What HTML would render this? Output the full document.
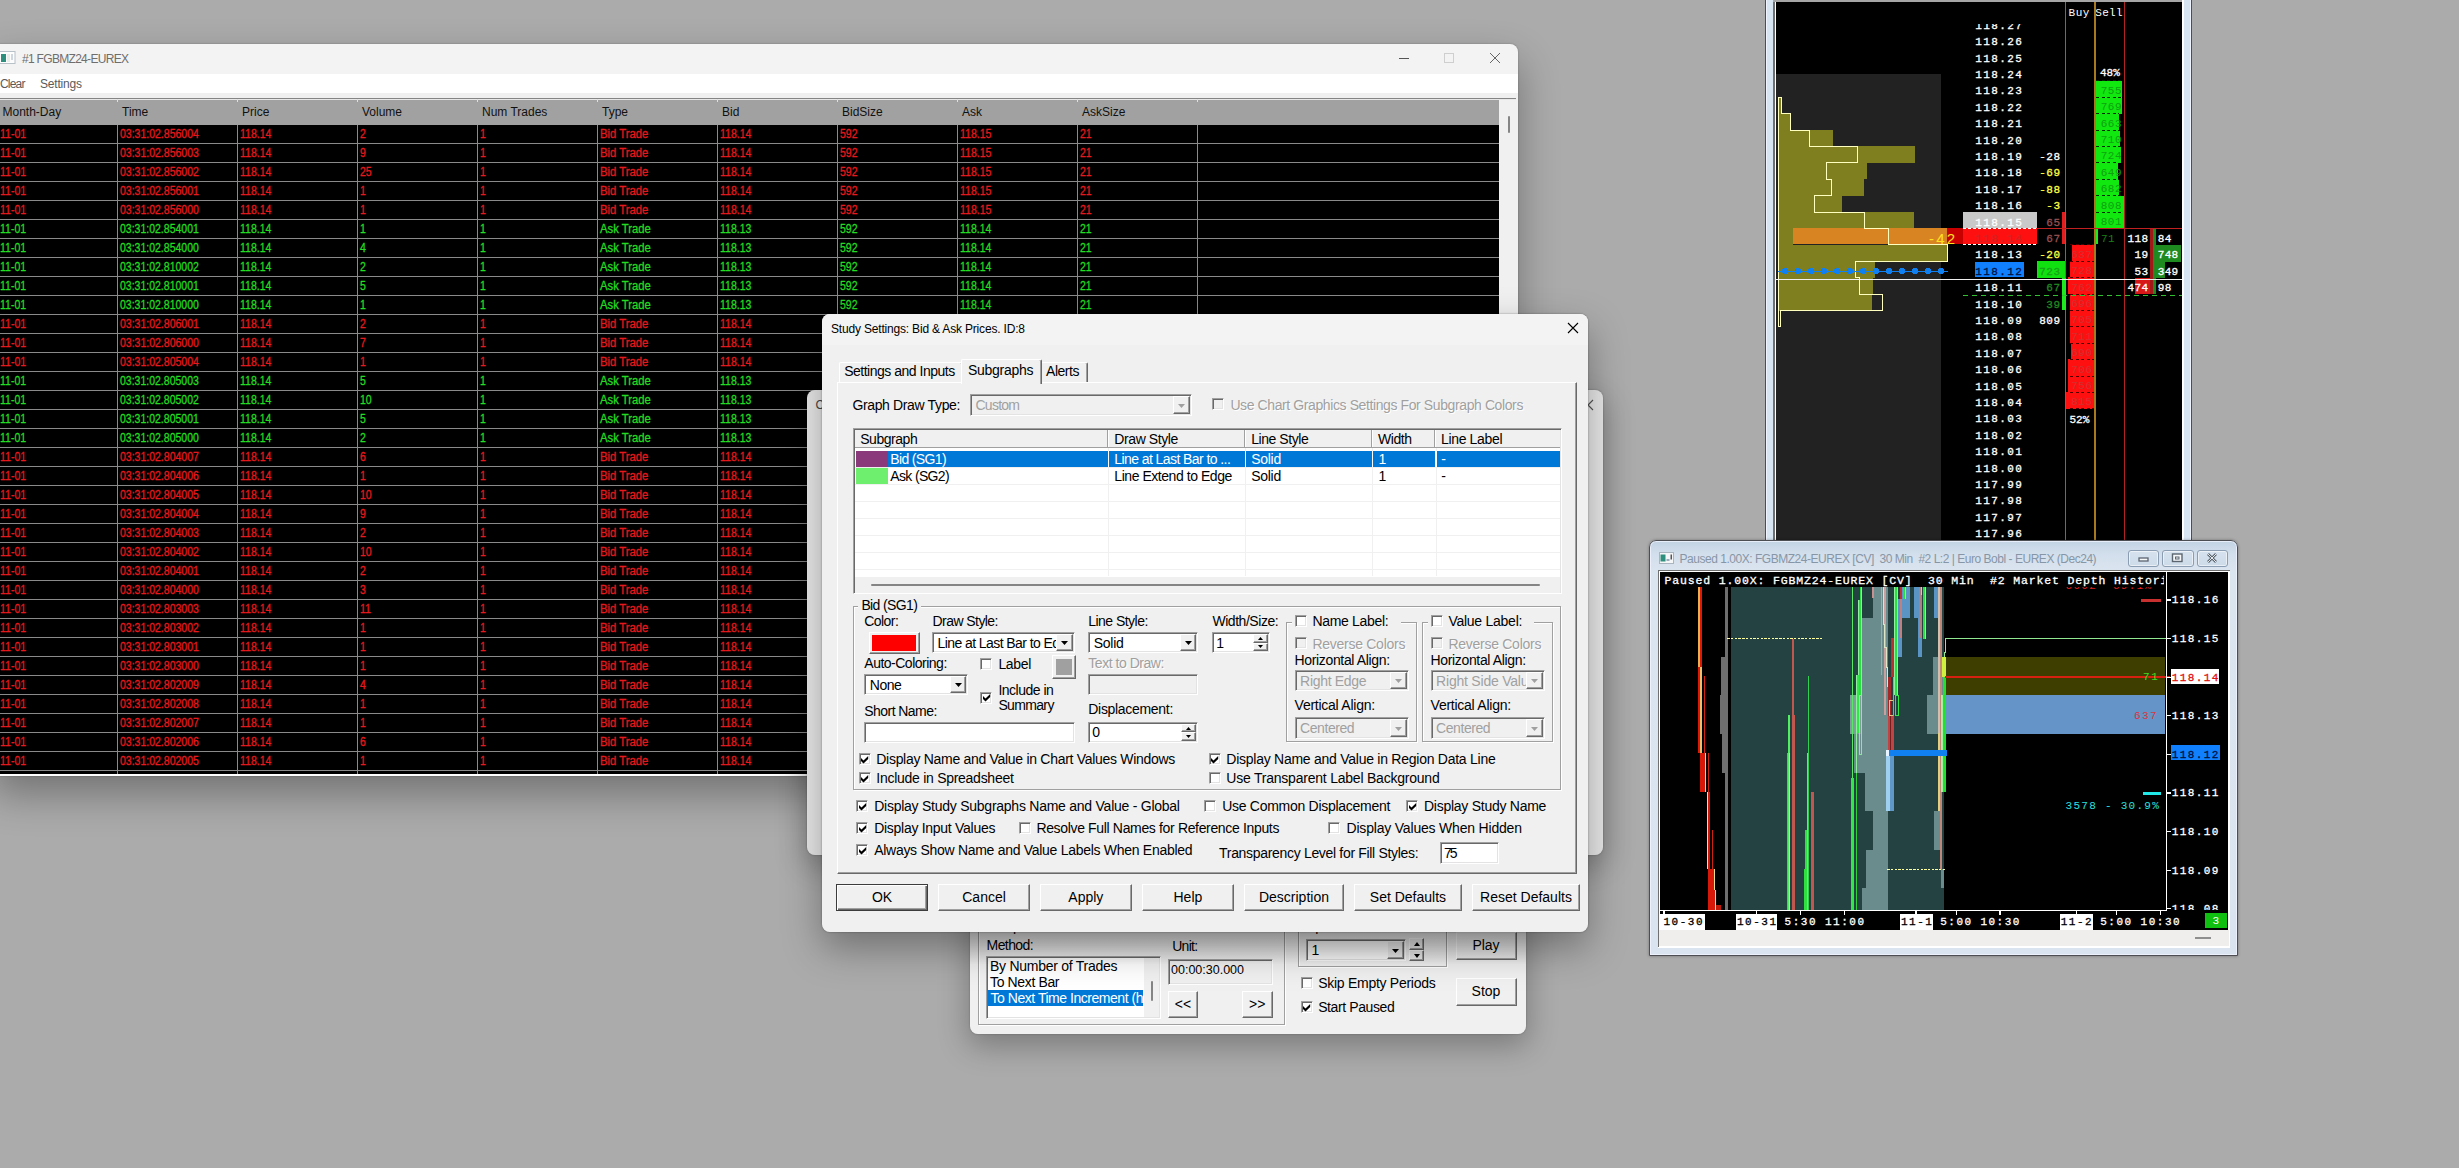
<!DOCTYPE html><html><head><meta charset="utf-8"><title>screen</title><style>
html,body{margin:0;padding:0}
body{width:2459px;height:1168px;overflow:hidden;background:#ababab;position:relative;font-family:"Liberation Sans",sans-serif}
.r{position:absolute;box-sizing:border-box}
.t{position:absolute;white-space:pre;display:block}
.layer{position:absolute;left:0;top:0;width:2459px;height:1168px;overflow:hidden}
svg{position:absolute;overflow:visible}
</style></head><body><!-- part_table --><div class="r" style="left:-8px;top:44px;width:1526px;height:732px;border-radius:8px;box-shadow:0 18px 40px 0 rgba(0,0,0,.33), 0 0 2px rgba(0,0,0,.3);"></div><div class="layer" style="clip-path:inset(44px 941px 392px -8px round 8px);"><div class="r" style="left:-8.00px;top:44.00px;width:1526.00px;height:30.00px;background:#f3f3f3;"></div><div class="r" style="left:-8.00px;top:74.00px;width:1526.00px;height:18.50px;background:#ffffff;"></div><div class="r" style="left:-8.00px;top:92.50px;width:1526.00px;height:683.50px;background:#f0f0f0;"></div><svg class="r" style="left:0;top:51px" width="16" height="14" viewBox="0 0 16 14"><rect x="-3" y="0.5" width="18" height="12" fill="#fdfdfd" stroke="#b8c0c8"/><rect x="1" y="3" width="5" height="8" fill="#2f8f7f"/><rect x="7" y="3" width="3" height="8" fill="#e8efe8"/><rect x="11" y="3" width="2" height="6" fill="#cfd8e0"/></svg><span class="t" style="top:50.60px;font:12px 'Liberation Sans', sans-serif;line-height:16px;color:#6e6e6e;letter-spacing:-0.692px;left:22.00px;">#1 FGBMZ24-EUREX</span><span class="t" style="top:75.80px;font:12px 'Liberation Sans', sans-serif;line-height:16px;color:#5a5a5a;letter-spacing:-0.797px;left:0.00px;">Clear</span><span class="t" style="top:75.80px;font:12px 'Liberation Sans', sans-serif;line-height:16px;color:#5a5a5a;letter-spacing:-0.194px;left:40.00px;">Settings</span><svg class="r" style="left:1390px;top:48px" width="120" height="22" viewBox="0 0 120 22" fill="none"><path d="M9 10.5h10" stroke="#555" stroke-width="1"/><rect x="54.5" y="5.5" width="9" height="9" stroke="#cfcfcf"/><path d="M100 5l10 10M110 5l-10 10" stroke="#666" stroke-width="1"/></svg><div class="r" style="left:0.00px;top:97.60px;width:1516.00px;height:1.20px;background:#858585;"></div><div class="r" style="left:0.00px;top:99.00px;width:1516.00px;height:1.00px;background:#e8e8e8;"></div><div class="r" style="left:0.00px;top:100.00px;width:1499.00px;height:25.00px;background:#a1a1a1;"></div><div class="r" style="left:0.00px;top:125.00px;width:1499.00px;height:649.00px;background:#000;"></div><div class="r" style="left:0.00px;top:774.00px;width:1499.00px;height:2.00px;background:#fff;"></div><span class="t" style="top:104.00px;font:12px 'Liberation Sans', sans-serif;line-height:16px;color:#111;left:2.50px;">Month-Day</span><div class="r" style="left:117.00px;top:99.00px;width:1.00px;height:3.00px;background:#e0e0e0;"></div><span class="t" style="top:104.00px;font:12px 'Liberation Sans', sans-serif;line-height:16px;color:#111;left:122.00px;">Time</span><div class="r" style="left:237.00px;top:99.00px;width:1.00px;height:3.00px;background:#e0e0e0;"></div><span class="t" style="top:104.00px;font:12px 'Liberation Sans', sans-serif;line-height:16px;color:#111;left:242.00px;">Price</span><div class="r" style="left:357.00px;top:99.00px;width:1.00px;height:3.00px;background:#e0e0e0;"></div><span class="t" style="top:104.00px;font:12px 'Liberation Sans', sans-serif;line-height:16px;color:#111;left:362.00px;">Volume</span><div class="r" style="left:477.00px;top:99.00px;width:1.00px;height:3.00px;background:#e0e0e0;"></div><span class="t" style="top:104.00px;font:12px 'Liberation Sans', sans-serif;line-height:16px;color:#111;left:482.00px;">Num Trades</span><div class="r" style="left:597.00px;top:99.00px;width:1.00px;height:3.00px;background:#e0e0e0;"></div><span class="t" style="top:104.00px;font:12px 'Liberation Sans', sans-serif;line-height:16px;color:#111;left:602.00px;">Type</span><div class="r" style="left:717.00px;top:99.00px;width:1.00px;height:3.00px;background:#e0e0e0;"></div><span class="t" style="top:104.00px;font:12px 'Liberation Sans', sans-serif;line-height:16px;color:#111;left:722.00px;">Bid</span><div class="r" style="left:837.00px;top:99.00px;width:1.00px;height:3.00px;background:#e0e0e0;"></div><span class="t" style="top:104.00px;font:12px 'Liberation Sans', sans-serif;line-height:16px;color:#111;left:842.00px;">BidSize</span><div class="r" style="left:957.00px;top:99.00px;width:1.00px;height:3.00px;background:#e0e0e0;"></div><span class="t" style="top:104.00px;font:12px 'Liberation Sans', sans-serif;line-height:16px;color:#111;left:962.00px;">Ask</span><div class="r" style="left:1077.00px;top:99.00px;width:1.00px;height:3.00px;background:#e0e0e0;"></div><span class="t" style="top:104.00px;font:12px 'Liberation Sans', sans-serif;line-height:16px;color:#111;left:1082.00px;">AskSize</span><div class="r" style="left:1197.00px;top:99.00px;width:1.00px;height:3.00px;background:#e0e0e0;"></div><div class="r" style="left:117.00px;top:125.00px;width:1.00px;height:649.00px;background:#8a8a8a;"></div><div class="r" style="left:237.00px;top:125.00px;width:1.00px;height:649.00px;background:#8a8a8a;"></div><div class="r" style="left:357.00px;top:125.00px;width:1.00px;height:649.00px;background:#8a8a8a;"></div><div class="r" style="left:477.00px;top:125.00px;width:1.00px;height:649.00px;background:#8a8a8a;"></div><div class="r" style="left:597.00px;top:125.00px;width:1.00px;height:649.00px;background:#8a8a8a;"></div><div class="r" style="left:717.00px;top:125.00px;width:1.00px;height:649.00px;background:#8a8a8a;"></div><div class="r" style="left:837.00px;top:125.00px;width:1.00px;height:649.00px;background:#8a8a8a;"></div><div class="r" style="left:957.00px;top:125.00px;width:1.00px;height:649.00px;background:#8a8a8a;"></div><div class="r" style="left:1077.00px;top:125.00px;width:1.00px;height:649.00px;background:#8a8a8a;"></div><div class="r" style="left:1197.00px;top:125.00px;width:1.00px;height:649.00px;background:#8a8a8a;"></div><div class="r" style="left:0.00px;top:143.00px;width:1499.00px;height:1.00px;background:#8a8a8a;"></div><div class="r" style="left:0.00px;top:162.00px;width:1499.00px;height:1.00px;background:#8a8a8a;"></div><div class="r" style="left:0.00px;top:181.00px;width:1499.00px;height:1.00px;background:#8a8a8a;"></div><div class="r" style="left:0.00px;top:200.00px;width:1499.00px;height:1.00px;background:#8a8a8a;"></div><div class="r" style="left:0.00px;top:219.00px;width:1499.00px;height:1.00px;background:#8a8a8a;"></div><div class="r" style="left:0.00px;top:238.00px;width:1499.00px;height:1.00px;background:#8a8a8a;"></div><div class="r" style="left:0.00px;top:257.00px;width:1499.00px;height:1.00px;background:#8a8a8a;"></div><div class="r" style="left:0.00px;top:276.00px;width:1499.00px;height:1.00px;background:#8a8a8a;"></div><div class="r" style="left:0.00px;top:295.00px;width:1499.00px;height:1.00px;background:#8a8a8a;"></div><div class="r" style="left:0.00px;top:314.00px;width:1499.00px;height:1.00px;background:#8a8a8a;"></div><div class="r" style="left:0.00px;top:333.00px;width:1499.00px;height:1.00px;background:#8a8a8a;"></div><div class="r" style="left:0.00px;top:352.00px;width:1499.00px;height:1.00px;background:#8a8a8a;"></div><div class="r" style="left:0.00px;top:371.00px;width:1499.00px;height:1.00px;background:#8a8a8a;"></div><div class="r" style="left:0.00px;top:390.00px;width:1499.00px;height:1.00px;background:#8a8a8a;"></div><div class="r" style="left:0.00px;top:409.00px;width:1499.00px;height:1.00px;background:#8a8a8a;"></div><div class="r" style="left:0.00px;top:428.00px;width:1499.00px;height:1.00px;background:#8a8a8a;"></div><div class="r" style="left:0.00px;top:447.00px;width:1499.00px;height:1.00px;background:#8a8a8a;"></div><div class="r" style="left:0.00px;top:466.00px;width:1499.00px;height:1.00px;background:#8a8a8a;"></div><div class="r" style="left:0.00px;top:485.00px;width:1499.00px;height:1.00px;background:#8a8a8a;"></div><div class="r" style="left:0.00px;top:504.00px;width:1499.00px;height:1.00px;background:#8a8a8a;"></div><div class="r" style="left:0.00px;top:523.00px;width:1499.00px;height:1.00px;background:#8a8a8a;"></div><div class="r" style="left:0.00px;top:542.00px;width:1499.00px;height:1.00px;background:#8a8a8a;"></div><div class="r" style="left:0.00px;top:561.00px;width:1499.00px;height:1.00px;background:#8a8a8a;"></div><div class="r" style="left:0.00px;top:580.00px;width:1499.00px;height:1.00px;background:#8a8a8a;"></div><div class="r" style="left:0.00px;top:599.00px;width:1499.00px;height:1.00px;background:#8a8a8a;"></div><div class="r" style="left:0.00px;top:618.00px;width:1499.00px;height:1.00px;background:#8a8a8a;"></div><div class="r" style="left:0.00px;top:637.00px;width:1499.00px;height:1.00px;background:#8a8a8a;"></div><div class="r" style="left:0.00px;top:656.00px;width:1499.00px;height:1.00px;background:#8a8a8a;"></div><div class="r" style="left:0.00px;top:675.00px;width:1499.00px;height:1.00px;background:#8a8a8a;"></div><div class="r" style="left:0.00px;top:694.00px;width:1499.00px;height:1.00px;background:#8a8a8a;"></div><div class="r" style="left:0.00px;top:713.00px;width:1499.00px;height:1.00px;background:#8a8a8a;"></div><div class="r" style="left:0.00px;top:732.00px;width:1499.00px;height:1.00px;background:#8a8a8a;"></div><div class="r" style="left:0.00px;top:751.00px;width:1499.00px;height:1.00px;background:#8a8a8a;"></div><div class="r" style="left:0.00px;top:770.00px;width:1499.00px;height:1.00px;background:#8a8a8a;"></div><span class="t" style="top:125.60px;font:12px 'Liberation Sans', sans-serif;line-height:16px;color:#e8181c;left:-0.50px;transform:scaleX(0.875);transform-origin:0 50%;-webkit-text-stroke:0.3px #e8181c;">11-01</span><span class="t" style="top:125.60px;font:12px 'Liberation Sans', sans-serif;line-height:16px;color:#e8181c;left:119.50px;transform:scaleX(0.875);transform-origin:0 50%;-webkit-text-stroke:0.3px #e8181c;">03:31:02.856004</span><span class="t" style="top:125.60px;font:12px 'Liberation Sans', sans-serif;line-height:16px;color:#e8181c;left:239.50px;transform:scaleX(0.875);transform-origin:0 50%;-webkit-text-stroke:0.3px #e8181c;">118.14</span><span class="t" style="top:125.60px;font:12px 'Liberation Sans', sans-serif;line-height:16px;color:#e8181c;left:359.50px;transform:scaleX(0.875);transform-origin:0 50%;-webkit-text-stroke:0.3px #e8181c;">2</span><span class="t" style="top:125.60px;font:12px 'Liberation Sans', sans-serif;line-height:16px;color:#e8181c;left:479.50px;transform:scaleX(0.875);transform-origin:0 50%;-webkit-text-stroke:0.3px #e8181c;">1</span><span class="t" style="top:125.60px;font:12px 'Liberation Sans', sans-serif;line-height:16px;color:#e8181c;left:599.50px;transform:scaleX(0.94);transform-origin:0 50%;-webkit-text-stroke:0.3px #e8181c;">Bid Trade</span><span class="t" style="top:125.60px;font:12px 'Liberation Sans', sans-serif;line-height:16px;color:#e8181c;left:719.50px;transform:scaleX(0.875);transform-origin:0 50%;-webkit-text-stroke:0.3px #e8181c;">118.14</span><span class="t" style="top:125.60px;font:12px 'Liberation Sans', sans-serif;line-height:16px;color:#e8181c;left:839.50px;transform:scaleX(0.875);transform-origin:0 50%;-webkit-text-stroke:0.3px #e8181c;">592</span><span class="t" style="top:125.60px;font:12px 'Liberation Sans', sans-serif;line-height:16px;color:#e8181c;left:959.50px;transform:scaleX(0.875);transform-origin:0 50%;-webkit-text-stroke:0.3px #e8181c;">118.15</span><span class="t" style="top:125.60px;font:12px 'Liberation Sans', sans-serif;line-height:16px;color:#e8181c;left:1079.50px;transform:scaleX(0.875);transform-origin:0 50%;-webkit-text-stroke:0.3px #e8181c;">21</span><span class="t" style="top:144.60px;font:12px 'Liberation Sans', sans-serif;line-height:16px;color:#e8181c;left:-0.50px;transform:scaleX(0.875);transform-origin:0 50%;-webkit-text-stroke:0.3px #e8181c;">11-01</span><span class="t" style="top:144.60px;font:12px 'Liberation Sans', sans-serif;line-height:16px;color:#e8181c;left:119.50px;transform:scaleX(0.875);transform-origin:0 50%;-webkit-text-stroke:0.3px #e8181c;">03:31:02.856003</span><span class="t" style="top:144.60px;font:12px 'Liberation Sans', sans-serif;line-height:16px;color:#e8181c;left:239.50px;transform:scaleX(0.875);transform-origin:0 50%;-webkit-text-stroke:0.3px #e8181c;">118.14</span><span class="t" style="top:144.60px;font:12px 'Liberation Sans', sans-serif;line-height:16px;color:#e8181c;left:359.50px;transform:scaleX(0.875);transform-origin:0 50%;-webkit-text-stroke:0.3px #e8181c;">9</span><span class="t" style="top:144.60px;font:12px 'Liberation Sans', sans-serif;line-height:16px;color:#e8181c;left:479.50px;transform:scaleX(0.875);transform-origin:0 50%;-webkit-text-stroke:0.3px #e8181c;">1</span><span class="t" style="top:144.60px;font:12px 'Liberation Sans', sans-serif;line-height:16px;color:#e8181c;left:599.50px;transform:scaleX(0.94);transform-origin:0 50%;-webkit-text-stroke:0.3px #e8181c;">Bid Trade</span><span class="t" style="top:144.60px;font:12px 'Liberation Sans', sans-serif;line-height:16px;color:#e8181c;left:719.50px;transform:scaleX(0.875);transform-origin:0 50%;-webkit-text-stroke:0.3px #e8181c;">118.14</span><span class="t" style="top:144.60px;font:12px 'Liberation Sans', sans-serif;line-height:16px;color:#e8181c;left:839.50px;transform:scaleX(0.875);transform-origin:0 50%;-webkit-text-stroke:0.3px #e8181c;">592</span><span class="t" style="top:144.60px;font:12px 'Liberation Sans', sans-serif;line-height:16px;color:#e8181c;left:959.50px;transform:scaleX(0.875);transform-origin:0 50%;-webkit-text-stroke:0.3px #e8181c;">118.15</span><span class="t" style="top:144.60px;font:12px 'Liberation Sans', sans-serif;line-height:16px;color:#e8181c;left:1079.50px;transform:scaleX(0.875);transform-origin:0 50%;-webkit-text-stroke:0.3px #e8181c;">21</span><span class="t" style="top:163.60px;font:12px 'Liberation Sans', sans-serif;line-height:16px;color:#e8181c;left:-0.50px;transform:scaleX(0.875);transform-origin:0 50%;-webkit-text-stroke:0.3px #e8181c;">11-01</span><span class="t" style="top:163.60px;font:12px 'Liberation Sans', sans-serif;line-height:16px;color:#e8181c;left:119.50px;transform:scaleX(0.875);transform-origin:0 50%;-webkit-text-stroke:0.3px #e8181c;">03:31:02.856002</span><span class="t" style="top:163.60px;font:12px 'Liberation Sans', sans-serif;line-height:16px;color:#e8181c;left:239.50px;transform:scaleX(0.875);transform-origin:0 50%;-webkit-text-stroke:0.3px #e8181c;">118.14</span><span class="t" style="top:163.60px;font:12px 'Liberation Sans', sans-serif;line-height:16px;color:#e8181c;left:359.50px;transform:scaleX(0.875);transform-origin:0 50%;-webkit-text-stroke:0.3px #e8181c;">25</span><span class="t" style="top:163.60px;font:12px 'Liberation Sans', sans-serif;line-height:16px;color:#e8181c;left:479.50px;transform:scaleX(0.875);transform-origin:0 50%;-webkit-text-stroke:0.3px #e8181c;">1</span><span class="t" style="top:163.60px;font:12px 'Liberation Sans', sans-serif;line-height:16px;color:#e8181c;left:599.50px;transform:scaleX(0.94);transform-origin:0 50%;-webkit-text-stroke:0.3px #e8181c;">Bid Trade</span><span class="t" style="top:163.60px;font:12px 'Liberation Sans', sans-serif;line-height:16px;color:#e8181c;left:719.50px;transform:scaleX(0.875);transform-origin:0 50%;-webkit-text-stroke:0.3px #e8181c;">118.14</span><span class="t" style="top:163.60px;font:12px 'Liberation Sans', sans-serif;line-height:16px;color:#e8181c;left:839.50px;transform:scaleX(0.875);transform-origin:0 50%;-webkit-text-stroke:0.3px #e8181c;">592</span><span class="t" style="top:163.60px;font:12px 'Liberation Sans', sans-serif;line-height:16px;color:#e8181c;left:959.50px;transform:scaleX(0.875);transform-origin:0 50%;-webkit-text-stroke:0.3px #e8181c;">118.15</span><span class="t" style="top:163.60px;font:12px 'Liberation Sans', sans-serif;line-height:16px;color:#e8181c;left:1079.50px;transform:scaleX(0.875);transform-origin:0 50%;-webkit-text-stroke:0.3px #e8181c;">21</span><span class="t" style="top:182.60px;font:12px 'Liberation Sans', sans-serif;line-height:16px;color:#e8181c;left:-0.50px;transform:scaleX(0.875);transform-origin:0 50%;-webkit-text-stroke:0.3px #e8181c;">11-01</span><span class="t" style="top:182.60px;font:12px 'Liberation Sans', sans-serif;line-height:16px;color:#e8181c;left:119.50px;transform:scaleX(0.875);transform-origin:0 50%;-webkit-text-stroke:0.3px #e8181c;">03:31:02.856001</span><span class="t" style="top:182.60px;font:12px 'Liberation Sans', sans-serif;line-height:16px;color:#e8181c;left:239.50px;transform:scaleX(0.875);transform-origin:0 50%;-webkit-text-stroke:0.3px #e8181c;">118.14</span><span class="t" style="top:182.60px;font:12px 'Liberation Sans', sans-serif;line-height:16px;color:#e8181c;left:359.50px;transform:scaleX(0.875);transform-origin:0 50%;-webkit-text-stroke:0.3px #e8181c;">1</span><span class="t" style="top:182.60px;font:12px 'Liberation Sans', sans-serif;line-height:16px;color:#e8181c;left:479.50px;transform:scaleX(0.875);transform-origin:0 50%;-webkit-text-stroke:0.3px #e8181c;">1</span><span class="t" style="top:182.60px;font:12px 'Liberation Sans', sans-serif;line-height:16px;color:#e8181c;left:599.50px;transform:scaleX(0.94);transform-origin:0 50%;-webkit-text-stroke:0.3px #e8181c;">Bid Trade</span><span class="t" style="top:182.60px;font:12px 'Liberation Sans', sans-serif;line-height:16px;color:#e8181c;left:719.50px;transform:scaleX(0.875);transform-origin:0 50%;-webkit-text-stroke:0.3px #e8181c;">118.14</span><span class="t" style="top:182.60px;font:12px 'Liberation Sans', sans-serif;line-height:16px;color:#e8181c;left:839.50px;transform:scaleX(0.875);transform-origin:0 50%;-webkit-text-stroke:0.3px #e8181c;">592</span><span class="t" style="top:182.60px;font:12px 'Liberation Sans', sans-serif;line-height:16px;color:#e8181c;left:959.50px;transform:scaleX(0.875);transform-origin:0 50%;-webkit-text-stroke:0.3px #e8181c;">118.15</span><span class="t" style="top:182.60px;font:12px 'Liberation Sans', sans-serif;line-height:16px;color:#e8181c;left:1079.50px;transform:scaleX(0.875);transform-origin:0 50%;-webkit-text-stroke:0.3px #e8181c;">21</span><span class="t" style="top:201.60px;font:12px 'Liberation Sans', sans-serif;line-height:16px;color:#e8181c;left:-0.50px;transform:scaleX(0.875);transform-origin:0 50%;-webkit-text-stroke:0.3px #e8181c;">11-01</span><span class="t" style="top:201.60px;font:12px 'Liberation Sans', sans-serif;line-height:16px;color:#e8181c;left:119.50px;transform:scaleX(0.875);transform-origin:0 50%;-webkit-text-stroke:0.3px #e8181c;">03:31:02.856000</span><span class="t" style="top:201.60px;font:12px 'Liberation Sans', sans-serif;line-height:16px;color:#e8181c;left:239.50px;transform:scaleX(0.875);transform-origin:0 50%;-webkit-text-stroke:0.3px #e8181c;">118.14</span><span class="t" style="top:201.60px;font:12px 'Liberation Sans', sans-serif;line-height:16px;color:#e8181c;left:359.50px;transform:scaleX(0.875);transform-origin:0 50%;-webkit-text-stroke:0.3px #e8181c;">1</span><span class="t" style="top:201.60px;font:12px 'Liberation Sans', sans-serif;line-height:16px;color:#e8181c;left:479.50px;transform:scaleX(0.875);transform-origin:0 50%;-webkit-text-stroke:0.3px #e8181c;">1</span><span class="t" style="top:201.60px;font:12px 'Liberation Sans', sans-serif;line-height:16px;color:#e8181c;left:599.50px;transform:scaleX(0.94);transform-origin:0 50%;-webkit-text-stroke:0.3px #e8181c;">Bid Trade</span><span class="t" style="top:201.60px;font:12px 'Liberation Sans', sans-serif;line-height:16px;color:#e8181c;left:719.50px;transform:scaleX(0.875);transform-origin:0 50%;-webkit-text-stroke:0.3px #e8181c;">118.14</span><span class="t" style="top:201.60px;font:12px 'Liberation Sans', sans-serif;line-height:16px;color:#e8181c;left:839.50px;transform:scaleX(0.875);transform-origin:0 50%;-webkit-text-stroke:0.3px #e8181c;">592</span><span class="t" style="top:201.60px;font:12px 'Liberation Sans', sans-serif;line-height:16px;color:#e8181c;left:959.50px;transform:scaleX(0.875);transform-origin:0 50%;-webkit-text-stroke:0.3px #e8181c;">118.15</span><span class="t" style="top:201.60px;font:12px 'Liberation Sans', sans-serif;line-height:16px;color:#e8181c;left:1079.50px;transform:scaleX(0.875);transform-origin:0 50%;-webkit-text-stroke:0.3px #e8181c;">21</span><span class="t" style="top:220.60px;font:12px 'Liberation Sans', sans-serif;line-height:16px;color:#22dd22;left:-0.50px;transform:scaleX(0.875);transform-origin:0 50%;-webkit-text-stroke:0.3px #22dd22;">11-01</span><span class="t" style="top:220.60px;font:12px 'Liberation Sans', sans-serif;line-height:16px;color:#22dd22;left:119.50px;transform:scaleX(0.875);transform-origin:0 50%;-webkit-text-stroke:0.3px #22dd22;">03:31:02.854001</span><span class="t" style="top:220.60px;font:12px 'Liberation Sans', sans-serif;line-height:16px;color:#22dd22;left:239.50px;transform:scaleX(0.875);transform-origin:0 50%;-webkit-text-stroke:0.3px #22dd22;">118.14</span><span class="t" style="top:220.60px;font:12px 'Liberation Sans', sans-serif;line-height:16px;color:#22dd22;left:359.50px;transform:scaleX(0.875);transform-origin:0 50%;-webkit-text-stroke:0.3px #22dd22;">1</span><span class="t" style="top:220.60px;font:12px 'Liberation Sans', sans-serif;line-height:16px;color:#22dd22;left:479.50px;transform:scaleX(0.875);transform-origin:0 50%;-webkit-text-stroke:0.3px #22dd22;">1</span><span class="t" style="top:220.60px;font:12px 'Liberation Sans', sans-serif;line-height:16px;color:#22dd22;left:599.50px;transform:scaleX(0.94);transform-origin:0 50%;-webkit-text-stroke:0.3px #22dd22;">Ask Trade</span><span class="t" style="top:220.60px;font:12px 'Liberation Sans', sans-serif;line-height:16px;color:#22dd22;left:719.50px;transform:scaleX(0.875);transform-origin:0 50%;-webkit-text-stroke:0.3px #22dd22;">118.13</span><span class="t" style="top:220.60px;font:12px 'Liberation Sans', sans-serif;line-height:16px;color:#22dd22;left:839.50px;transform:scaleX(0.875);transform-origin:0 50%;-webkit-text-stroke:0.3px #22dd22;">592</span><span class="t" style="top:220.60px;font:12px 'Liberation Sans', sans-serif;line-height:16px;color:#22dd22;left:959.50px;transform:scaleX(0.875);transform-origin:0 50%;-webkit-text-stroke:0.3px #22dd22;">118.14</span><span class="t" style="top:220.60px;font:12px 'Liberation Sans', sans-serif;line-height:16px;color:#22dd22;left:1079.50px;transform:scaleX(0.875);transform-origin:0 50%;-webkit-text-stroke:0.3px #22dd22;">21</span><span class="t" style="top:239.60px;font:12px 'Liberation Sans', sans-serif;line-height:16px;color:#22dd22;left:-0.50px;transform:scaleX(0.875);transform-origin:0 50%;-webkit-text-stroke:0.3px #22dd22;">11-01</span><span class="t" style="top:239.60px;font:12px 'Liberation Sans', sans-serif;line-height:16px;color:#22dd22;left:119.50px;transform:scaleX(0.875);transform-origin:0 50%;-webkit-text-stroke:0.3px #22dd22;">03:31:02.854000</span><span class="t" style="top:239.60px;font:12px 'Liberation Sans', sans-serif;line-height:16px;color:#22dd22;left:239.50px;transform:scaleX(0.875);transform-origin:0 50%;-webkit-text-stroke:0.3px #22dd22;">118.14</span><span class="t" style="top:239.60px;font:12px 'Liberation Sans', sans-serif;line-height:16px;color:#22dd22;left:359.50px;transform:scaleX(0.875);transform-origin:0 50%;-webkit-text-stroke:0.3px #22dd22;">4</span><span class="t" style="top:239.60px;font:12px 'Liberation Sans', sans-serif;line-height:16px;color:#22dd22;left:479.50px;transform:scaleX(0.875);transform-origin:0 50%;-webkit-text-stroke:0.3px #22dd22;">1</span><span class="t" style="top:239.60px;font:12px 'Liberation Sans', sans-serif;line-height:16px;color:#22dd22;left:599.50px;transform:scaleX(0.94);transform-origin:0 50%;-webkit-text-stroke:0.3px #22dd22;">Ask Trade</span><span class="t" style="top:239.60px;font:12px 'Liberation Sans', sans-serif;line-height:16px;color:#22dd22;left:719.50px;transform:scaleX(0.875);transform-origin:0 50%;-webkit-text-stroke:0.3px #22dd22;">118.13</span><span class="t" style="top:239.60px;font:12px 'Liberation Sans', sans-serif;line-height:16px;color:#22dd22;left:839.50px;transform:scaleX(0.875);transform-origin:0 50%;-webkit-text-stroke:0.3px #22dd22;">592</span><span class="t" style="top:239.60px;font:12px 'Liberation Sans', sans-serif;line-height:16px;color:#22dd22;left:959.50px;transform:scaleX(0.875);transform-origin:0 50%;-webkit-text-stroke:0.3px #22dd22;">118.14</span><span class="t" style="top:239.60px;font:12px 'Liberation Sans', sans-serif;line-height:16px;color:#22dd22;left:1079.50px;transform:scaleX(0.875);transform-origin:0 50%;-webkit-text-stroke:0.3px #22dd22;">21</span><span class="t" style="top:258.60px;font:12px 'Liberation Sans', sans-serif;line-height:16px;color:#22dd22;left:-0.50px;transform:scaleX(0.875);transform-origin:0 50%;-webkit-text-stroke:0.3px #22dd22;">11-01</span><span class="t" style="top:258.60px;font:12px 'Liberation Sans', sans-serif;line-height:16px;color:#22dd22;left:119.50px;transform:scaleX(0.875);transform-origin:0 50%;-webkit-text-stroke:0.3px #22dd22;">03:31:02.810002</span><span class="t" style="top:258.60px;font:12px 'Liberation Sans', sans-serif;line-height:16px;color:#22dd22;left:239.50px;transform:scaleX(0.875);transform-origin:0 50%;-webkit-text-stroke:0.3px #22dd22;">118.14</span><span class="t" style="top:258.60px;font:12px 'Liberation Sans', sans-serif;line-height:16px;color:#22dd22;left:359.50px;transform:scaleX(0.875);transform-origin:0 50%;-webkit-text-stroke:0.3px #22dd22;">2</span><span class="t" style="top:258.60px;font:12px 'Liberation Sans', sans-serif;line-height:16px;color:#22dd22;left:479.50px;transform:scaleX(0.875);transform-origin:0 50%;-webkit-text-stroke:0.3px #22dd22;">1</span><span class="t" style="top:258.60px;font:12px 'Liberation Sans', sans-serif;line-height:16px;color:#22dd22;left:599.50px;transform:scaleX(0.94);transform-origin:0 50%;-webkit-text-stroke:0.3px #22dd22;">Ask Trade</span><span class="t" style="top:258.60px;font:12px 'Liberation Sans', sans-serif;line-height:16px;color:#22dd22;left:719.50px;transform:scaleX(0.875);transform-origin:0 50%;-webkit-text-stroke:0.3px #22dd22;">118.13</span><span class="t" style="top:258.60px;font:12px 'Liberation Sans', sans-serif;line-height:16px;color:#22dd22;left:839.50px;transform:scaleX(0.875);transform-origin:0 50%;-webkit-text-stroke:0.3px #22dd22;">592</span><span class="t" style="top:258.60px;font:12px 'Liberation Sans', sans-serif;line-height:16px;color:#22dd22;left:959.50px;transform:scaleX(0.875);transform-origin:0 50%;-webkit-text-stroke:0.3px #22dd22;">118.14</span><span class="t" style="top:258.60px;font:12px 'Liberation Sans', sans-serif;line-height:16px;color:#22dd22;left:1079.50px;transform:scaleX(0.875);transform-origin:0 50%;-webkit-text-stroke:0.3px #22dd22;">21</span><span class="t" style="top:277.60px;font:12px 'Liberation Sans', sans-serif;line-height:16px;color:#22dd22;left:-0.50px;transform:scaleX(0.875);transform-origin:0 50%;-webkit-text-stroke:0.3px #22dd22;">11-01</span><span class="t" style="top:277.60px;font:12px 'Liberation Sans', sans-serif;line-height:16px;color:#22dd22;left:119.50px;transform:scaleX(0.875);transform-origin:0 50%;-webkit-text-stroke:0.3px #22dd22;">03:31:02.810001</span><span class="t" style="top:277.60px;font:12px 'Liberation Sans', sans-serif;line-height:16px;color:#22dd22;left:239.50px;transform:scaleX(0.875);transform-origin:0 50%;-webkit-text-stroke:0.3px #22dd22;">118.14</span><span class="t" style="top:277.60px;font:12px 'Liberation Sans', sans-serif;line-height:16px;color:#22dd22;left:359.50px;transform:scaleX(0.875);transform-origin:0 50%;-webkit-text-stroke:0.3px #22dd22;">5</span><span class="t" style="top:277.60px;font:12px 'Liberation Sans', sans-serif;line-height:16px;color:#22dd22;left:479.50px;transform:scaleX(0.875);transform-origin:0 50%;-webkit-text-stroke:0.3px #22dd22;">1</span><span class="t" style="top:277.60px;font:12px 'Liberation Sans', sans-serif;line-height:16px;color:#22dd22;left:599.50px;transform:scaleX(0.94);transform-origin:0 50%;-webkit-text-stroke:0.3px #22dd22;">Ask Trade</span><span class="t" style="top:277.60px;font:12px 'Liberation Sans', sans-serif;line-height:16px;color:#22dd22;left:719.50px;transform:scaleX(0.875);transform-origin:0 50%;-webkit-text-stroke:0.3px #22dd22;">118.13</span><span class="t" style="top:277.60px;font:12px 'Liberation Sans', sans-serif;line-height:16px;color:#22dd22;left:839.50px;transform:scaleX(0.875);transform-origin:0 50%;-webkit-text-stroke:0.3px #22dd22;">592</span><span class="t" style="top:277.60px;font:12px 'Liberation Sans', sans-serif;line-height:16px;color:#22dd22;left:959.50px;transform:scaleX(0.875);transform-origin:0 50%;-webkit-text-stroke:0.3px #22dd22;">118.14</span><span class="t" style="top:277.60px;font:12px 'Liberation Sans', sans-serif;line-height:16px;color:#22dd22;left:1079.50px;transform:scaleX(0.875);transform-origin:0 50%;-webkit-text-stroke:0.3px #22dd22;">21</span><span class="t" style="top:296.60px;font:12px 'Liberation Sans', sans-serif;line-height:16px;color:#22dd22;left:-0.50px;transform:scaleX(0.875);transform-origin:0 50%;-webkit-text-stroke:0.3px #22dd22;">11-01</span><span class="t" style="top:296.60px;font:12px 'Liberation Sans', sans-serif;line-height:16px;color:#22dd22;left:119.50px;transform:scaleX(0.875);transform-origin:0 50%;-webkit-text-stroke:0.3px #22dd22;">03:31:02.810000</span><span class="t" style="top:296.60px;font:12px 'Liberation Sans', sans-serif;line-height:16px;color:#22dd22;left:239.50px;transform:scaleX(0.875);transform-origin:0 50%;-webkit-text-stroke:0.3px #22dd22;">118.14</span><span class="t" style="top:296.60px;font:12px 'Liberation Sans', sans-serif;line-height:16px;color:#22dd22;left:359.50px;transform:scaleX(0.875);transform-origin:0 50%;-webkit-text-stroke:0.3px #22dd22;">1</span><span class="t" style="top:296.60px;font:12px 'Liberation Sans', sans-serif;line-height:16px;color:#22dd22;left:479.50px;transform:scaleX(0.875);transform-origin:0 50%;-webkit-text-stroke:0.3px #22dd22;">1</span><span class="t" style="top:296.60px;font:12px 'Liberation Sans', sans-serif;line-height:16px;color:#22dd22;left:599.50px;transform:scaleX(0.94);transform-origin:0 50%;-webkit-text-stroke:0.3px #22dd22;">Ask Trade</span><span class="t" style="top:296.60px;font:12px 'Liberation Sans', sans-serif;line-height:16px;color:#22dd22;left:719.50px;transform:scaleX(0.875);transform-origin:0 50%;-webkit-text-stroke:0.3px #22dd22;">118.13</span><span class="t" style="top:296.60px;font:12px 'Liberation Sans', sans-serif;line-height:16px;color:#22dd22;left:839.50px;transform:scaleX(0.875);transform-origin:0 50%;-webkit-text-stroke:0.3px #22dd22;">592</span><span class="t" style="top:296.60px;font:12px 'Liberation Sans', sans-serif;line-height:16px;color:#22dd22;left:959.50px;transform:scaleX(0.875);transform-origin:0 50%;-webkit-text-stroke:0.3px #22dd22;">118.14</span><span class="t" style="top:296.60px;font:12px 'Liberation Sans', sans-serif;line-height:16px;color:#22dd22;left:1079.50px;transform:scaleX(0.875);transform-origin:0 50%;-webkit-text-stroke:0.3px #22dd22;">21</span><span class="t" style="top:315.60px;font:12px 'Liberation Sans', sans-serif;line-height:16px;color:#e8181c;left:-0.50px;transform:scaleX(0.875);transform-origin:0 50%;-webkit-text-stroke:0.3px #e8181c;">11-01</span><span class="t" style="top:315.60px;font:12px 'Liberation Sans', sans-serif;line-height:16px;color:#e8181c;left:119.50px;transform:scaleX(0.875);transform-origin:0 50%;-webkit-text-stroke:0.3px #e8181c;">03:31:02.806001</span><span class="t" style="top:315.60px;font:12px 'Liberation Sans', sans-serif;line-height:16px;color:#e8181c;left:239.50px;transform:scaleX(0.875);transform-origin:0 50%;-webkit-text-stroke:0.3px #e8181c;">118.14</span><span class="t" style="top:315.60px;font:12px 'Liberation Sans', sans-serif;line-height:16px;color:#e8181c;left:359.50px;transform:scaleX(0.875);transform-origin:0 50%;-webkit-text-stroke:0.3px #e8181c;">2</span><span class="t" style="top:315.60px;font:12px 'Liberation Sans', sans-serif;line-height:16px;color:#e8181c;left:479.50px;transform:scaleX(0.875);transform-origin:0 50%;-webkit-text-stroke:0.3px #e8181c;">1</span><span class="t" style="top:315.60px;font:12px 'Liberation Sans', sans-serif;line-height:16px;color:#e8181c;left:599.50px;transform:scaleX(0.94);transform-origin:0 50%;-webkit-text-stroke:0.3px #e8181c;">Bid Trade</span><span class="t" style="top:315.60px;font:12px 'Liberation Sans', sans-serif;line-height:16px;color:#e8181c;left:719.50px;transform:scaleX(0.875);transform-origin:0 50%;-webkit-text-stroke:0.3px #e8181c;">118.14</span><span class="t" style="top:315.60px;font:12px 'Liberation Sans', sans-serif;line-height:16px;color:#e8181c;left:839.50px;transform:scaleX(0.875);transform-origin:0 50%;-webkit-text-stroke:0.3px #e8181c;">592</span><span class="t" style="top:315.60px;font:12px 'Liberation Sans', sans-serif;line-height:16px;color:#e8181c;left:959.50px;transform:scaleX(0.875);transform-origin:0 50%;-webkit-text-stroke:0.3px #e8181c;">118.15</span><span class="t" style="top:315.60px;font:12px 'Liberation Sans', sans-serif;line-height:16px;color:#e8181c;left:1079.50px;transform:scaleX(0.875);transform-origin:0 50%;-webkit-text-stroke:0.3px #e8181c;">21</span><span class="t" style="top:334.60px;font:12px 'Liberation Sans', sans-serif;line-height:16px;color:#e8181c;left:-0.50px;transform:scaleX(0.875);transform-origin:0 50%;-webkit-text-stroke:0.3px #e8181c;">11-01</span><span class="t" style="top:334.60px;font:12px 'Liberation Sans', sans-serif;line-height:16px;color:#e8181c;left:119.50px;transform:scaleX(0.875);transform-origin:0 50%;-webkit-text-stroke:0.3px #e8181c;">03:31:02.806000</span><span class="t" style="top:334.60px;font:12px 'Liberation Sans', sans-serif;line-height:16px;color:#e8181c;left:239.50px;transform:scaleX(0.875);transform-origin:0 50%;-webkit-text-stroke:0.3px #e8181c;">118.14</span><span class="t" style="top:334.60px;font:12px 'Liberation Sans', sans-serif;line-height:16px;color:#e8181c;left:359.50px;transform:scaleX(0.875);transform-origin:0 50%;-webkit-text-stroke:0.3px #e8181c;">7</span><span class="t" style="top:334.60px;font:12px 'Liberation Sans', sans-serif;line-height:16px;color:#e8181c;left:479.50px;transform:scaleX(0.875);transform-origin:0 50%;-webkit-text-stroke:0.3px #e8181c;">1</span><span class="t" style="top:334.60px;font:12px 'Liberation Sans', sans-serif;line-height:16px;color:#e8181c;left:599.50px;transform:scaleX(0.94);transform-origin:0 50%;-webkit-text-stroke:0.3px #e8181c;">Bid Trade</span><span class="t" style="top:334.60px;font:12px 'Liberation Sans', sans-serif;line-height:16px;color:#e8181c;left:719.50px;transform:scaleX(0.875);transform-origin:0 50%;-webkit-text-stroke:0.3px #e8181c;">118.14</span><span class="t" style="top:334.60px;font:12px 'Liberation Sans', sans-serif;line-height:16px;color:#e8181c;left:839.50px;transform:scaleX(0.875);transform-origin:0 50%;-webkit-text-stroke:0.3px #e8181c;">592</span><span class="t" style="top:334.60px;font:12px 'Liberation Sans', sans-serif;line-height:16px;color:#e8181c;left:959.50px;transform:scaleX(0.875);transform-origin:0 50%;-webkit-text-stroke:0.3px #e8181c;">118.15</span><span class="t" style="top:334.60px;font:12px 'Liberation Sans', sans-serif;line-height:16px;color:#e8181c;left:1079.50px;transform:scaleX(0.875);transform-origin:0 50%;-webkit-text-stroke:0.3px #e8181c;">21</span><span class="t" style="top:353.60px;font:12px 'Liberation Sans', sans-serif;line-height:16px;color:#e8181c;left:-0.50px;transform:scaleX(0.875);transform-origin:0 50%;-webkit-text-stroke:0.3px #e8181c;">11-01</span><span class="t" style="top:353.60px;font:12px 'Liberation Sans', sans-serif;line-height:16px;color:#e8181c;left:119.50px;transform:scaleX(0.875);transform-origin:0 50%;-webkit-text-stroke:0.3px #e8181c;">03:31:02.805004</span><span class="t" style="top:353.60px;font:12px 'Liberation Sans', sans-serif;line-height:16px;color:#e8181c;left:239.50px;transform:scaleX(0.875);transform-origin:0 50%;-webkit-text-stroke:0.3px #e8181c;">118.14</span><span class="t" style="top:353.60px;font:12px 'Liberation Sans', sans-serif;line-height:16px;color:#e8181c;left:359.50px;transform:scaleX(0.875);transform-origin:0 50%;-webkit-text-stroke:0.3px #e8181c;">1</span><span class="t" style="top:353.60px;font:12px 'Liberation Sans', sans-serif;line-height:16px;color:#e8181c;left:479.50px;transform:scaleX(0.875);transform-origin:0 50%;-webkit-text-stroke:0.3px #e8181c;">1</span><span class="t" style="top:353.60px;font:12px 'Liberation Sans', sans-serif;line-height:16px;color:#e8181c;left:599.50px;transform:scaleX(0.94);transform-origin:0 50%;-webkit-text-stroke:0.3px #e8181c;">Bid Trade</span><span class="t" style="top:353.60px;font:12px 'Liberation Sans', sans-serif;line-height:16px;color:#e8181c;left:719.50px;transform:scaleX(0.875);transform-origin:0 50%;-webkit-text-stroke:0.3px #e8181c;">118.14</span><span class="t" style="top:353.60px;font:12px 'Liberation Sans', sans-serif;line-height:16px;color:#e8181c;left:839.50px;transform:scaleX(0.875);transform-origin:0 50%;-webkit-text-stroke:0.3px #e8181c;">592</span><span class="t" style="top:353.60px;font:12px 'Liberation Sans', sans-serif;line-height:16px;color:#e8181c;left:959.50px;transform:scaleX(0.875);transform-origin:0 50%;-webkit-text-stroke:0.3px #e8181c;">118.15</span><span class="t" style="top:353.60px;font:12px 'Liberation Sans', sans-serif;line-height:16px;color:#e8181c;left:1079.50px;transform:scaleX(0.875);transform-origin:0 50%;-webkit-text-stroke:0.3px #e8181c;">21</span><span class="t" style="top:372.60px;font:12px 'Liberation Sans', sans-serif;line-height:16px;color:#22dd22;left:-0.50px;transform:scaleX(0.875);transform-origin:0 50%;-webkit-text-stroke:0.3px #22dd22;">11-01</span><span class="t" style="top:372.60px;font:12px 'Liberation Sans', sans-serif;line-height:16px;color:#22dd22;left:119.50px;transform:scaleX(0.875);transform-origin:0 50%;-webkit-text-stroke:0.3px #22dd22;">03:31:02.805003</span><span class="t" style="top:372.60px;font:12px 'Liberation Sans', sans-serif;line-height:16px;color:#22dd22;left:239.50px;transform:scaleX(0.875);transform-origin:0 50%;-webkit-text-stroke:0.3px #22dd22;">118.14</span><span class="t" style="top:372.60px;font:12px 'Liberation Sans', sans-serif;line-height:16px;color:#22dd22;left:359.50px;transform:scaleX(0.875);transform-origin:0 50%;-webkit-text-stroke:0.3px #22dd22;">5</span><span class="t" style="top:372.60px;font:12px 'Liberation Sans', sans-serif;line-height:16px;color:#22dd22;left:479.50px;transform:scaleX(0.875);transform-origin:0 50%;-webkit-text-stroke:0.3px #22dd22;">1</span><span class="t" style="top:372.60px;font:12px 'Liberation Sans', sans-serif;line-height:16px;color:#22dd22;left:599.50px;transform:scaleX(0.94);transform-origin:0 50%;-webkit-text-stroke:0.3px #22dd22;">Ask Trade</span><span class="t" style="top:372.60px;font:12px 'Liberation Sans', sans-serif;line-height:16px;color:#22dd22;left:719.50px;transform:scaleX(0.875);transform-origin:0 50%;-webkit-text-stroke:0.3px #22dd22;">118.13</span><span class="t" style="top:372.60px;font:12px 'Liberation Sans', sans-serif;line-height:16px;color:#22dd22;left:839.50px;transform:scaleX(0.875);transform-origin:0 50%;-webkit-text-stroke:0.3px #22dd22;">592</span><span class="t" style="top:372.60px;font:12px 'Liberation Sans', sans-serif;line-height:16px;color:#22dd22;left:959.50px;transform:scaleX(0.875);transform-origin:0 50%;-webkit-text-stroke:0.3px #22dd22;">118.14</span><span class="t" style="top:372.60px;font:12px 'Liberation Sans', sans-serif;line-height:16px;color:#22dd22;left:1079.50px;transform:scaleX(0.875);transform-origin:0 50%;-webkit-text-stroke:0.3px #22dd22;">21</span><span class="t" style="top:391.60px;font:12px 'Liberation Sans', sans-serif;line-height:16px;color:#22dd22;left:-0.50px;transform:scaleX(0.875);transform-origin:0 50%;-webkit-text-stroke:0.3px #22dd22;">11-01</span><span class="t" style="top:391.60px;font:12px 'Liberation Sans', sans-serif;line-height:16px;color:#22dd22;left:119.50px;transform:scaleX(0.875);transform-origin:0 50%;-webkit-text-stroke:0.3px #22dd22;">03:31:02.805002</span><span class="t" style="top:391.60px;font:12px 'Liberation Sans', sans-serif;line-height:16px;color:#22dd22;left:239.50px;transform:scaleX(0.875);transform-origin:0 50%;-webkit-text-stroke:0.3px #22dd22;">118.14</span><span class="t" style="top:391.60px;font:12px 'Liberation Sans', sans-serif;line-height:16px;color:#22dd22;left:359.50px;transform:scaleX(0.875);transform-origin:0 50%;-webkit-text-stroke:0.3px #22dd22;">10</span><span class="t" style="top:391.60px;font:12px 'Liberation Sans', sans-serif;line-height:16px;color:#22dd22;left:479.50px;transform:scaleX(0.875);transform-origin:0 50%;-webkit-text-stroke:0.3px #22dd22;">1</span><span class="t" style="top:391.60px;font:12px 'Liberation Sans', sans-serif;line-height:16px;color:#22dd22;left:599.50px;transform:scaleX(0.94);transform-origin:0 50%;-webkit-text-stroke:0.3px #22dd22;">Ask Trade</span><span class="t" style="top:391.60px;font:12px 'Liberation Sans', sans-serif;line-height:16px;color:#22dd22;left:719.50px;transform:scaleX(0.875);transform-origin:0 50%;-webkit-text-stroke:0.3px #22dd22;">118.13</span><span class="t" style="top:391.60px;font:12px 'Liberation Sans', sans-serif;line-height:16px;color:#22dd22;left:839.50px;transform:scaleX(0.875);transform-origin:0 50%;-webkit-text-stroke:0.3px #22dd22;">592</span><span class="t" style="top:391.60px;font:12px 'Liberation Sans', sans-serif;line-height:16px;color:#22dd22;left:959.50px;transform:scaleX(0.875);transform-origin:0 50%;-webkit-text-stroke:0.3px #22dd22;">118.14</span><span class="t" style="top:391.60px;font:12px 'Liberation Sans', sans-serif;line-height:16px;color:#22dd22;left:1079.50px;transform:scaleX(0.875);transform-origin:0 50%;-webkit-text-stroke:0.3px #22dd22;">21</span><span class="t" style="top:410.60px;font:12px 'Liberation Sans', sans-serif;line-height:16px;color:#22dd22;left:-0.50px;transform:scaleX(0.875);transform-origin:0 50%;-webkit-text-stroke:0.3px #22dd22;">11-01</span><span class="t" style="top:410.60px;font:12px 'Liberation Sans', sans-serif;line-height:16px;color:#22dd22;left:119.50px;transform:scaleX(0.875);transform-origin:0 50%;-webkit-text-stroke:0.3px #22dd22;">03:31:02.805001</span><span class="t" style="top:410.60px;font:12px 'Liberation Sans', sans-serif;line-height:16px;color:#22dd22;left:239.50px;transform:scaleX(0.875);transform-origin:0 50%;-webkit-text-stroke:0.3px #22dd22;">118.14</span><span class="t" style="top:410.60px;font:12px 'Liberation Sans', sans-serif;line-height:16px;color:#22dd22;left:359.50px;transform:scaleX(0.875);transform-origin:0 50%;-webkit-text-stroke:0.3px #22dd22;">5</span><span class="t" style="top:410.60px;font:12px 'Liberation Sans', sans-serif;line-height:16px;color:#22dd22;left:479.50px;transform:scaleX(0.875);transform-origin:0 50%;-webkit-text-stroke:0.3px #22dd22;">1</span><span class="t" style="top:410.60px;font:12px 'Liberation Sans', sans-serif;line-height:16px;color:#22dd22;left:599.50px;transform:scaleX(0.94);transform-origin:0 50%;-webkit-text-stroke:0.3px #22dd22;">Ask Trade</span><span class="t" style="top:410.60px;font:12px 'Liberation Sans', sans-serif;line-height:16px;color:#22dd22;left:719.50px;transform:scaleX(0.875);transform-origin:0 50%;-webkit-text-stroke:0.3px #22dd22;">118.13</span><span class="t" style="top:410.60px;font:12px 'Liberation Sans', sans-serif;line-height:16px;color:#22dd22;left:839.50px;transform:scaleX(0.875);transform-origin:0 50%;-webkit-text-stroke:0.3px #22dd22;">592</span><span class="t" style="top:410.60px;font:12px 'Liberation Sans', sans-serif;line-height:16px;color:#22dd22;left:959.50px;transform:scaleX(0.875);transform-origin:0 50%;-webkit-text-stroke:0.3px #22dd22;">118.14</span><span class="t" style="top:410.60px;font:12px 'Liberation Sans', sans-serif;line-height:16px;color:#22dd22;left:1079.50px;transform:scaleX(0.875);transform-origin:0 50%;-webkit-text-stroke:0.3px #22dd22;">21</span><span class="t" style="top:429.60px;font:12px 'Liberation Sans', sans-serif;line-height:16px;color:#22dd22;left:-0.50px;transform:scaleX(0.875);transform-origin:0 50%;-webkit-text-stroke:0.3px #22dd22;">11-01</span><span class="t" style="top:429.60px;font:12px 'Liberation Sans', sans-serif;line-height:16px;color:#22dd22;left:119.50px;transform:scaleX(0.875);transform-origin:0 50%;-webkit-text-stroke:0.3px #22dd22;">03:31:02.805000</span><span class="t" style="top:429.60px;font:12px 'Liberation Sans', sans-serif;line-height:16px;color:#22dd22;left:239.50px;transform:scaleX(0.875);transform-origin:0 50%;-webkit-text-stroke:0.3px #22dd22;">118.14</span><span class="t" style="top:429.60px;font:12px 'Liberation Sans', sans-serif;line-height:16px;color:#22dd22;left:359.50px;transform:scaleX(0.875);transform-origin:0 50%;-webkit-text-stroke:0.3px #22dd22;">2</span><span class="t" style="top:429.60px;font:12px 'Liberation Sans', sans-serif;line-height:16px;color:#22dd22;left:479.50px;transform:scaleX(0.875);transform-origin:0 50%;-webkit-text-stroke:0.3px #22dd22;">1</span><span class="t" style="top:429.60px;font:12px 'Liberation Sans', sans-serif;line-height:16px;color:#22dd22;left:599.50px;transform:scaleX(0.94);transform-origin:0 50%;-webkit-text-stroke:0.3px #22dd22;">Ask Trade</span><span class="t" style="top:429.60px;font:12px 'Liberation Sans', sans-serif;line-height:16px;color:#22dd22;left:719.50px;transform:scaleX(0.875);transform-origin:0 50%;-webkit-text-stroke:0.3px #22dd22;">118.13</span><span class="t" style="top:429.60px;font:12px 'Liberation Sans', sans-serif;line-height:16px;color:#22dd22;left:839.50px;transform:scaleX(0.875);transform-origin:0 50%;-webkit-text-stroke:0.3px #22dd22;">592</span><span class="t" style="top:429.60px;font:12px 'Liberation Sans', sans-serif;line-height:16px;color:#22dd22;left:959.50px;transform:scaleX(0.875);transform-origin:0 50%;-webkit-text-stroke:0.3px #22dd22;">118.14</span><span class="t" style="top:429.60px;font:12px 'Liberation Sans', sans-serif;line-height:16px;color:#22dd22;left:1079.50px;transform:scaleX(0.875);transform-origin:0 50%;-webkit-text-stroke:0.3px #22dd22;">21</span><span class="t" style="top:448.60px;font:12px 'Liberation Sans', sans-serif;line-height:16px;color:#e8181c;left:-0.50px;transform:scaleX(0.875);transform-origin:0 50%;-webkit-text-stroke:0.3px #e8181c;">11-01</span><span class="t" style="top:448.60px;font:12px 'Liberation Sans', sans-serif;line-height:16px;color:#e8181c;left:119.50px;transform:scaleX(0.875);transform-origin:0 50%;-webkit-text-stroke:0.3px #e8181c;">03:31:02.804007</span><span class="t" style="top:448.60px;font:12px 'Liberation Sans', sans-serif;line-height:16px;color:#e8181c;left:239.50px;transform:scaleX(0.875);transform-origin:0 50%;-webkit-text-stroke:0.3px #e8181c;">118.14</span><span class="t" style="top:448.60px;font:12px 'Liberation Sans', sans-serif;line-height:16px;color:#e8181c;left:359.50px;transform:scaleX(0.875);transform-origin:0 50%;-webkit-text-stroke:0.3px #e8181c;">6</span><span class="t" style="top:448.60px;font:12px 'Liberation Sans', sans-serif;line-height:16px;color:#e8181c;left:479.50px;transform:scaleX(0.875);transform-origin:0 50%;-webkit-text-stroke:0.3px #e8181c;">1</span><span class="t" style="top:448.60px;font:12px 'Liberation Sans', sans-serif;line-height:16px;color:#e8181c;left:599.50px;transform:scaleX(0.94);transform-origin:0 50%;-webkit-text-stroke:0.3px #e8181c;">Bid Trade</span><span class="t" style="top:448.60px;font:12px 'Liberation Sans', sans-serif;line-height:16px;color:#e8181c;left:719.50px;transform:scaleX(0.875);transform-origin:0 50%;-webkit-text-stroke:0.3px #e8181c;">118.14</span><span class="t" style="top:448.60px;font:12px 'Liberation Sans', sans-serif;line-height:16px;color:#e8181c;left:839.50px;transform:scaleX(0.875);transform-origin:0 50%;-webkit-text-stroke:0.3px #e8181c;">592</span><span class="t" style="top:448.60px;font:12px 'Liberation Sans', sans-serif;line-height:16px;color:#e8181c;left:959.50px;transform:scaleX(0.875);transform-origin:0 50%;-webkit-text-stroke:0.3px #e8181c;">118.15</span><span class="t" style="top:448.60px;font:12px 'Liberation Sans', sans-serif;line-height:16px;color:#e8181c;left:1079.50px;transform:scaleX(0.875);transform-origin:0 50%;-webkit-text-stroke:0.3px #e8181c;">21</span><span class="t" style="top:467.60px;font:12px 'Liberation Sans', sans-serif;line-height:16px;color:#e8181c;left:-0.50px;transform:scaleX(0.875);transform-origin:0 50%;-webkit-text-stroke:0.3px #e8181c;">11-01</span><span class="t" style="top:467.60px;font:12px 'Liberation Sans', sans-serif;line-height:16px;color:#e8181c;left:119.50px;transform:scaleX(0.875);transform-origin:0 50%;-webkit-text-stroke:0.3px #e8181c;">03:31:02.804006</span><span class="t" style="top:467.60px;font:12px 'Liberation Sans', sans-serif;line-height:16px;color:#e8181c;left:239.50px;transform:scaleX(0.875);transform-origin:0 50%;-webkit-text-stroke:0.3px #e8181c;">118.14</span><span class="t" style="top:467.60px;font:12px 'Liberation Sans', sans-serif;line-height:16px;color:#e8181c;left:359.50px;transform:scaleX(0.875);transform-origin:0 50%;-webkit-text-stroke:0.3px #e8181c;">1</span><span class="t" style="top:467.60px;font:12px 'Liberation Sans', sans-serif;line-height:16px;color:#e8181c;left:479.50px;transform:scaleX(0.875);transform-origin:0 50%;-webkit-text-stroke:0.3px #e8181c;">1</span><span class="t" style="top:467.60px;font:12px 'Liberation Sans', sans-serif;line-height:16px;color:#e8181c;left:599.50px;transform:scaleX(0.94);transform-origin:0 50%;-webkit-text-stroke:0.3px #e8181c;">Bid Trade</span><span class="t" style="top:467.60px;font:12px 'Liberation Sans', sans-serif;line-height:16px;color:#e8181c;left:719.50px;transform:scaleX(0.875);transform-origin:0 50%;-webkit-text-stroke:0.3px #e8181c;">118.14</span><span class="t" style="top:467.60px;font:12px 'Liberation Sans', sans-serif;line-height:16px;color:#e8181c;left:839.50px;transform:scaleX(0.875);transform-origin:0 50%;-webkit-text-stroke:0.3px #e8181c;">592</span><span class="t" style="top:467.60px;font:12px 'Liberation Sans', sans-serif;line-height:16px;color:#e8181c;left:959.50px;transform:scaleX(0.875);transform-origin:0 50%;-webkit-text-stroke:0.3px #e8181c;">118.15</span><span class="t" style="top:467.60px;font:12px 'Liberation Sans', sans-serif;line-height:16px;color:#e8181c;left:1079.50px;transform:scaleX(0.875);transform-origin:0 50%;-webkit-text-stroke:0.3px #e8181c;">21</span><span class="t" style="top:486.60px;font:12px 'Liberation Sans', sans-serif;line-height:16px;color:#e8181c;left:-0.50px;transform:scaleX(0.875);transform-origin:0 50%;-webkit-text-stroke:0.3px #e8181c;">11-01</span><span class="t" style="top:486.60px;font:12px 'Liberation Sans', sans-serif;line-height:16px;color:#e8181c;left:119.50px;transform:scaleX(0.875);transform-origin:0 50%;-webkit-text-stroke:0.3px #e8181c;">03:31:02.804005</span><span class="t" style="top:486.60px;font:12px 'Liberation Sans', sans-serif;line-height:16px;color:#e8181c;left:239.50px;transform:scaleX(0.875);transform-origin:0 50%;-webkit-text-stroke:0.3px #e8181c;">118.14</span><span class="t" style="top:486.60px;font:12px 'Liberation Sans', sans-serif;line-height:16px;color:#e8181c;left:359.50px;transform:scaleX(0.875);transform-origin:0 50%;-webkit-text-stroke:0.3px #e8181c;">10</span><span class="t" style="top:486.60px;font:12px 'Liberation Sans', sans-serif;line-height:16px;color:#e8181c;left:479.50px;transform:scaleX(0.875);transform-origin:0 50%;-webkit-text-stroke:0.3px #e8181c;">1</span><span class="t" style="top:486.60px;font:12px 'Liberation Sans', sans-serif;line-height:16px;color:#e8181c;left:599.50px;transform:scaleX(0.94);transform-origin:0 50%;-webkit-text-stroke:0.3px #e8181c;">Bid Trade</span><span class="t" style="top:486.60px;font:12px 'Liberation Sans', sans-serif;line-height:16px;color:#e8181c;left:719.50px;transform:scaleX(0.875);transform-origin:0 50%;-webkit-text-stroke:0.3px #e8181c;">118.14</span><span class="t" style="top:486.60px;font:12px 'Liberation Sans', sans-serif;line-height:16px;color:#e8181c;left:839.50px;transform:scaleX(0.875);transform-origin:0 50%;-webkit-text-stroke:0.3px #e8181c;">592</span><span class="t" style="top:486.60px;font:12px 'Liberation Sans', sans-serif;line-height:16px;color:#e8181c;left:959.50px;transform:scaleX(0.875);transform-origin:0 50%;-webkit-text-stroke:0.3px #e8181c;">118.15</span><span class="t" style="top:486.60px;font:12px 'Liberation Sans', sans-serif;line-height:16px;color:#e8181c;left:1079.50px;transform:scaleX(0.875);transform-origin:0 50%;-webkit-text-stroke:0.3px #e8181c;">21</span><span class="t" style="top:505.60px;font:12px 'Liberation Sans', sans-serif;line-height:16px;color:#e8181c;left:-0.50px;transform:scaleX(0.875);transform-origin:0 50%;-webkit-text-stroke:0.3px #e8181c;">11-01</span><span class="t" style="top:505.60px;font:12px 'Liberation Sans', sans-serif;line-height:16px;color:#e8181c;left:119.50px;transform:scaleX(0.875);transform-origin:0 50%;-webkit-text-stroke:0.3px #e8181c;">03:31:02.804004</span><span class="t" style="top:505.60px;font:12px 'Liberation Sans', sans-serif;line-height:16px;color:#e8181c;left:239.50px;transform:scaleX(0.875);transform-origin:0 50%;-webkit-text-stroke:0.3px #e8181c;">118.14</span><span class="t" style="top:505.60px;font:12px 'Liberation Sans', sans-serif;line-height:16px;color:#e8181c;left:359.50px;transform:scaleX(0.875);transform-origin:0 50%;-webkit-text-stroke:0.3px #e8181c;">9</span><span class="t" style="top:505.60px;font:12px 'Liberation Sans', sans-serif;line-height:16px;color:#e8181c;left:479.50px;transform:scaleX(0.875);transform-origin:0 50%;-webkit-text-stroke:0.3px #e8181c;">1</span><span class="t" style="top:505.60px;font:12px 'Liberation Sans', sans-serif;line-height:16px;color:#e8181c;left:599.50px;transform:scaleX(0.94);transform-origin:0 50%;-webkit-text-stroke:0.3px #e8181c;">Bid Trade</span><span class="t" style="top:505.60px;font:12px 'Liberation Sans', sans-serif;line-height:16px;color:#e8181c;left:719.50px;transform:scaleX(0.875);transform-origin:0 50%;-webkit-text-stroke:0.3px #e8181c;">118.14</span><span class="t" style="top:505.60px;font:12px 'Liberation Sans', sans-serif;line-height:16px;color:#e8181c;left:839.50px;transform:scaleX(0.875);transform-origin:0 50%;-webkit-text-stroke:0.3px #e8181c;">592</span><span class="t" style="top:505.60px;font:12px 'Liberation Sans', sans-serif;line-height:16px;color:#e8181c;left:959.50px;transform:scaleX(0.875);transform-origin:0 50%;-webkit-text-stroke:0.3px #e8181c;">118.15</span><span class="t" style="top:505.60px;font:12px 'Liberation Sans', sans-serif;line-height:16px;color:#e8181c;left:1079.50px;transform:scaleX(0.875);transform-origin:0 50%;-webkit-text-stroke:0.3px #e8181c;">21</span><span class="t" style="top:524.60px;font:12px 'Liberation Sans', sans-serif;line-height:16px;color:#e8181c;left:-0.50px;transform:scaleX(0.875);transform-origin:0 50%;-webkit-text-stroke:0.3px #e8181c;">11-01</span><span class="t" style="top:524.60px;font:12px 'Liberation Sans', sans-serif;line-height:16px;color:#e8181c;left:119.50px;transform:scaleX(0.875);transform-origin:0 50%;-webkit-text-stroke:0.3px #e8181c;">03:31:02.804003</span><span class="t" style="top:524.60px;font:12px 'Liberation Sans', sans-serif;line-height:16px;color:#e8181c;left:239.50px;transform:scaleX(0.875);transform-origin:0 50%;-webkit-text-stroke:0.3px #e8181c;">118.14</span><span class="t" style="top:524.60px;font:12px 'Liberation Sans', sans-serif;line-height:16px;color:#e8181c;left:359.50px;transform:scaleX(0.875);transform-origin:0 50%;-webkit-text-stroke:0.3px #e8181c;">2</span><span class="t" style="top:524.60px;font:12px 'Liberation Sans', sans-serif;line-height:16px;color:#e8181c;left:479.50px;transform:scaleX(0.875);transform-origin:0 50%;-webkit-text-stroke:0.3px #e8181c;">1</span><span class="t" style="top:524.60px;font:12px 'Liberation Sans', sans-serif;line-height:16px;color:#e8181c;left:599.50px;transform:scaleX(0.94);transform-origin:0 50%;-webkit-text-stroke:0.3px #e8181c;">Bid Trade</span><span class="t" style="top:524.60px;font:12px 'Liberation Sans', sans-serif;line-height:16px;color:#e8181c;left:719.50px;transform:scaleX(0.875);transform-origin:0 50%;-webkit-text-stroke:0.3px #e8181c;">118.14</span><span class="t" style="top:524.60px;font:12px 'Liberation Sans', sans-serif;line-height:16px;color:#e8181c;left:839.50px;transform:scaleX(0.875);transform-origin:0 50%;-webkit-text-stroke:0.3px #e8181c;">592</span><span class="t" style="top:524.60px;font:12px 'Liberation Sans', sans-serif;line-height:16px;color:#e8181c;left:959.50px;transform:scaleX(0.875);transform-origin:0 50%;-webkit-text-stroke:0.3px #e8181c;">118.15</span><span class="t" style="top:524.60px;font:12px 'Liberation Sans', sans-serif;line-height:16px;color:#e8181c;left:1079.50px;transform:scaleX(0.875);transform-origin:0 50%;-webkit-text-stroke:0.3px #e8181c;">21</span><span class="t" style="top:543.60px;font:12px 'Liberation Sans', sans-serif;line-height:16px;color:#e8181c;left:-0.50px;transform:scaleX(0.875);transform-origin:0 50%;-webkit-text-stroke:0.3px #e8181c;">11-01</span><span class="t" style="top:543.60px;font:12px 'Liberation Sans', sans-serif;line-height:16px;color:#e8181c;left:119.50px;transform:scaleX(0.875);transform-origin:0 50%;-webkit-text-stroke:0.3px #e8181c;">03:31:02.804002</span><span class="t" style="top:543.60px;font:12px 'Liberation Sans', sans-serif;line-height:16px;color:#e8181c;left:239.50px;transform:scaleX(0.875);transform-origin:0 50%;-webkit-text-stroke:0.3px #e8181c;">118.14</span><span class="t" style="top:543.60px;font:12px 'Liberation Sans', sans-serif;line-height:16px;color:#e8181c;left:359.50px;transform:scaleX(0.875);transform-origin:0 50%;-webkit-text-stroke:0.3px #e8181c;">10</span><span class="t" style="top:543.60px;font:12px 'Liberation Sans', sans-serif;line-height:16px;color:#e8181c;left:479.50px;transform:scaleX(0.875);transform-origin:0 50%;-webkit-text-stroke:0.3px #e8181c;">1</span><span class="t" style="top:543.60px;font:12px 'Liberation Sans', sans-serif;line-height:16px;color:#e8181c;left:599.50px;transform:scaleX(0.94);transform-origin:0 50%;-webkit-text-stroke:0.3px #e8181c;">Bid Trade</span><span class="t" style="top:543.60px;font:12px 'Liberation Sans', sans-serif;line-height:16px;color:#e8181c;left:719.50px;transform:scaleX(0.875);transform-origin:0 50%;-webkit-text-stroke:0.3px #e8181c;">118.14</span><span class="t" style="top:543.60px;font:12px 'Liberation Sans', sans-serif;line-height:16px;color:#e8181c;left:839.50px;transform:scaleX(0.875);transform-origin:0 50%;-webkit-text-stroke:0.3px #e8181c;">592</span><span class="t" style="top:543.60px;font:12px 'Liberation Sans', sans-serif;line-height:16px;color:#e8181c;left:959.50px;transform:scaleX(0.875);transform-origin:0 50%;-webkit-text-stroke:0.3px #e8181c;">118.15</span><span class="t" style="top:543.60px;font:12px 'Liberation Sans', sans-serif;line-height:16px;color:#e8181c;left:1079.50px;transform:scaleX(0.875);transform-origin:0 50%;-webkit-text-stroke:0.3px #e8181c;">21</span><span class="t" style="top:562.60px;font:12px 'Liberation Sans', sans-serif;line-height:16px;color:#e8181c;left:-0.50px;transform:scaleX(0.875);transform-origin:0 50%;-webkit-text-stroke:0.3px #e8181c;">11-01</span><span class="t" style="top:562.60px;font:12px 'Liberation Sans', sans-serif;line-height:16px;color:#e8181c;left:119.50px;transform:scaleX(0.875);transform-origin:0 50%;-webkit-text-stroke:0.3px #e8181c;">03:31:02.804001</span><span class="t" style="top:562.60px;font:12px 'Liberation Sans', sans-serif;line-height:16px;color:#e8181c;left:239.50px;transform:scaleX(0.875);transform-origin:0 50%;-webkit-text-stroke:0.3px #e8181c;">118.14</span><span class="t" style="top:562.60px;font:12px 'Liberation Sans', sans-serif;line-height:16px;color:#e8181c;left:359.50px;transform:scaleX(0.875);transform-origin:0 50%;-webkit-text-stroke:0.3px #e8181c;">2</span><span class="t" style="top:562.60px;font:12px 'Liberation Sans', sans-serif;line-height:16px;color:#e8181c;left:479.50px;transform:scaleX(0.875);transform-origin:0 50%;-webkit-text-stroke:0.3px #e8181c;">1</span><span class="t" style="top:562.60px;font:12px 'Liberation Sans', sans-serif;line-height:16px;color:#e8181c;left:599.50px;transform:scaleX(0.94);transform-origin:0 50%;-webkit-text-stroke:0.3px #e8181c;">Bid Trade</span><span class="t" style="top:562.60px;font:12px 'Liberation Sans', sans-serif;line-height:16px;color:#e8181c;left:719.50px;transform:scaleX(0.875);transform-origin:0 50%;-webkit-text-stroke:0.3px #e8181c;">118.14</span><span class="t" style="top:562.60px;font:12px 'Liberation Sans', sans-serif;line-height:16px;color:#e8181c;left:839.50px;transform:scaleX(0.875);transform-origin:0 50%;-webkit-text-stroke:0.3px #e8181c;">592</span><span class="t" style="top:562.60px;font:12px 'Liberation Sans', sans-serif;line-height:16px;color:#e8181c;left:959.50px;transform:scaleX(0.875);transform-origin:0 50%;-webkit-text-stroke:0.3px #e8181c;">118.15</span><span class="t" style="top:562.60px;font:12px 'Liberation Sans', sans-serif;line-height:16px;color:#e8181c;left:1079.50px;transform:scaleX(0.875);transform-origin:0 50%;-webkit-text-stroke:0.3px #e8181c;">21</span><span class="t" style="top:581.60px;font:12px 'Liberation Sans', sans-serif;line-height:16px;color:#e8181c;left:-0.50px;transform:scaleX(0.875);transform-origin:0 50%;-webkit-text-stroke:0.3px #e8181c;">11-01</span><span class="t" style="top:581.60px;font:12px 'Liberation Sans', sans-serif;line-height:16px;color:#e8181c;left:119.50px;transform:scaleX(0.875);transform-origin:0 50%;-webkit-text-stroke:0.3px #e8181c;">03:31:02.804000</span><span class="t" style="top:581.60px;font:12px 'Liberation Sans', sans-serif;line-height:16px;color:#e8181c;left:239.50px;transform:scaleX(0.875);transform-origin:0 50%;-webkit-text-stroke:0.3px #e8181c;">118.14</span><span class="t" style="top:581.60px;font:12px 'Liberation Sans', sans-serif;line-height:16px;color:#e8181c;left:359.50px;transform:scaleX(0.875);transform-origin:0 50%;-webkit-text-stroke:0.3px #e8181c;">3</span><span class="t" style="top:581.60px;font:12px 'Liberation Sans', sans-serif;line-height:16px;color:#e8181c;left:479.50px;transform:scaleX(0.875);transform-origin:0 50%;-webkit-text-stroke:0.3px #e8181c;">1</span><span class="t" style="top:581.60px;font:12px 'Liberation Sans', sans-serif;line-height:16px;color:#e8181c;left:599.50px;transform:scaleX(0.94);transform-origin:0 50%;-webkit-text-stroke:0.3px #e8181c;">Bid Trade</span><span class="t" style="top:581.60px;font:12px 'Liberation Sans', sans-serif;line-height:16px;color:#e8181c;left:719.50px;transform:scaleX(0.875);transform-origin:0 50%;-webkit-text-stroke:0.3px #e8181c;">118.14</span><span class="t" style="top:581.60px;font:12px 'Liberation Sans', sans-serif;line-height:16px;color:#e8181c;left:839.50px;transform:scaleX(0.875);transform-origin:0 50%;-webkit-text-stroke:0.3px #e8181c;">592</span><span class="t" style="top:581.60px;font:12px 'Liberation Sans', sans-serif;line-height:16px;color:#e8181c;left:959.50px;transform:scaleX(0.875);transform-origin:0 50%;-webkit-text-stroke:0.3px #e8181c;">118.15</span><span class="t" style="top:581.60px;font:12px 'Liberation Sans', sans-serif;line-height:16px;color:#e8181c;left:1079.50px;transform:scaleX(0.875);transform-origin:0 50%;-webkit-text-stroke:0.3px #e8181c;">21</span><span class="t" style="top:600.60px;font:12px 'Liberation Sans', sans-serif;line-height:16px;color:#e8181c;left:-0.50px;transform:scaleX(0.875);transform-origin:0 50%;-webkit-text-stroke:0.3px #e8181c;">11-01</span><span class="t" style="top:600.60px;font:12px 'Liberation Sans', sans-serif;line-height:16px;color:#e8181c;left:119.50px;transform:scaleX(0.875);transform-origin:0 50%;-webkit-text-stroke:0.3px #e8181c;">03:31:02.803003</span><span class="t" style="top:600.60px;font:12px 'Liberation Sans', sans-serif;line-height:16px;color:#e8181c;left:239.50px;transform:scaleX(0.875);transform-origin:0 50%;-webkit-text-stroke:0.3px #e8181c;">118.14</span><span class="t" style="top:600.60px;font:12px 'Liberation Sans', sans-serif;line-height:16px;color:#e8181c;left:359.50px;transform:scaleX(0.875);transform-origin:0 50%;-webkit-text-stroke:0.3px #e8181c;">11</span><span class="t" style="top:600.60px;font:12px 'Liberation Sans', sans-serif;line-height:16px;color:#e8181c;left:479.50px;transform:scaleX(0.875);transform-origin:0 50%;-webkit-text-stroke:0.3px #e8181c;">1</span><span class="t" style="top:600.60px;font:12px 'Liberation Sans', sans-serif;line-height:16px;color:#e8181c;left:599.50px;transform:scaleX(0.94);transform-origin:0 50%;-webkit-text-stroke:0.3px #e8181c;">Bid Trade</span><span class="t" style="top:600.60px;font:12px 'Liberation Sans', sans-serif;line-height:16px;color:#e8181c;left:719.50px;transform:scaleX(0.875);transform-origin:0 50%;-webkit-text-stroke:0.3px #e8181c;">118.14</span><span class="t" style="top:600.60px;font:12px 'Liberation Sans', sans-serif;line-height:16px;color:#e8181c;left:839.50px;transform:scaleX(0.875);transform-origin:0 50%;-webkit-text-stroke:0.3px #e8181c;">592</span><span class="t" style="top:600.60px;font:12px 'Liberation Sans', sans-serif;line-height:16px;color:#e8181c;left:959.50px;transform:scaleX(0.875);transform-origin:0 50%;-webkit-text-stroke:0.3px #e8181c;">118.15</span><span class="t" style="top:600.60px;font:12px 'Liberation Sans', sans-serif;line-height:16px;color:#e8181c;left:1079.50px;transform:scaleX(0.875);transform-origin:0 50%;-webkit-text-stroke:0.3px #e8181c;">21</span><span class="t" style="top:619.60px;font:12px 'Liberation Sans', sans-serif;line-height:16px;color:#e8181c;left:-0.50px;transform:scaleX(0.875);transform-origin:0 50%;-webkit-text-stroke:0.3px #e8181c;">11-01</span><span class="t" style="top:619.60px;font:12px 'Liberation Sans', sans-serif;line-height:16px;color:#e8181c;left:119.50px;transform:scaleX(0.875);transform-origin:0 50%;-webkit-text-stroke:0.3px #e8181c;">03:31:02.803002</span><span class="t" style="top:619.60px;font:12px 'Liberation Sans', sans-serif;line-height:16px;color:#e8181c;left:239.50px;transform:scaleX(0.875);transform-origin:0 50%;-webkit-text-stroke:0.3px #e8181c;">118.14</span><span class="t" style="top:619.60px;font:12px 'Liberation Sans', sans-serif;line-height:16px;color:#e8181c;left:359.50px;transform:scaleX(0.875);transform-origin:0 50%;-webkit-text-stroke:0.3px #e8181c;">1</span><span class="t" style="top:619.60px;font:12px 'Liberation Sans', sans-serif;line-height:16px;color:#e8181c;left:479.50px;transform:scaleX(0.875);transform-origin:0 50%;-webkit-text-stroke:0.3px #e8181c;">1</span><span class="t" style="top:619.60px;font:12px 'Liberation Sans', sans-serif;line-height:16px;color:#e8181c;left:599.50px;transform:scaleX(0.94);transform-origin:0 50%;-webkit-text-stroke:0.3px #e8181c;">Bid Trade</span><span class="t" style="top:619.60px;font:12px 'Liberation Sans', sans-serif;line-height:16px;color:#e8181c;left:719.50px;transform:scaleX(0.875);transform-origin:0 50%;-webkit-text-stroke:0.3px #e8181c;">118.14</span><span class="t" style="top:619.60px;font:12px 'Liberation Sans', sans-serif;line-height:16px;color:#e8181c;left:839.50px;transform:scaleX(0.875);transform-origin:0 50%;-webkit-text-stroke:0.3px #e8181c;">592</span><span class="t" style="top:619.60px;font:12px 'Liberation Sans', sans-serif;line-height:16px;color:#e8181c;left:959.50px;transform:scaleX(0.875);transform-origin:0 50%;-webkit-text-stroke:0.3px #e8181c;">118.15</span><span class="t" style="top:619.60px;font:12px 'Liberation Sans', sans-serif;line-height:16px;color:#e8181c;left:1079.50px;transform:scaleX(0.875);transform-origin:0 50%;-webkit-text-stroke:0.3px #e8181c;">21</span><span class="t" style="top:638.60px;font:12px 'Liberation Sans', sans-serif;line-height:16px;color:#e8181c;left:-0.50px;transform:scaleX(0.875);transform-origin:0 50%;-webkit-text-stroke:0.3px #e8181c;">11-01</span><span class="t" style="top:638.60px;font:12px 'Liberation Sans', sans-serif;line-height:16px;color:#e8181c;left:119.50px;transform:scaleX(0.875);transform-origin:0 50%;-webkit-text-stroke:0.3px #e8181c;">03:31:02.803001</span><span class="t" style="top:638.60px;font:12px 'Liberation Sans', sans-serif;line-height:16px;color:#e8181c;left:239.50px;transform:scaleX(0.875);transform-origin:0 50%;-webkit-text-stroke:0.3px #e8181c;">118.14</span><span class="t" style="top:638.60px;font:12px 'Liberation Sans', sans-serif;line-height:16px;color:#e8181c;left:359.50px;transform:scaleX(0.875);transform-origin:0 50%;-webkit-text-stroke:0.3px #e8181c;">1</span><span class="t" style="top:638.60px;font:12px 'Liberation Sans', sans-serif;line-height:16px;color:#e8181c;left:479.50px;transform:scaleX(0.875);transform-origin:0 50%;-webkit-text-stroke:0.3px #e8181c;">1</span><span class="t" style="top:638.60px;font:12px 'Liberation Sans', sans-serif;line-height:16px;color:#e8181c;left:599.50px;transform:scaleX(0.94);transform-origin:0 50%;-webkit-text-stroke:0.3px #e8181c;">Bid Trade</span><span class="t" style="top:638.60px;font:12px 'Liberation Sans', sans-serif;line-height:16px;color:#e8181c;left:719.50px;transform:scaleX(0.875);transform-origin:0 50%;-webkit-text-stroke:0.3px #e8181c;">118.14</span><span class="t" style="top:638.60px;font:12px 'Liberation Sans', sans-serif;line-height:16px;color:#e8181c;left:839.50px;transform:scaleX(0.875);transform-origin:0 50%;-webkit-text-stroke:0.3px #e8181c;">592</span><span class="t" style="top:638.60px;font:12px 'Liberation Sans', sans-serif;line-height:16px;color:#e8181c;left:959.50px;transform:scaleX(0.875);transform-origin:0 50%;-webkit-text-stroke:0.3px #e8181c;">118.15</span><span class="t" style="top:638.60px;font:12px 'Liberation Sans', sans-serif;line-height:16px;color:#e8181c;left:1079.50px;transform:scaleX(0.875);transform-origin:0 50%;-webkit-text-stroke:0.3px #e8181c;">21</span><span class="t" style="top:657.60px;font:12px 'Liberation Sans', sans-serif;line-height:16px;color:#e8181c;left:-0.50px;transform:scaleX(0.875);transform-origin:0 50%;-webkit-text-stroke:0.3px #e8181c;">11-01</span><span class="t" style="top:657.60px;font:12px 'Liberation Sans', sans-serif;line-height:16px;color:#e8181c;left:119.50px;transform:scaleX(0.875);transform-origin:0 50%;-webkit-text-stroke:0.3px #e8181c;">03:31:02.803000</span><span class="t" style="top:657.60px;font:12px 'Liberation Sans', sans-serif;line-height:16px;color:#e8181c;left:239.50px;transform:scaleX(0.875);transform-origin:0 50%;-webkit-text-stroke:0.3px #e8181c;">118.14</span><span class="t" style="top:657.60px;font:12px 'Liberation Sans', sans-serif;line-height:16px;color:#e8181c;left:359.50px;transform:scaleX(0.875);transform-origin:0 50%;-webkit-text-stroke:0.3px #e8181c;">1</span><span class="t" style="top:657.60px;font:12px 'Liberation Sans', sans-serif;line-height:16px;color:#e8181c;left:479.50px;transform:scaleX(0.875);transform-origin:0 50%;-webkit-text-stroke:0.3px #e8181c;">1</span><span class="t" style="top:657.60px;font:12px 'Liberation Sans', sans-serif;line-height:16px;color:#e8181c;left:599.50px;transform:scaleX(0.94);transform-origin:0 50%;-webkit-text-stroke:0.3px #e8181c;">Bid Trade</span><span class="t" style="top:657.60px;font:12px 'Liberation Sans', sans-serif;line-height:16px;color:#e8181c;left:719.50px;transform:scaleX(0.875);transform-origin:0 50%;-webkit-text-stroke:0.3px #e8181c;">118.14</span><span class="t" style="top:657.60px;font:12px 'Liberation Sans', sans-serif;line-height:16px;color:#e8181c;left:839.50px;transform:scaleX(0.875);transform-origin:0 50%;-webkit-text-stroke:0.3px #e8181c;">592</span><span class="t" style="top:657.60px;font:12px 'Liberation Sans', sans-serif;line-height:16px;color:#e8181c;left:959.50px;transform:scaleX(0.875);transform-origin:0 50%;-webkit-text-stroke:0.3px #e8181c;">118.15</span><span class="t" style="top:657.60px;font:12px 'Liberation Sans', sans-serif;line-height:16px;color:#e8181c;left:1079.50px;transform:scaleX(0.875);transform-origin:0 50%;-webkit-text-stroke:0.3px #e8181c;">21</span><span class="t" style="top:676.60px;font:12px 'Liberation Sans', sans-serif;line-height:16px;color:#e8181c;left:-0.50px;transform:scaleX(0.875);transform-origin:0 50%;-webkit-text-stroke:0.3px #e8181c;">11-01</span><span class="t" style="top:676.60px;font:12px 'Liberation Sans', sans-serif;line-height:16px;color:#e8181c;left:119.50px;transform:scaleX(0.875);transform-origin:0 50%;-webkit-text-stroke:0.3px #e8181c;">03:31:02.802009</span><span class="t" style="top:676.60px;font:12px 'Liberation Sans', sans-serif;line-height:16px;color:#e8181c;left:239.50px;transform:scaleX(0.875);transform-origin:0 50%;-webkit-text-stroke:0.3px #e8181c;">118.14</span><span class="t" style="top:676.60px;font:12px 'Liberation Sans', sans-serif;line-height:16px;color:#e8181c;left:359.50px;transform:scaleX(0.875);transform-origin:0 50%;-webkit-text-stroke:0.3px #e8181c;">4</span><span class="t" style="top:676.60px;font:12px 'Liberation Sans', sans-serif;line-height:16px;color:#e8181c;left:479.50px;transform:scaleX(0.875);transform-origin:0 50%;-webkit-text-stroke:0.3px #e8181c;">1</span><span class="t" style="top:676.60px;font:12px 'Liberation Sans', sans-serif;line-height:16px;color:#e8181c;left:599.50px;transform:scaleX(0.94);transform-origin:0 50%;-webkit-text-stroke:0.3px #e8181c;">Bid Trade</span><span class="t" style="top:676.60px;font:12px 'Liberation Sans', sans-serif;line-height:16px;color:#e8181c;left:719.50px;transform:scaleX(0.875);transform-origin:0 50%;-webkit-text-stroke:0.3px #e8181c;">118.14</span><span class="t" style="top:676.60px;font:12px 'Liberation Sans', sans-serif;line-height:16px;color:#e8181c;left:839.50px;transform:scaleX(0.875);transform-origin:0 50%;-webkit-text-stroke:0.3px #e8181c;">592</span><span class="t" style="top:676.60px;font:12px 'Liberation Sans', sans-serif;line-height:16px;color:#e8181c;left:959.50px;transform:scaleX(0.875);transform-origin:0 50%;-webkit-text-stroke:0.3px #e8181c;">118.15</span><span class="t" style="top:676.60px;font:12px 'Liberation Sans', sans-serif;line-height:16px;color:#e8181c;left:1079.50px;transform:scaleX(0.875);transform-origin:0 50%;-webkit-text-stroke:0.3px #e8181c;">21</span><span class="t" style="top:695.60px;font:12px 'Liberation Sans', sans-serif;line-height:16px;color:#e8181c;left:-0.50px;transform:scaleX(0.875);transform-origin:0 50%;-webkit-text-stroke:0.3px #e8181c;">11-01</span><span class="t" style="top:695.60px;font:12px 'Liberation Sans', sans-serif;line-height:16px;color:#e8181c;left:119.50px;transform:scaleX(0.875);transform-origin:0 50%;-webkit-text-stroke:0.3px #e8181c;">03:31:02.802008</span><span class="t" style="top:695.60px;font:12px 'Liberation Sans', sans-serif;line-height:16px;color:#e8181c;left:239.50px;transform:scaleX(0.875);transform-origin:0 50%;-webkit-text-stroke:0.3px #e8181c;">118.14</span><span class="t" style="top:695.60px;font:12px 'Liberation Sans', sans-serif;line-height:16px;color:#e8181c;left:359.50px;transform:scaleX(0.875);transform-origin:0 50%;-webkit-text-stroke:0.3px #e8181c;">1</span><span class="t" style="top:695.60px;font:12px 'Liberation Sans', sans-serif;line-height:16px;color:#e8181c;left:479.50px;transform:scaleX(0.875);transform-origin:0 50%;-webkit-text-stroke:0.3px #e8181c;">1</span><span class="t" style="top:695.60px;font:12px 'Liberation Sans', sans-serif;line-height:16px;color:#e8181c;left:599.50px;transform:scaleX(0.94);transform-origin:0 50%;-webkit-text-stroke:0.3px #e8181c;">Bid Trade</span><span class="t" style="top:695.60px;font:12px 'Liberation Sans', sans-serif;line-height:16px;color:#e8181c;left:719.50px;transform:scaleX(0.875);transform-origin:0 50%;-webkit-text-stroke:0.3px #e8181c;">118.14</span><span class="t" style="top:695.60px;font:12px 'Liberation Sans', sans-serif;line-height:16px;color:#e8181c;left:839.50px;transform:scaleX(0.875);transform-origin:0 50%;-webkit-text-stroke:0.3px #e8181c;">592</span><span class="t" style="top:695.60px;font:12px 'Liberation Sans', sans-serif;line-height:16px;color:#e8181c;left:959.50px;transform:scaleX(0.875);transform-origin:0 50%;-webkit-text-stroke:0.3px #e8181c;">118.15</span><span class="t" style="top:695.60px;font:12px 'Liberation Sans', sans-serif;line-height:16px;color:#e8181c;left:1079.50px;transform:scaleX(0.875);transform-origin:0 50%;-webkit-text-stroke:0.3px #e8181c;">21</span><span class="t" style="top:714.60px;font:12px 'Liberation Sans', sans-serif;line-height:16px;color:#e8181c;left:-0.50px;transform:scaleX(0.875);transform-origin:0 50%;-webkit-text-stroke:0.3px #e8181c;">11-01</span><span class="t" style="top:714.60px;font:12px 'Liberation Sans', sans-serif;line-height:16px;color:#e8181c;left:119.50px;transform:scaleX(0.875);transform-origin:0 50%;-webkit-text-stroke:0.3px #e8181c;">03:31:02.802007</span><span class="t" style="top:714.60px;font:12px 'Liberation Sans', sans-serif;line-height:16px;color:#e8181c;left:239.50px;transform:scaleX(0.875);transform-origin:0 50%;-webkit-text-stroke:0.3px #e8181c;">118.14</span><span class="t" style="top:714.60px;font:12px 'Liberation Sans', sans-serif;line-height:16px;color:#e8181c;left:359.50px;transform:scaleX(0.875);transform-origin:0 50%;-webkit-text-stroke:0.3px #e8181c;">1</span><span class="t" style="top:714.60px;font:12px 'Liberation Sans', sans-serif;line-height:16px;color:#e8181c;left:479.50px;transform:scaleX(0.875);transform-origin:0 50%;-webkit-text-stroke:0.3px #e8181c;">1</span><span class="t" style="top:714.60px;font:12px 'Liberation Sans', sans-serif;line-height:16px;color:#e8181c;left:599.50px;transform:scaleX(0.94);transform-origin:0 50%;-webkit-text-stroke:0.3px #e8181c;">Bid Trade</span><span class="t" style="top:714.60px;font:12px 'Liberation Sans', sans-serif;line-height:16px;color:#e8181c;left:719.50px;transform:scaleX(0.875);transform-origin:0 50%;-webkit-text-stroke:0.3px #e8181c;">118.14</span><span class="t" style="top:714.60px;font:12px 'Liberation Sans', sans-serif;line-height:16px;color:#e8181c;left:839.50px;transform:scaleX(0.875);transform-origin:0 50%;-webkit-text-stroke:0.3px #e8181c;">592</span><span class="t" style="top:714.60px;font:12px 'Liberation Sans', sans-serif;line-height:16px;color:#e8181c;left:959.50px;transform:scaleX(0.875);transform-origin:0 50%;-webkit-text-stroke:0.3px #e8181c;">118.15</span><span class="t" style="top:714.60px;font:12px 'Liberation Sans', sans-serif;line-height:16px;color:#e8181c;left:1079.50px;transform:scaleX(0.875);transform-origin:0 50%;-webkit-text-stroke:0.3px #e8181c;">21</span><span class="t" style="top:733.60px;font:12px 'Liberation Sans', sans-serif;line-height:16px;color:#e8181c;left:-0.50px;transform:scaleX(0.875);transform-origin:0 50%;-webkit-text-stroke:0.3px #e8181c;">11-01</span><span class="t" style="top:733.60px;font:12px 'Liberation Sans', sans-serif;line-height:16px;color:#e8181c;left:119.50px;transform:scaleX(0.875);transform-origin:0 50%;-webkit-text-stroke:0.3px #e8181c;">03:31:02.802006</span><span class="t" style="top:733.60px;font:12px 'Liberation Sans', sans-serif;line-height:16px;color:#e8181c;left:239.50px;transform:scaleX(0.875);transform-origin:0 50%;-webkit-text-stroke:0.3px #e8181c;">118.14</span><span class="t" style="top:733.60px;font:12px 'Liberation Sans', sans-serif;line-height:16px;color:#e8181c;left:359.50px;transform:scaleX(0.875);transform-origin:0 50%;-webkit-text-stroke:0.3px #e8181c;">6</span><span class="t" style="top:733.60px;font:12px 'Liberation Sans', sans-serif;line-height:16px;color:#e8181c;left:479.50px;transform:scaleX(0.875);transform-origin:0 50%;-webkit-text-stroke:0.3px #e8181c;">1</span><span class="t" style="top:733.60px;font:12px 'Liberation Sans', sans-serif;line-height:16px;color:#e8181c;left:599.50px;transform:scaleX(0.94);transform-origin:0 50%;-webkit-text-stroke:0.3px #e8181c;">Bid Trade</span><span class="t" style="top:733.60px;font:12px 'Liberation Sans', sans-serif;line-height:16px;color:#e8181c;left:719.50px;transform:scaleX(0.875);transform-origin:0 50%;-webkit-text-stroke:0.3px #e8181c;">118.14</span><span class="t" style="top:733.60px;font:12px 'Liberation Sans', sans-serif;line-height:16px;color:#e8181c;left:839.50px;transform:scaleX(0.875);transform-origin:0 50%;-webkit-text-stroke:0.3px #e8181c;">592</span><span class="t" style="top:733.60px;font:12px 'Liberation Sans', sans-serif;line-height:16px;color:#e8181c;left:959.50px;transform:scaleX(0.875);transform-origin:0 50%;-webkit-text-stroke:0.3px #e8181c;">118.15</span><span class="t" style="top:733.60px;font:12px 'Liberation Sans', sans-serif;line-height:16px;color:#e8181c;left:1079.50px;transform:scaleX(0.875);transform-origin:0 50%;-webkit-text-stroke:0.3px #e8181c;">21</span><span class="t" style="top:752.60px;font:12px 'Liberation Sans', sans-serif;line-height:16px;color:#e8181c;left:-0.50px;transform:scaleX(0.875);transform-origin:0 50%;-webkit-text-stroke:0.3px #e8181c;">11-01</span><span class="t" style="top:752.60px;font:12px 'Liberation Sans', sans-serif;line-height:16px;color:#e8181c;left:119.50px;transform:scaleX(0.875);transform-origin:0 50%;-webkit-text-stroke:0.3px #e8181c;">03:31:02.802005</span><span class="t" style="top:752.60px;font:12px 'Liberation Sans', sans-serif;line-height:16px;color:#e8181c;left:239.50px;transform:scaleX(0.875);transform-origin:0 50%;-webkit-text-stroke:0.3px #e8181c;">118.14</span><span class="t" style="top:752.60px;font:12px 'Liberation Sans', sans-serif;line-height:16px;color:#e8181c;left:359.50px;transform:scaleX(0.875);transform-origin:0 50%;-webkit-text-stroke:0.3px #e8181c;">1</span><span class="t" style="top:752.60px;font:12px 'Liberation Sans', sans-serif;line-height:16px;color:#e8181c;left:479.50px;transform:scaleX(0.875);transform-origin:0 50%;-webkit-text-stroke:0.3px #e8181c;">1</span><span class="t" style="top:752.60px;font:12px 'Liberation Sans', sans-serif;line-height:16px;color:#e8181c;left:599.50px;transform:scaleX(0.94);transform-origin:0 50%;-webkit-text-stroke:0.3px #e8181c;">Bid Trade</span><span class="t" style="top:752.60px;font:12px 'Liberation Sans', sans-serif;line-height:16px;color:#e8181c;left:719.50px;transform:scaleX(0.875);transform-origin:0 50%;-webkit-text-stroke:0.3px #e8181c;">118.14</span><span class="t" style="top:752.60px;font:12px 'Liberation Sans', sans-serif;line-height:16px;color:#e8181c;left:839.50px;transform:scaleX(0.875);transform-origin:0 50%;-webkit-text-stroke:0.3px #e8181c;">592</span><span class="t" style="top:752.60px;font:12px 'Liberation Sans', sans-serif;line-height:16px;color:#e8181c;left:959.50px;transform:scaleX(0.875);transform-origin:0 50%;-webkit-text-stroke:0.3px #e8181c;">118.15</span><span class="t" style="top:752.60px;font:12px 'Liberation Sans', sans-serif;line-height:16px;color:#e8181c;left:1079.50px;transform:scaleX(0.875);transform-origin:0 50%;-webkit-text-stroke:0.3px #e8181c;">21</span><div class="r" style="left:1507.50px;top:116.00px;width:2.00px;height:17.00px;background:#858585;border-radius:1px;"></div></div>
<!-- part_hidden --><div class="r" style="left:807px;top:390px;width:796px;height:465px;border-radius:8px;box-shadow:0 10px 30px 2px rgba(0,0,0,.28), 0 0 2px rgba(0,0,0,.3);"></div><div class="layer" style="clip-path:inset(390px 856px 313px 807px round 8px);"><div class="r" style="left:807.00px;top:390.00px;width:796.00px;height:465.00px;background:#ebebeb;"></div><span class="t" style="top:396.50px;font:12px 'Liberation Sans', sans-serif;line-height:16px;color:#444;left:815.50px;">C</span><svg class="r" style="left:1582px;top:398.5px" width="12" height="12" viewBox="0 0 12 12"><path d="M1 1l10 10M11 1l-10 10" stroke="#555" stroke-width="1.1" fill="none"/></svg></div>
<!-- part_replay --><div class="r" style="left:970px;top:560px;width:556px;height:474px;border-radius:8px;box-shadow:0 10px 30px 2px rgba(0,0,0,.28), 0 0 2px rgba(0,0,0,.3);"></div><div class="layer" style="clip-path:inset(560px 933px 134px 970px round 8px);"><div class="r" style="left:970.00px;top:560.00px;width:556.00px;height:474.00px;background:#f0f0f0;"></div><div class="r" style="left:978.00px;top:900.00px;width:306.50px;height:124.50px;background:transparent;border:1px solid #a0a0a0;box-shadow:1px 1px 0 #fff,inset 1px 1px 0 #fff;"></div><div class="r" style="left:1298.00px;top:900.00px;width:149.00px;height:66.50px;background:transparent;border:1px solid #a0a0a0;box-shadow:1px 1px 0 #fff,inset 1px 1px 0 #fff;"></div><span class="t" style="top:917.00px;font:14px 'Liberation Sans', sans-serif;line-height:18px;color:#000;left:986.60px;">Jump:</span><span class="t" style="top:917.00px;font:14px 'Liberation Sans', sans-serif;line-height:18px;color:#000;left:1306.00px;">Speed:</span><span class="t" style="top:935.60px;font:14px 'Liberation Sans', sans-serif;line-height:18px;color:#000;letter-spacing:-0.599px;left:986.60px;">Method:</span><span class="t" style="top:937.20px;font:14px 'Liberation Sans', sans-serif;line-height:18px;color:#000;letter-spacing:-0.699px;left:1172.20px;">Unit:</span><div class="r" style="left:986.00px;top:956.00px;width:174.50px;height:62.50px;background:#fff;border:1px solid;border-color:#a0a0a0 #fff #fff #a0a0a0;box-shadow:inset 1px 1px 0 #696969,inset -1px -1px 0 #e3e3e3;"></div><div class="r" style="left:1144.00px;top:958.00px;width:14.50px;height:58.50px;background:#f0f0f0;"></div><div class="r" style="left:1151.00px;top:981.00px;width:2.00px;height:19.50px;background:#858585;border-radius:1px"></div><span class="t" style="top:957.00px;font:14px 'Liberation Sans', sans-serif;line-height:18px;color:#000;letter-spacing:-0.266px;left:990.00px;">By Number of Trades</span><span class="t" style="top:972.80px;font:14px 'Liberation Sans', sans-serif;line-height:18px;color:#000;letter-spacing:-0.364px;left:990.00px;">To Next Bar</span><div class="r" style="left:988.00px;top:990.00px;width:155.00px;height:16.00px;background:#0078d7;"></div><div class="r" style="left:988px;top:990px;width:155px;height:16px;overflow:hidden"><span class="t" style="top:-0.80px;font:14px 'Liberation Sans', sans-serif;line-height:18px;color:#fff;letter-spacing:-0.465px;left:2.50px;">To Next Time Increment (h</span></div><div class="r" style="left:1168.00px;top:958.50px;width:105.00px;height:26.50px;background:#f0f0f0;border:1px solid;border-color:#a0a0a0 #fff #fff #a0a0a0;box-shadow:inset 1px 1px 0 #696969,inset -1px -1px 0 #e3e3e3;"></div><span class="t" style="top:961.60px;font:12.5px 'Liberation Sans', sans-serif;line-height:16px;color:#000;letter-spacing:0.000px;left:1171.00px;">00:00:30.000</span><div class="r" style="left:1168.00px;top:990.50px;width:30.00px;height:27.50px;background:#f0f0f0;border:1px solid;border-color:#fff #696969 #696969 #fff;box-shadow:inset -1px -1px 0 #a0a0a0,inset 1px 1px 0 #f0f0f0;"></div><div class="r" style="left:1168px;top:990.5px;width:30px;height:27.5px;text-align:center;font:14px 'Liberation Sans',sans-serif;line-height:26.5px;color:#000;white-space:pre">&lt;&lt;</div><div class="r" style="left:1242.00px;top:990.50px;width:30.50px;height:27.50px;background:#f0f0f0;border:1px solid;border-color:#fff #696969 #696969 #fff;box-shadow:inset -1px -1px 0 #a0a0a0,inset 1px 1px 0 #f0f0f0;"></div><div class="r" style="left:1242px;top:990.5px;width:30.5px;height:27.5px;text-align:center;font:14px 'Liberation Sans',sans-serif;line-height:26.5px;color:#000;white-space:pre">&gt;&gt;</div><div class="r" style="left:1306.00px;top:938.50px;width:100.00px;height:22.50px;background:#fff;border:1px solid;border-color:#a0a0a0 #fff #fff #a0a0a0;box-shadow:inset 1px 1px 0 #696969,inset -1px -1px 0 #e3e3e3;"></div><div class="r" style="left:1386.50px;top:940.50px;width:17.50px;height:18.50px;background:#f0f0f0;border:1px solid;border-color:#fff #696969 #696969 #fff;box-shadow:inset -1px -1px 0 #a0a0a0,inset 1px 1px 0 #f0f0f0;"></div><svg class="r" style="left:1391.75px;top:948.50px" width="7.0" height="4.0" viewBox="0 0 7.0 4.0"><path d="M0 0h7.0l-3.5 4.0z" fill="#000"/></svg><div class="r" style="left:1308px;top:938.5px;width:78.50px;height:22.5px;overflow:hidden"><span class="t" style="top:2.55px;font:14px 'Liberation Sans', sans-serif;line-height:18px;color:#000;left:3.50px;">1</span></div><div class="r" style="left:1408.50px;top:938.00px;width:15.50px;height:11.50px;background:#f0f0f0;border:1px solid;border-color:#fff #696969 #696969 #fff;box-shadow:inset -1px -1px 0 #a0a0a0,inset 1px 1px 0 #f0f0f0;"></div><div class="r" style="left:1408.50px;top:949.50px;width:15.50px;height:11.50px;background:#f0f0f0;border:1px solid;border-color:#fff #696969 #696969 #fff;box-shadow:inset -1px -1px 0 #a0a0a0,inset 1px 1px 0 #f0f0f0;"></div><svg class="r" style="left:1413.5px;top:942px" width="6" height="4"><path d="M0 4h6l-3 -4z" fill="#000"/></svg><svg class="r" style="left:1413.5px;top:953.5px" width="6" height="4"><path d="M0 0h6l-3 4z" fill="#000"/></svg><div class="r" style="left:1455.50px;top:932.00px;width:61.00px;height:27.50px;background:#f0f0f0;border:1px solid;border-color:#fff #696969 #696969 #fff;box-shadow:inset -1px -1px 0 #a0a0a0,inset 1px 1px 0 #f0f0f0;"></div><div class="r" style="left:1455.5px;top:932px;width:61px;height:27.5px;text-align:center;font:14px 'Liberation Sans',sans-serif;line-height:26.5px;color:#000;white-space:pre">Play</div><div class="r" style="left:1455.50px;top:978.00px;width:61.00px;height:27.50px;background:#f0f0f0;border:1px solid;border-color:#fff #696969 #696969 #fff;box-shadow:inset -1px -1px 0 #a0a0a0,inset 1px 1px 0 #f0f0f0;"></div><div class="r" style="left:1455.5px;top:978px;width:61px;height:27.5px;text-align:center;font:14px 'Liberation Sans',sans-serif;line-height:26.5px;color:#000;white-space:pre">Stop</div><div class="r" style="left:1300.50px;top:977.40px;width:12.00px;height:12.00px;background:#fff;border:1px solid;border-color:#a0a0a0 #fff #fff #a0a0a0;box-shadow:inset 1px 1px 0 #696969,inset -1px -1px 0 #e3e3e3;"></div><span class="t" style="top:974.40px;font:14px 'Liberation Sans', sans-serif;line-height:18px;color:#000;letter-spacing:-0.275px;left:1318.20px;">Skip Empty Periods</span><div class="r" style="left:1300.50px;top:1001.30px;width:12.00px;height:12.00px;background:#fff;border:1px solid;border-color:#a0a0a0 #fff #fff #a0a0a0;box-shadow:inset 1px 1px 0 #696969,inset -1px -1px 0 #e3e3e3;"></div><svg class="r" style="left:1303.40px;top:1004.00px" width="7.2" height="7.5" viewBox="0 0 7.2 7.5"><path d="M0 2.1L2.5 4.6L7.2 0V2.9L2.5 7.5L0 5z" fill="#000"/></svg><span class="t" style="top:998.30px;font:14px 'Liberation Sans', sans-serif;line-height:18px;color:#000;letter-spacing:-0.403px;left:1318.20px;">Start Paused</span><div class="r" style="left:970.00px;top:925.00px;width:556.00px;height:40.00px;background:linear-gradient(to bottom,rgba(0,0,0,.22),rgba(0,0,0,0));"></div></div>
<!-- part_dialog --><div class="r" style="left:822px;top:314px;width:766px;height:618px;border-radius:8px;box-shadow:0 16px 38px 0 rgba(0,0,0,.34), 0 0 2px rgba(0,0,0,.4);"></div><div class="layer" style="clip-path:inset(314px 871px 236px 822px round 8px);"><div class="r" style="left:822.00px;top:314.00px;width:766.00px;height:618.00px;background:#f0f0f0;"></div><div class="r" style="left:822.00px;top:314.00px;width:766.00px;height:31.00px;background:#f3f3f3;"></div><span class="t" style="top:321.00px;font:12px 'Liberation Sans', sans-serif;line-height:16px;color:#000;letter-spacing:-0.183px;left:831.00px;">Study Settings: Bid &amp; Ask Prices. ID:8</span><svg class="r" style="left:1568px;top:323px" width="10" height="10" viewBox="0 0 10 10"><path d="M0 0l10 10M10 0l-10 10" stroke="#000" stroke-width="1.1" fill="none"/></svg><div class="r" style="left:837.00px;top:382.00px;width:739.50px;height:491.50px;background:#f0f0f0;border:1px solid;border-color:#fff #696969 #696969 #fff;box-shadow:inset -1px -1px 0 #a0a0a0;"></div><div class="r" style="left:839.00px;top:361.50px;width:123.50px;height:20.50px;background:#f0f0f0;border:1px solid;border-color:#fff #696969 #f0f0f0 #fff;border-bottom:0;box-shadow:inset -1px 0 0 #a0a0a0;border-radius:2px 2px 0 0;"></div><div class="r" style="left:1041.00px;top:361.50px;width:46.50px;height:20.50px;background:#f0f0f0;border:1px solid;border-color:#fff #696969 #f0f0f0 #fff;border-bottom:0;box-shadow:inset -1px 0 0 #a0a0a0;border-radius:2px 2px 0 0;"></div><div class="r" style="left:960.50px;top:359.00px;width:81.50px;height:24.50px;background:#f0f0f0;border:1px solid;border-color:#fff #696969 #f0f0f0 #fff;border-bottom:0;box-shadow:inset -1px 0 0 #a0a0a0;border-radius:2px 2px 0 0;"></div><span class="t" style="top:362.40px;font:14px 'Liberation Sans', sans-serif;line-height:18px;color:#000;letter-spacing:-0.493px;left:844.20px;">Settings and Inputs</span><span class="t" style="top:360.60px;font:14px 'Liberation Sans', sans-serif;line-height:18px;color:#000;letter-spacing:-0.277px;left:968.00px;">Subgraphs</span><span class="t" style="top:362.40px;font:14px 'Liberation Sans', sans-serif;line-height:18px;color:#000;letter-spacing:-0.459px;left:1046.00px;">Alerts</span><span class="t" style="top:395.60px;font:14px 'Liberation Sans', sans-serif;line-height:18px;color:#000;letter-spacing:-0.357px;left:852.40px;">Graph Draw Type:</span><div class="r" style="left:970.00px;top:393.50px;width:222.00px;height:22.50px;background:#f0f0f0;border:1px solid;border-color:#a0a0a0 #fff #fff #a0a0a0;box-shadow:inset 1px 1px 0 #696969,inset -1px -1px 0 #e3e3e3;"></div><div class="r" style="left:1172.50px;top:395.50px;width:17.50px;height:18.50px;background:#f0f0f0;border:1px solid;border-color:#fff #696969 #696969 #fff;box-shadow:inset -1px -1px 0 #a0a0a0,inset 1px 1px 0 #f0f0f0;"></div><svg class="r" style="left:1177.75px;top:403.50px" width="7.0" height="4.0" viewBox="0 0 7.0 4.0"><path d="M0 0h7.0l-3.5 4.0z" fill="#a0a0a0"/></svg><div class="r" style="left:972px;top:393.5px;width:200.50px;height:22.5px;overflow:hidden"><span class="t" style="top:2.55px;font:14px 'Liberation Sans', sans-serif;line-height:18px;color:#a0a0a0;letter-spacing:-0.747px;left:3.50px;">Custom</span></div><div class="r" style="left:1212.30px;top:398.00px;width:12.00px;height:12.00px;background:#f0f0f0;border:1px solid;border-color:#a0a0a0 #fff #fff #a0a0a0;box-shadow:inset 1px 1px 0 #696969,inset -1px -1px 0 #e3e3e3;"></div><span class="t" style="top:396.60px;font:14px 'Liberation Sans', sans-serif;line-height:18px;color:#fff;letter-spacing:-0.397px;left:1231.40px;">Use Chart Graphics Settings For Subgraph Colors</span><span class="t" style="top:395.60px;font:14px 'Liberation Sans', sans-serif;line-height:18px;color:#a0a0a0;letter-spacing:-0.397px;left:1230.40px;">Use Chart Graphics Settings For Subgraph Colors</span><div class="r" style="left:852.50px;top:427.50px;width:709.00px;height:166.00px;background:#fff;border:1px solid;border-color:#a0a0a0 #fff #fff #a0a0a0;box-shadow:inset 1px 1px 0 #696969,inset -1px -1px 0 #e3e3e3;"></div><div class="r" style="left:854.50px;top:429.50px;width:705.50px;height:18.00px;background:#f0f0f0;border-bottom:1px solid #a0a0a0;"></div><div class="r" style="left:1106.50px;top:429.50px;width:1.00px;height:17.00px;background:#a0a0a0;"></div><div class="r" style="left:1107.50px;top:429.50px;width:1.00px;height:17.00px;background:#fff;"></div><div class="r" style="left:1243.50px;top:429.50px;width:1.00px;height:17.00px;background:#a0a0a0;"></div><div class="r" style="left:1244.50px;top:429.50px;width:1.00px;height:17.00px;background:#fff;"></div><div class="r" style="left:1370.50px;top:429.50px;width:1.00px;height:17.00px;background:#a0a0a0;"></div><div class="r" style="left:1371.50px;top:429.50px;width:1.00px;height:17.00px;background:#fff;"></div><div class="r" style="left:1434.00px;top:429.50px;width:1.00px;height:17.00px;background:#a0a0a0;"></div><div class="r" style="left:1435.00px;top:429.50px;width:1.00px;height:17.00px;background:#fff;"></div><span class="t" style="top:429.80px;font:14px 'Liberation Sans', sans-serif;line-height:18px;color:#000;letter-spacing:-0.460px;left:860.20px;">Subgraph</span><span class="t" style="top:429.80px;font:14px 'Liberation Sans', sans-serif;line-height:18px;color:#000;letter-spacing:-0.410px;left:1114.30px;">Draw Style</span><span class="t" style="top:429.80px;font:14px 'Liberation Sans', sans-serif;line-height:18px;color:#000;letter-spacing:-0.443px;left:1251.20px;">Line Style</span><span class="t" style="top:429.80px;font:14px 'Liberation Sans', sans-serif;line-height:18px;color:#000;letter-spacing:-0.449px;left:1378.00px;">Width</span><span class="t" style="top:429.80px;font:14px 'Liberation Sans', sans-serif;line-height:18px;color:#000;letter-spacing:-0.347px;left:1441.00px;">Line Label</span><div class="r" style="left:854.50px;top:467.20px;width:705.50px;height:1.00px;background:#f0f0f0;"></div><div class="r" style="left:854.50px;top:484.20px;width:705.50px;height:1.00px;background:#f0f0f0;"></div><div class="r" style="left:854.50px;top:501.20px;width:705.50px;height:1.00px;background:#f0f0f0;"></div><div class="r" style="left:854.50px;top:518.20px;width:705.50px;height:1.00px;background:#f0f0f0;"></div><div class="r" style="left:854.50px;top:535.20px;width:705.50px;height:1.00px;background:#f0f0f0;"></div><div class="r" style="left:854.50px;top:552.20px;width:705.50px;height:1.00px;background:#f0f0f0;"></div><div class="r" style="left:854.50px;top:569.20px;width:705.50px;height:1.00px;background:#f0f0f0;"></div><div class="r" style="left:1108.00px;top:448.00px;width:1.00px;height:128.00px;background:#f0f0f0;"></div><div class="r" style="left:1245.00px;top:448.00px;width:1.00px;height:128.00px;background:#f0f0f0;"></div><div class="r" style="left:1372.00px;top:448.00px;width:1.00px;height:128.00px;background:#f0f0f0;"></div><div class="r" style="left:1435.50px;top:448.00px;width:1.00px;height:128.00px;background:#f0f0f0;"></div><div class="r" style="left:856.00px;top:451.00px;width:704.00px;height:16.00px;background:#0078d7;"></div><div class="r" style="left:856.00px;top:451.00px;width:32.00px;height:16.00px;background:#8a3a7a;"></div><div class="r" style="left:856.00px;top:468.00px;width:32.00px;height:16.00px;background:#6ef06e;"></div><div class="r" style="left:1107.50px;top:451.00px;width:1.50px;height:16.00px;background:#fff;"></div><div class="r" style="left:1244.50px;top:451.00px;width:1.50px;height:16.00px;background:#fff;"></div><div class="r" style="left:1371.50px;top:451.00px;width:1.50px;height:16.00px;background:#fff;"></div><div class="r" style="left:1435.00px;top:451.00px;width:1.50px;height:16.00px;background:#fff;"></div><span class="t" style="top:450.20px;font:14px 'Liberation Sans', sans-serif;line-height:18px;color:#fff;letter-spacing:-0.621px;left:890.20px;">Bid (SG1)</span><span class="t" style="top:450.20px;font:14px 'Liberation Sans', sans-serif;line-height:18px;color:#fff;letter-spacing:-0.577px;left:1114.30px;">Line at Last Bar to ...</span><span class="t" style="top:450.20px;font:14px 'Liberation Sans', sans-serif;line-height:18px;color:#fff;letter-spacing:-0.285px;left:1251.20px;">Solid</span><span class="t" style="top:450.20px;font:14px 'Liberation Sans', sans-serif;line-height:18px;color:#fff;left:1378.60px;">1</span><span class="t" style="top:450.20px;font:14px 'Liberation Sans', sans-serif;line-height:18px;color:#fff;left:1441.30px;">-</span><span class="t" style="top:467.30px;font:14px 'Liberation Sans', sans-serif;line-height:18px;color:#000;letter-spacing:-0.635px;left:890.20px;">Ask (SG2)</span><span class="t" style="top:467.30px;font:14px 'Liberation Sans', sans-serif;line-height:18px;color:#000;letter-spacing:-0.451px;left:1114.30px;">Line Extend to Edge</span><span class="t" style="top:467.30px;font:14px 'Liberation Sans', sans-serif;line-height:18px;color:#000;letter-spacing:-0.285px;left:1251.20px;">Solid</span><span class="t" style="top:467.30px;font:14px 'Liberation Sans', sans-serif;line-height:18px;color:#000;left:1378.60px;">1</span><span class="t" style="top:467.30px;font:14px 'Liberation Sans', sans-serif;line-height:18px;color:#000;left:1441.30px;">-</span><div class="r" style="left:854.50px;top:577.00px;width:705.50px;height:15.50px;background:#f0f0f0;"></div><div class="r" style="left:871.00px;top:584.00px;width:669.00px;height:2.00px;background:#858585;border-radius:1px"></div><div class="r" style="left:852.50px;top:605.50px;width:708.50px;height:184.00px;background:transparent;border:1px solid #a0a0a0;box-shadow:1px 1px 0 #fff,inset 1px 1px 0 #fff;"></div><div class="r" style="left:858.00px;top:598.00px;width:63.00px;height:14.00px;background:#f0f0f0;"></div><span class="t" style="top:596.00px;font:14px 'Liberation Sans', sans-serif;line-height:18px;color:#000;letter-spacing:-0.621px;left:861.40px;">Bid (SG1)</span><span class="t" style="top:612.30px;font:14px 'Liberation Sans', sans-serif;line-height:18px;color:#000;letter-spacing:-0.572px;left:864.30px;">Color:</span><div class="r" style="left:868.50px;top:631.50px;width:51.50px;height:22.50px;background:#f0f0f0;border:1px solid;border-color:#fff #696969 #696969 #fff;box-shadow:inset -1px -1px 0 #a0a0a0,inset 1px 1px 0 #f0f0f0;"></div><div class="r" style="left:872.00px;top:635.30px;width:44.30px;height:15.50px;background:#ff0000;"></div><span class="t" style="top:612.30px;font:14px 'Liberation Sans', sans-serif;line-height:18px;color:#000;letter-spacing:-0.558px;left:932.50px;">Draw Style:</span><div class="r" style="left:932.00px;top:631.80px;width:142.50px;height:21.50px;background:#fff;border:1px solid;border-color:#a0a0a0 #fff #fff #a0a0a0;box-shadow:inset 1px 1px 0 #696969,inset -1px -1px 0 #e3e3e3;"></div><div class="r" style="left:1056.00px;top:633.80px;width:16.50px;height:17.50px;background:#f0f0f0;border:1px solid;border-color:#fff #696969 #696969 #fff;box-shadow:inset -1px -1px 0 #a0a0a0,inset 1px 1px 0 #f0f0f0;"></div><svg class="r" style="left:1060.75px;top:641.30px" width="7.0" height="4.0" viewBox="0 0 7.0 4.0"><path d="M0 0h7.0l-3.5 4.0z" fill="#000"/></svg><div class="r" style="left:934px;top:631.8px;width:122.00px;height:21.5px;overflow:hidden"><span class="t" style="top:2.05px;font:14px 'Liberation Sans', sans-serif;line-height:18px;color:#000;letter-spacing:-0.575px;left:3.50px;">Line at Last Bar to Edge</span></div><span class="t" style="top:612.30px;font:14px 'Liberation Sans', sans-serif;line-height:18px;color:#000;letter-spacing:-0.537px;left:1088.30px;">Line Style:</span><div class="r" style="left:1088.30px;top:631.80px;width:110.00px;height:21.50px;background:#fff;border:1px solid;border-color:#a0a0a0 #fff #fff #a0a0a0;box-shadow:inset 1px 1px 0 #696969,inset -1px -1px 0 #e3e3e3;"></div><div class="r" style="left:1179.80px;top:633.80px;width:16.50px;height:17.50px;background:#f0f0f0;border:1px solid;border-color:#fff #696969 #696969 #fff;box-shadow:inset -1px -1px 0 #a0a0a0,inset 1px 1px 0 #f0f0f0;"></div><svg class="r" style="left:1184.55px;top:641.30px" width="7.0" height="4.0" viewBox="0 0 7.0 4.0"><path d="M0 0h7.0l-3.5 4.0z" fill="#000"/></svg><div class="r" style="left:1090.3px;top:631.8px;width:89.50px;height:21.5px;overflow:hidden"><span class="t" style="top:2.05px;font:14px 'Liberation Sans', sans-serif;line-height:18px;color:#000;letter-spacing:-0.285px;left:3.50px;">Solid</span></div><span class="t" style="top:612.30px;font:14px 'Liberation Sans', sans-serif;line-height:18px;color:#000;letter-spacing:-0.451px;left:1212.40px;">Width/Size:</span><div class="r" style="left:1212.30px;top:631.80px;width:58.00px;height:21.50px;background:#fff;border:1px solid;border-color:#a0a0a0 #fff #fff #a0a0a0;box-shadow:inset 1px 1px 0 #696969,inset -1px -1px 0 #e3e3e3;"></div><div class="r" style="left:1253.30px;top:633.80px;width:15.00px;height:8.75px;background:#f0f0f0;border:1px solid;border-color:#fff #696969 #696969 #fff;box-shadow:inset -1px -1px 0 #a0a0a0,inset 1px 1px 0 #f0f0f0;"></div><div class="r" style="left:1253.30px;top:642.55px;width:15.00px;height:8.75px;background:#f0f0f0;border:1px solid;border-color:#fff #696969 #696969 #fff;box-shadow:inset -1px -1px 0 #a0a0a0,inset 1px 1px 0 #f0f0f0;"></div><svg class="r" style="left:1258.30px;top:636.67px" width="5" height="3"><path d="M0 3h5l-2.5 -3z" fill="#000"/></svg><svg class="r" style="left:1258.30px;top:645.42px" width="5" height="3"><path d="M0 0h5l-2.5 3z" fill="#000"/></svg><span class="t" style="top:633.55px;font:14px 'Liberation Sans', sans-serif;line-height:18px;color:#000;left:1216.30px;">1</span><span class="t" style="top:654.30px;font:14px 'Liberation Sans', sans-serif;line-height:18px;color:#000;letter-spacing:-0.500px;left:864.30px;">Auto-Coloring:</span><div class="r" style="left:980.40px;top:658.30px;width:12.00px;height:12.00px;background:#fff;border:1px solid;border-color:#a0a0a0 #fff #fff #a0a0a0;box-shadow:inset 1px 1px 0 #696969,inset -1px -1px 0 #e3e3e3;"></div><span class="t" style="top:655.30px;font:14px 'Liberation Sans', sans-serif;line-height:18px;color:#000;letter-spacing:-0.316px;left:998.40px;">Label</span><div class="r" style="left:1052.30px;top:655.00px;width:24.00px;height:24.00px;background:#f0f0f0;border:1px solid;border-color:#fff #696969 #696969 #fff;box-shadow:inset -1px -1px 0 #a0a0a0,inset 1px 1px 0 #f0f0f0;"></div><div class="r" style="left:1056.00px;top:659.00px;width:16.00px;height:15.50px;background:#a0a0a0;"></div><span class="t" style="top:655.30px;font:14px 'Liberation Sans', sans-serif;line-height:18px;color:#fff;letter-spacing:-0.475px;left:1089.30px;">Text to Draw:</span><span class="t" style="top:654.30px;font:14px 'Liberation Sans', sans-serif;line-height:18px;color:#a0a0a0;letter-spacing:-0.475px;left:1088.30px;">Text to Draw:</span><div class="r" style="left:864.30px;top:673.80px;width:104.00px;height:21.50px;background:#fff;border:1px solid;border-color:#a0a0a0 #fff #fff #a0a0a0;box-shadow:inset 1px 1px 0 #696969,inset -1px -1px 0 #e3e3e3;"></div><div class="r" style="left:949.80px;top:675.80px;width:16.50px;height:17.50px;background:#f0f0f0;border:1px solid;border-color:#fff #696969 #696969 #fff;box-shadow:inset -1px -1px 0 #a0a0a0,inset 1px 1px 0 #f0f0f0;"></div><svg class="r" style="left:954.55px;top:683.30px" width="7.0" height="4.0" viewBox="0 0 7.0 4.0"><path d="M0 0h7.0l-3.5 4.0z" fill="#000"/></svg><div class="r" style="left:866.3px;top:673.8px;width:83.50px;height:21.5px;overflow:hidden"><span class="t" style="top:2.05px;font:14px 'Liberation Sans', sans-serif;line-height:18px;color:#000;letter-spacing:-0.490px;left:3.50px;">None</span></div><div class="r" style="left:1088.30px;top:673.80px;width:110.00px;height:21.50px;background:#f0f0f0;border:1px solid;border-color:#a0a0a0 #fff #fff #a0a0a0;box-shadow:inset 1px 1px 0 #696969,inset -1px -1px 0 #e3e3e3;"></div><div class="r" style="left:980.40px;top:691.50px;width:12.00px;height:12.00px;background:#fff;border:1px solid;border-color:#a0a0a0 #fff #fff #a0a0a0;box-shadow:inset 1px 1px 0 #696969,inset -1px -1px 0 #e3e3e3;"></div><svg class="r" style="left:983.30px;top:694.20px" width="7.2" height="7.5" viewBox="0 0 7.2 7.5"><path d="M0 2.1L2.5 4.6L7.2 0V2.9L2.5 7.5L0 5z" fill="#000"/></svg><span class="t" style="top:680.50px;font:14px 'Liberation Sans', sans-serif;line-height:18px;color:#000;letter-spacing:-0.493px;left:998.40px;">Include in</span><span class="t" style="top:696.00px;font:14px 'Liberation Sans', sans-serif;line-height:18px;color:#000;letter-spacing:-0.651px;left:998.40px;">Summary</span><span class="t" style="top:702.00px;font:14px 'Liberation Sans', sans-serif;line-height:18px;color:#000;letter-spacing:-0.559px;left:864.30px;">Short Name:</span><span class="t" style="top:700.00px;font:14px 'Liberation Sans', sans-serif;line-height:18px;color:#000;letter-spacing:-0.309px;left:1088.30px;">Displacement:</span><div class="r" style="left:864.30px;top:721.70px;width:211.00px;height:21.50px;background:#fff;border:1px solid;border-color:#a0a0a0 #fff #fff #a0a0a0;box-shadow:inset 1px 1px 0 #696969,inset -1px -1px 0 #e3e3e3;"></div><div class="r" style="left:1088.30px;top:721.70px;width:110.00px;height:21.50px;background:#fff;border:1px solid;border-color:#a0a0a0 #fff #fff #a0a0a0;box-shadow:inset 1px 1px 0 #696969,inset -1px -1px 0 #e3e3e3;"></div><div class="r" style="left:1181.30px;top:723.70px;width:15.00px;height:8.75px;background:#f0f0f0;border:1px solid;border-color:#fff #696969 #696969 #fff;box-shadow:inset -1px -1px 0 #a0a0a0,inset 1px 1px 0 #f0f0f0;"></div><div class="r" style="left:1181.30px;top:732.45px;width:15.00px;height:8.75px;background:#f0f0f0;border:1px solid;border-color:#fff #696969 #696969 #fff;box-shadow:inset -1px -1px 0 #a0a0a0,inset 1px 1px 0 #f0f0f0;"></div><svg class="r" style="left:1186.30px;top:726.58px" width="5" height="3"><path d="M0 3h5l-2.5 -3z" fill="#000"/></svg><svg class="r" style="left:1186.30px;top:735.33px" width="5" height="3"><path d="M0 0h5l-2.5 3z" fill="#000"/></svg><span class="t" style="top:723.45px;font:14px 'Liberation Sans', sans-serif;line-height:18px;color:#000;left:1092.30px;">0</span><div class="r" style="left:1286.40px;top:621.50px;width:130.50px;height:120.00px;background:transparent;border:1px solid #a0a0a0;box-shadow:1px 1px 0 #fff,inset 1px 1px 0 #fff;"></div><div class="r" style="left:1292.40px;top:614.00px;width:108.20px;height:14.00px;background:#f0f0f0;"></div><div class="r" style="left:1294.80px;top:614.80px;width:12.00px;height:12.00px;background:#fff;border:1px solid;border-color:#a0a0a0 #fff #fff #a0a0a0;box-shadow:inset 1px 1px 0 #696969,inset -1px -1px 0 #e3e3e3;"></div><span class="t" style="top:611.80px;font:14px 'Liberation Sans', sans-serif;line-height:18px;color:#000;letter-spacing:-0.319px;left:1312.40px;">Name Label:</span><div class="r" style="left:1294.80px;top:637.00px;width:12.00px;height:12.00px;background:#f0f0f0;border:1px solid;border-color:#a0a0a0 #fff #fff #a0a0a0;box-shadow:inset 1px 1px 0 #696969,inset -1px -1px 0 #e3e3e3;"></div><span class="t" style="top:635.50px;font:14px 'Liberation Sans', sans-serif;line-height:18px;color:#fff;letter-spacing:-0.268px;left:1313.40px;">Reverse Colors</span><span class="t" style="top:634.50px;font:14px 'Liberation Sans', sans-serif;line-height:18px;color:#a0a0a0;letter-spacing:-0.268px;left:1312.40px;">Reverse Colors</span><span class="t" style="top:650.50px;font:14px 'Liberation Sans', sans-serif;line-height:18px;color:#000;letter-spacing:-0.354px;left:1294.60px;">Horizontal Align:</span><div class="r" style="left:1294.60px;top:669.80px;width:114.00px;height:21.50px;background:#f0f0f0;border:1px solid;border-color:#a0a0a0 #fff #fff #a0a0a0;box-shadow:inset 1px 1px 0 #696969,inset -1px -1px 0 #e3e3e3;"></div><div class="r" style="left:1390.10px;top:671.80px;width:16.50px;height:17.50px;background:#f0f0f0;border:1px solid;border-color:#fff #696969 #696969 #fff;box-shadow:inset -1px -1px 0 #a0a0a0,inset 1px 1px 0 #f0f0f0;"></div><svg class="r" style="left:1394.85px;top:679.30px" width="7.0" height="4.0" viewBox="0 0 7.0 4.0"><path d="M0 0h7.0l-3.5 4.0z" fill="#a0a0a0"/></svg><div class="r" style="left:1296.6000000000001px;top:669.8px;width:93.50px;height:21.5px;overflow:hidden"><span class="t" style="top:2.05px;font:14px 'Liberation Sans', sans-serif;line-height:18px;color:#a0a0a0;letter-spacing:-0.309px;left:3.50px;">Right Edge</span></div><span class="t" style="top:696.00px;font:14px 'Liberation Sans', sans-serif;line-height:18px;color:#000;letter-spacing:-0.254px;left:1294.60px;">Vertical Align:</span><div class="r" style="left:1294.60px;top:717.30px;width:114.00px;height:21.50px;background:#f0f0f0;border:1px solid;border-color:#a0a0a0 #fff #fff #a0a0a0;box-shadow:inset 1px 1px 0 #696969,inset -1px -1px 0 #e3e3e3;"></div><div class="r" style="left:1390.10px;top:719.30px;width:16.50px;height:17.50px;background:#f0f0f0;border:1px solid;border-color:#fff #696969 #696969 #fff;box-shadow:inset -1px -1px 0 #a0a0a0,inset 1px 1px 0 #f0f0f0;"></div><svg class="r" style="left:1394.85px;top:726.80px" width="7.0" height="4.0" viewBox="0 0 7.0 4.0"><path d="M0 0h7.0l-3.5 4.0z" fill="#a0a0a0"/></svg><div class="r" style="left:1296.6000000000001px;top:717.3px;width:93.50px;height:21.5px;overflow:hidden"><span class="t" style="top:2.05px;font:14px 'Liberation Sans', sans-serif;line-height:18px;color:#a0a0a0;letter-spacing:-0.442px;left:3.50px;">Centered</span></div><div class="r" style="left:1422.40px;top:621.50px;width:130.50px;height:120.00px;background:transparent;border:1px solid #a0a0a0;box-shadow:1px 1px 0 #fff,inset 1px 1px 0 #fff;"></div><div class="r" style="left:1428.40px;top:614.00px;width:106.00px;height:14.00px;background:#f0f0f0;"></div><div class="r" style="left:1430.80px;top:614.80px;width:12.00px;height:12.00px;background:#fff;border:1px solid;border-color:#a0a0a0 #fff #fff #a0a0a0;box-shadow:inset 1px 1px 0 #696969,inset -1px -1px 0 #e3e3e3;"></div><span class="t" style="top:611.80px;font:14px 'Liberation Sans', sans-serif;line-height:18px;color:#000;letter-spacing:-0.256px;left:1448.40px;">Value Label:</span><div class="r" style="left:1430.80px;top:637.00px;width:12.00px;height:12.00px;background:#f0f0f0;border:1px solid;border-color:#a0a0a0 #fff #fff #a0a0a0;box-shadow:inset 1px 1px 0 #696969,inset -1px -1px 0 #e3e3e3;"></div><span class="t" style="top:635.50px;font:14px 'Liberation Sans', sans-serif;line-height:18px;color:#fff;letter-spacing:-0.268px;left:1449.40px;">Reverse Colors</span><span class="t" style="top:634.50px;font:14px 'Liberation Sans', sans-serif;line-height:18px;color:#a0a0a0;letter-spacing:-0.268px;left:1448.40px;">Reverse Colors</span><span class="t" style="top:650.50px;font:14px 'Liberation Sans', sans-serif;line-height:18px;color:#000;letter-spacing:-0.354px;left:1430.60px;">Horizontal Align:</span><div class="r" style="left:1430.60px;top:669.80px;width:114.00px;height:21.50px;background:#f0f0f0;border:1px solid;border-color:#a0a0a0 #fff #fff #a0a0a0;box-shadow:inset 1px 1px 0 #696969,inset -1px -1px 0 #e3e3e3;"></div><div class="r" style="left:1526.10px;top:671.80px;width:16.50px;height:17.50px;background:#f0f0f0;border:1px solid;border-color:#fff #696969 #696969 #fff;box-shadow:inset -1px -1px 0 #a0a0a0,inset 1px 1px 0 #f0f0f0;"></div><svg class="r" style="left:1530.85px;top:679.30px" width="7.0" height="4.0" viewBox="0 0 7.0 4.0"><path d="M0 0h7.0l-3.5 4.0z" fill="#a0a0a0"/></svg><div class="r" style="left:1432.6000000000001px;top:669.8px;width:93.50px;height:21.5px;overflow:hidden"><span class="t" style="top:2.05px;font:14px 'Liberation Sans', sans-serif;line-height:18px;color:#a0a0a0;letter-spacing:-0.217px;left:3.50px;">Right Side Value</span></div><span class="t" style="top:696.00px;font:14px 'Liberation Sans', sans-serif;line-height:18px;color:#000;letter-spacing:-0.254px;left:1430.60px;">Vertical Align:</span><div class="r" style="left:1430.60px;top:717.30px;width:114.00px;height:21.50px;background:#f0f0f0;border:1px solid;border-color:#a0a0a0 #fff #fff #a0a0a0;box-shadow:inset 1px 1px 0 #696969,inset -1px -1px 0 #e3e3e3;"></div><div class="r" style="left:1526.10px;top:719.30px;width:16.50px;height:17.50px;background:#f0f0f0;border:1px solid;border-color:#fff #696969 #696969 #fff;box-shadow:inset -1px -1px 0 #a0a0a0,inset 1px 1px 0 #f0f0f0;"></div><svg class="r" style="left:1530.85px;top:726.80px" width="7.0" height="4.0" viewBox="0 0 7.0 4.0"><path d="M0 0h7.0l-3.5 4.0z" fill="#a0a0a0"/></svg><div class="r" style="left:1432.6000000000001px;top:717.3px;width:93.50px;height:21.5px;overflow:hidden"><span class="t" style="top:2.05px;font:14px 'Liberation Sans', sans-serif;line-height:18px;color:#a0a0a0;letter-spacing:-0.442px;left:3.50px;">Centered</span></div><div class="r" style="left:858.50px;top:753.20px;width:12.00px;height:12.00px;background:#fff;border:1px solid;border-color:#a0a0a0 #fff #fff #a0a0a0;box-shadow:inset 1px 1px 0 #696969,inset -1px -1px 0 #e3e3e3;"></div><svg class="r" style="left:861.40px;top:755.90px" width="7.2" height="7.5" viewBox="0 0 7.2 7.5"><path d="M0 2.1L2.5 4.6L7.2 0V2.9L2.5 7.5L0 5z" fill="#000"/></svg><span class="t" style="top:750.20px;font:14px 'Liberation Sans', sans-serif;line-height:18px;color:#000;letter-spacing:-0.295px;left:876.30px;">Display Name and Value in Chart Values Windows</span><div class="r" style="left:858.50px;top:772.40px;width:12.00px;height:12.00px;background:#fff;border:1px solid;border-color:#a0a0a0 #fff #fff #a0a0a0;box-shadow:inset 1px 1px 0 #696969,inset -1px -1px 0 #e3e3e3;"></div><svg class="r" style="left:861.40px;top:775.10px" width="7.2" height="7.5" viewBox="0 0 7.2 7.5"><path d="M0 2.1L2.5 4.6L7.2 0V2.9L2.5 7.5L0 5z" fill="#000"/></svg><span class="t" style="top:769.40px;font:14px 'Liberation Sans', sans-serif;line-height:18px;color:#000;letter-spacing:-0.272px;left:876.30px;">Include in Spreadsheet</span><div class="r" style="left:1208.50px;top:753.20px;width:12.00px;height:12.00px;background:#fff;border:1px solid;border-color:#a0a0a0 #fff #fff #a0a0a0;box-shadow:inset 1px 1px 0 #696969,inset -1px -1px 0 #e3e3e3;"></div><svg class="r" style="left:1211.40px;top:755.90px" width="7.2" height="7.5" viewBox="0 0 7.2 7.5"><path d="M0 2.1L2.5 4.6L7.2 0V2.9L2.5 7.5L0 5z" fill="#000"/></svg><span class="t" style="top:750.20px;font:14px 'Liberation Sans', sans-serif;line-height:18px;color:#000;letter-spacing:-0.256px;left:1226.30px;">Display Name and Value in Region Data Line</span><div class="r" style="left:1208.50px;top:772.40px;width:12.00px;height:12.00px;background:#fff;border:1px solid;border-color:#a0a0a0 #fff #fff #a0a0a0;box-shadow:inset 1px 1px 0 #696969,inset -1px -1px 0 #e3e3e3;"></div><span class="t" style="top:769.40px;font:14px 'Liberation Sans', sans-serif;line-height:18px;color:#000;letter-spacing:-0.221px;left:1226.30px;">Use Transparent Label Background</span><div class="r" style="left:856.40px;top:800.20px;width:12.00px;height:12.00px;background:#fff;border:1px solid;border-color:#a0a0a0 #fff #fff #a0a0a0;box-shadow:inset 1px 1px 0 #696969,inset -1px -1px 0 #e3e3e3;"></div><svg class="r" style="left:859.30px;top:802.90px" width="7.2" height="7.5" viewBox="0 0 7.2 7.5"><path d="M0 2.1L2.5 4.6L7.2 0V2.9L2.5 7.5L0 5z" fill="#000"/></svg><span class="t" style="top:797.20px;font:14px 'Liberation Sans', sans-serif;line-height:18px;color:#000;letter-spacing:-0.249px;left:874.20px;">Display Study Subgraphs Name and Value - Global</span><div class="r" style="left:1204.30px;top:800.20px;width:12.00px;height:12.00px;background:#fff;border:1px solid;border-color:#a0a0a0 #fff #fff #a0a0a0;box-shadow:inset 1px 1px 0 #696969,inset -1px -1px 0 #e3e3e3;"></div><span class="t" style="top:797.20px;font:14px 'Liberation Sans', sans-serif;line-height:18px;color:#000;letter-spacing:-0.277px;left:1222.20px;">Use Common Displacement</span><div class="r" style="left:1406.10px;top:800.20px;width:12.00px;height:12.00px;background:#fff;border:1px solid;border-color:#a0a0a0 #fff #fff #a0a0a0;box-shadow:inset 1px 1px 0 #696969,inset -1px -1px 0 #e3e3e3;"></div><svg class="r" style="left:1409.00px;top:802.90px" width="7.2" height="7.5" viewBox="0 0 7.2 7.5"><path d="M0 2.1L2.5 4.6L7.2 0V2.9L2.5 7.5L0 5z" fill="#000"/></svg><span class="t" style="top:797.20px;font:14px 'Liberation Sans', sans-serif;line-height:18px;color:#000;letter-spacing:-0.260px;left:1424.00px;">Display Study Name</span><div class="r" style="left:856.40px;top:822.40px;width:12.00px;height:12.00px;background:#fff;border:1px solid;border-color:#a0a0a0 #fff #fff #a0a0a0;box-shadow:inset 1px 1px 0 #696969,inset -1px -1px 0 #e3e3e3;"></div><svg class="r" style="left:859.30px;top:825.10px" width="7.2" height="7.5" viewBox="0 0 7.2 7.5"><path d="M0 2.1L2.5 4.6L7.2 0V2.9L2.5 7.5L0 5z" fill="#000"/></svg><span class="t" style="top:819.40px;font:14px 'Liberation Sans', sans-serif;line-height:18px;color:#000;letter-spacing:-0.284px;left:874.20px;">Display Input Values</span><div class="r" style="left:1018.50px;top:822.40px;width:12.00px;height:12.00px;background:#fff;border:1px solid;border-color:#a0a0a0 #fff #fff #a0a0a0;box-shadow:inset 1px 1px 0 #696969,inset -1px -1px 0 #e3e3e3;"></div><span class="t" style="top:819.40px;font:14px 'Liberation Sans', sans-serif;line-height:18px;color:#000;letter-spacing:-0.342px;left:1036.40px;">Resolve Full Names for Reference Inputs</span><div class="r" style="left:1328.40px;top:822.40px;width:12.00px;height:12.00px;background:#fff;border:1px solid;border-color:#a0a0a0 #fff #fff #a0a0a0;box-shadow:inset 1px 1px 0 #696969,inset -1px -1px 0 #e3e3e3;"></div><span class="t" style="top:819.40px;font:14px 'Liberation Sans', sans-serif;line-height:18px;color:#000;letter-spacing:-0.191px;left:1346.50px;">Display Values When Hidden</span><div class="r" style="left:856.40px;top:844.20px;width:12.00px;height:12.00px;background:#fff;border:1px solid;border-color:#a0a0a0 #fff #fff #a0a0a0;box-shadow:inset 1px 1px 0 #696969,inset -1px -1px 0 #e3e3e3;"></div><svg class="r" style="left:859.30px;top:846.90px" width="7.2" height="7.5" viewBox="0 0 7.2 7.5"><path d="M0 2.1L2.5 4.6L7.2 0V2.9L2.5 7.5L0 5z" fill="#000"/></svg><span class="t" style="top:841.20px;font:14px 'Liberation Sans', sans-serif;line-height:18px;color:#000;letter-spacing:-0.288px;left:874.20px;">Always Show Name and Value Labels When Enabled</span><span class="t" style="top:844.00px;font:14px 'Liberation Sans', sans-serif;line-height:18px;color:#000;letter-spacing:-0.319px;left:1219.10px;">Transparency Level for Fill Styles:</span><div class="r" style="left:1440.00px;top:841.70px;width:59.00px;height:22.30px;background:#fff;border:1px solid;border-color:#a0a0a0 #fff #fff #a0a0a0;box-shadow:inset 1px 1px 0 #696969,inset -1px -1px 0 #e3e3e3;"></div><span class="t" style="top:843.50px;font:14px 'Liberation Sans', sans-serif;line-height:18px;color:#000;letter-spacing:-2.078px;left:1444.00px;">75</span><div class="r" style="left:836.00px;top:884.30px;width:92.00px;height:27.20px;background:#f0f0f0;border:1px solid #3c3c3c;box-shadow:inset 1px 1px 0 #fff,inset -1px -1px 0 #696969,inset -2px -2px 0 #a0a0a0;"></div><div class="r" style="left:836px;top:884.3px;width:92px;height:27.2px;text-align:center;font:14px 'Liberation Sans',sans-serif;line-height:26.2px;color:#000;white-space:pre">OK</div><div class="r" style="left:938.30px;top:884.30px;width:91.50px;height:27.20px;background:#f0f0f0;border:1px solid;border-color:#fff #696969 #696969 #fff;box-shadow:inset -1px -1px 0 #a0a0a0,inset 1px 1px 0 #f0f0f0;"></div><div class="r" style="left:938.3px;top:884.3px;width:91.5px;height:27.2px;text-align:center;font:14px 'Liberation Sans',sans-serif;line-height:26.2px;color:#000;white-space:pre">Cancel</div><div class="r" style="left:1040.00px;top:884.30px;width:91.70px;height:27.20px;background:#f0f0f0;border:1px solid;border-color:#fff #696969 #696969 #fff;box-shadow:inset -1px -1px 0 #a0a0a0,inset 1px 1px 0 #f0f0f0;"></div><div class="r" style="left:1040px;top:884.3px;width:91.7px;height:27.2px;text-align:center;font:14px 'Liberation Sans',sans-serif;line-height:26.2px;color:#000;white-space:pre">Apply</div><div class="r" style="left:1142.00px;top:884.30px;width:91.80px;height:27.20px;background:#f0f0f0;border:1px solid;border-color:#fff #696969 #696969 #fff;box-shadow:inset -1px -1px 0 #a0a0a0,inset 1px 1px 0 #f0f0f0;"></div><div class="r" style="left:1142px;top:884.3px;width:91.8px;height:27.2px;text-align:center;font:14px 'Liberation Sans',sans-serif;line-height:26.2px;color:#000;white-space:pre">Help</div><div class="r" style="left:1244.30px;top:884.30px;width:99.30px;height:27.20px;background:#f0f0f0;border:1px solid;border-color:#fff #696969 #696969 #fff;box-shadow:inset -1px -1px 0 #a0a0a0,inset 1px 1px 0 #f0f0f0;"></div><div class="r" style="left:1244.3px;top:884.3px;width:99.3px;height:27.2px;text-align:center;font:14px 'Liberation Sans',sans-serif;line-height:26.2px;color:#000;white-space:pre">Description</div><div class="r" style="left:1354.20px;top:884.30px;width:107.50px;height:27.20px;background:#f0f0f0;border:1px solid;border-color:#fff #696969 #696969 #fff;box-shadow:inset -1px -1px 0 #a0a0a0,inset 1px 1px 0 #f0f0f0;"></div><div class="r" style="left:1354.2px;top:884.3px;width:107.5px;height:27.2px;text-align:center;font:14px 'Liberation Sans',sans-serif;line-height:26.2px;color:#000;white-space:pre">Set Defaults</div><div class="r" style="left:1472.00px;top:884.30px;width:108.00px;height:27.20px;background:#f0f0f0;border:1px solid;border-color:#fff #696969 #696969 #fff;box-shadow:inset -1px -1px 0 #a0a0a0,inset 1px 1px 0 #f0f0f0;"></div><div class="r" style="left:1472px;top:884.3px;width:108px;height:27.2px;text-align:center;font:14px 'Liberation Sans',sans-serif;line-height:26.2px;color:#000;white-space:pre">Reset Defaults</div></div>
<!-- part_dom --><div class="layer" style="clip-path:inset(0px 267px 620px 1765px round 0px);"><div class="r" style="left:1765.00px;top:-6.00px;width:427.00px;height:554.00px;background:#d7e4f2;border:1px solid #4c4e54;box-shadow:inset 0 0 0 1px #f0f4ff;"></div><div class="r" style="left:1773.00px;top:0.00px;width:411.00px;height:548.00px;background:#fff;"></div><div class="r" style="left:1773.00px;top:0.00px;width:1.70px;height:548.00px;background:#707070;"></div><div class="r" style="left:1773.00px;top:0.00px;width:408.80px;height:2.00px;background:#a6a6a6;"></div><div class="r" style="left:1776.20px;top:2.00px;width:405.60px;height:548.00px;background:#000;"></div><svg class="r" style="left:0;top:0" width="2459" height="1168" viewBox="0 0 2459 1168" shape-rendering="crispEdges"><rect x="1776.0" y="74.3" width="165.2" height="473.7" fill="#222222"/><rect x="1778.0" y="97.2" width="3.5" height="16.6" fill="#7f7f20"/><rect x="1778.0" y="113.6" width="12.7" height="16.6" fill="#7f7f20"/><rect x="1778.0" y="130.0" width="55.0" height="16.6" fill="#7f7f20"/><rect x="1778.0" y="146.4" width="136.7" height="16.6" fill="#7f7f20"/><rect x="1778.0" y="162.8" width="89.0" height="16.6" fill="#7f7f20"/><rect x="1778.0" y="179.2" width="86.0" height="16.6" fill="#7f7f20"/><rect x="1778.0" y="195.6" width="64.0" height="16.6" fill="#7f7f20"/><rect x="1778.0" y="212.0" width="136.0" height="16.6" fill="#7f7f20"/><rect x="1778.0" y="228.4" width="15.0" height="16.6" fill="#7f7f20"/><rect x="1778.0" y="244.8" width="169.0" height="16.6" fill="#7f7f20"/><rect x="1778.0" y="261.2" width="96.8" height="16.6" fill="#7f7f20"/><rect x="1778.0" y="277.6" width="95.3" height="16.6" fill="#7f7f20"/><rect x="1778.0" y="294.0" width="94.2" height="16.6" fill="#7f7f20"/><rect x="1792.7" y="228.1" width="154.3" height="16.2" fill="#d98422"/><rect x="1947.0" y="228.1" width="16.0" height="16.2" fill="#c80000"/><polyline fill="none" stroke="#ffffc0" stroke-width="1" points="1778.5,97.2 1781.6,97.2 1781.6,113.6 1790.0,113.6 1790.0,130.0 1809.9,130.0 1809.9,146.4 1857.8,146.4 1857.8,162.8 1826.7,162.8 1826.7,179.2 1831.5,179.2 1831.5,195.6 1814.7,195.6 1814.7,212.0 1864.8,212.0 1864.8,228.4 1888.7,228.4 1888.7,244.8 1947.0,244.8 1947.0,261.2 1855.5,261.2 1855.5,277.6 1859.4,277.6 1859.4,294.0 1882.8,294.0 1882.8,310.4 1780.8,310.4 1780.8,326.8 1778.5,326.8 1778.5,97.2"/><rect x="1963.0" y="211.5" width="74.0" height="16.9" fill="#c9c9c9"/><rect x="1963.0" y="228.4" width="74.0" height="15.9" fill="#ff1010"/><rect x="1975.0" y="261.7" width="49.0" height="14.9" fill="#1080ff"/><rect x="2037.0" y="261.2" width="28.3" height="16.4" fill="#10e010"/><line x1="1963" x2="2037" y1="211.5" y2="211.5" stroke="#000" stroke-width="1" stroke-dasharray="3 2"/><line x1="1963" x2="2037" y1="228.6" y2="228.6" stroke="#fff" stroke-width="1" stroke-dasharray="3 2"/><line x1="1963" x2="2037" y1="244.5" y2="244.5" stroke="#fff" stroke-width="1" stroke-dasharray="3 2"/><rect x="2096.0" y="80.8" width="26.2" height="16.6" fill="#10e810"/><rect x="2096.0" y="97.2" width="26.2" height="16.6" fill="#10e810"/><rect x="2096.0" y="113.6" width="23.2" height="16.6" fill="#10e810"/><rect x="2096.0" y="130.0" width="24.1" height="16.6" fill="#10e810"/><rect x="2096.0" y="146.4" width="25.0" height="16.6" fill="#10e810"/><rect x="2096.0" y="162.8" width="22.0" height="16.6" fill="#10e810"/><rect x="2096.0" y="179.2" width="23.2" height="16.6" fill="#10e810"/><rect x="2096.0" y="195.6" width="27.8" height="16.6" fill="#10e810"/><rect x="2096.0" y="212.0" width="27.8" height="16.6" fill="#10e810"/><rect x="2072.2" y="244.5" width="22.1" height="16.7" fill="#ff1010"/><rect x="2069.5" y="260.9" width="24.8" height="16.7" fill="#ff1010"/><rect x="2067.7" y="277.3" width="26.6" height="16.7" fill="#ff1010"/><rect x="2069.5" y="293.7" width="24.8" height="16.7" fill="#ff1010"/><rect x="2069.5" y="310.1" width="24.8" height="16.7" fill="#ff1010"/><rect x="2069.5" y="326.5" width="24.8" height="16.7" fill="#ff1010"/><rect x="2070.8" y="342.9" width="23.5" height="16.7" fill="#ff1010"/><rect x="2068.0" y="359.3" width="26.3" height="16.7" fill="#ff1010"/><rect x="2068.0" y="375.7" width="26.3" height="16.7" fill="#ff1010"/><rect x="2066.0" y="392.1" width="28.3" height="16.7" fill="#ff1010"/><line x1="2096" x2="2122.2" y1="80.8" y2="80.8" stroke="#003000" stroke-width="1" stroke-dasharray="3 2.5"/><line x1="2096" x2="2122.2" y1="97.2" y2="97.2" stroke="#003000" stroke-width="1" stroke-dasharray="3 2.5"/><line x1="2096" x2="2119.2" y1="113.6" y2="113.6" stroke="#003000" stroke-width="1" stroke-dasharray="3 2.5"/><line x1="2096" x2="2120.1" y1="130.0" y2="130.0" stroke="#003000" stroke-width="1" stroke-dasharray="3 2.5"/><line x1="2096" x2="2121.0" y1="146.4" y2="146.4" stroke="#003000" stroke-width="1" stroke-dasharray="3 2.5"/><line x1="2096" x2="2118.0" y1="162.8" y2="162.8" stroke="#003000" stroke-width="1" stroke-dasharray="3 2.5"/><line x1="2096" x2="2119.2" y1="179.2" y2="179.2" stroke="#003000" stroke-width="1" stroke-dasharray="3 2.5"/><line x1="2096" x2="2123.8" y1="195.6" y2="195.6" stroke="#003000" stroke-width="1" stroke-dasharray="3 2.5"/><line x1="2096" x2="2123.8" y1="212.0" y2="212.0" stroke="#003000" stroke-width="1" stroke-dasharray="3 2.5"/><line x1="2096" x2="2123.0" y1="228.4" y2="228.4" stroke="#003000" stroke-width="1" stroke-dasharray="3 2.5"/><line x1="2070" x2="2094" y1="244.8" y2="244.8" stroke="#500000" stroke-width="1" stroke-dasharray="3 2.5"/><line x1="2070" x2="2094" y1="261.2" y2="261.2" stroke="#500000" stroke-width="1" stroke-dasharray="3 2.5"/><line x1="2070" x2="2094" y1="277.6" y2="277.6" stroke="#500000" stroke-width="1" stroke-dasharray="3 2.5"/><line x1="2070" x2="2094" y1="294.0" y2="294.0" stroke="#500000" stroke-width="1" stroke-dasharray="3 2.5"/><line x1="2070" x2="2094" y1="310.4" y2="310.4" stroke="#500000" stroke-width="1" stroke-dasharray="3 2.5"/><line x1="2070" x2="2094" y1="326.8" y2="326.8" stroke="#500000" stroke-width="1" stroke-dasharray="3 2.5"/><line x1="2070" x2="2094" y1="343.2" y2="343.2" stroke="#500000" stroke-width="1" stroke-dasharray="3 2.5"/><line x1="2070" x2="2094" y1="359.6" y2="359.6" stroke="#500000" stroke-width="1" stroke-dasharray="3 2.5"/><line x1="2070" x2="2094" y1="376.0" y2="376.0" stroke="#500000" stroke-width="1" stroke-dasharray="3 2.5"/><line x1="2070" x2="2094" y1="392.4" y2="392.4" stroke="#500000" stroke-width="1" stroke-dasharray="3 2.5"/><line x1="2070" x2="2094" y1="408.8" y2="408.8" stroke="#500000" stroke-width="1" stroke-dasharray="3 2.5"/><rect x="2153.7" y="244.8" width="27.3" height="16.9" fill="#1f8a1f"/><rect x="2153.7" y="261.7" width="11.6" height="15.9" fill="#1f8a1f"/><rect x="2135.2" y="277.6" width="17.8" height="16.4" fill="#d81818"/><rect x="2149.8" y="228.4" width="3.2" height="65.6" fill="#a01818"/><rect x="2153.0" y="228.4" width="3.0" height="65.6" fill="#1f8a1f"/><line x1="2065.3" x2="2065.3" y1="2" y2="548" stroke="#3c8c3c" stroke-width="1.2"/><line x1="2095" x2="2095" y1="2" y2="548" stroke="#a87a20" stroke-width="1.2"/><line x1="2124.6" x2="2124.6" y1="2" y2="548" stroke="#b02424" stroke-width="1.2"/><rect x="2062.0" y="211.5" width="2.5" height="32.8" fill="#e02020"/><rect x="2062.3" y="277.6" width="3.7" height="32.8" fill="#20e820"/><rect x="2096.0" y="228.9" width="1.8" height="15.4" fill="#20e820"/><line x1="2037" x2="2182" y1="228.4" y2="228.4" stroke="#c02020" stroke-width="1.2"/><line x1="1775" x2="2182" y1="279.4" y2="279.4" stroke="#f0f0f0" stroke-width="1.3"/><line x1="1963" x2="2182" y1="295.3" y2="295.3" stroke="#30c030" stroke-width="1.2" stroke-dasharray="5 4"/><line x1="1778" x2="1948" y1="271" y2="271" stroke="#1080f0" stroke-width="1"/><circle cx="1785.1" cy="271" r="3" fill="#1080f0"/><circle cx="1798.1" cy="271" r="3" fill="#1080f0"/><circle cx="1811.1" cy="271" r="3" fill="#1080f0"/><circle cx="1824.1" cy="271" r="3" fill="#1080f0"/><circle cx="1837.1" cy="271" r="3" fill="#1080f0"/><circle cx="1850.1" cy="271" r="3" fill="#1080f0"/><circle cx="1863.1" cy="271" r="3" fill="#1080f0"/><circle cx="1876.1" cy="271" r="3" fill="#1080f0"/><circle cx="1889.1" cy="271" r="3" fill="#1080f0"/><circle cx="1902.1" cy="271" r="3" fill="#1080f0"/><circle cx="1915.1" cy="271" r="3" fill="#1080f0"/><circle cx="1928.1" cy="271" r="3" fill="#1080f0"/><circle cx="1941.1" cy="271" r="3" fill="#1080f0"/></svg><div class="r" style="left:1970px;top:23.5px;width:60px;height:548px;overflow:hidden"><span class="t" style="top:-4.70px;font:11px 'Liberation Mono', monospace;line-height:14px;color:#fff;left:5.20px;letter-spacing:1.4px;-webkit-text-stroke:0.3px #fff;">118.27</span><span class="t" style="top:11.70px;font:11px 'Liberation Mono', monospace;line-height:14px;color:#fff;left:5.20px;letter-spacing:1.4px;-webkit-text-stroke:0.3px #fff;">118.26</span><span class="t" style="top:28.10px;font:11px 'Liberation Mono', monospace;line-height:14px;color:#fff;left:5.20px;letter-spacing:1.4px;-webkit-text-stroke:0.3px #fff;">118.25</span><span class="t" style="top:44.50px;font:11px 'Liberation Mono', monospace;line-height:14px;color:#fff;left:5.20px;letter-spacing:1.4px;-webkit-text-stroke:0.3px #fff;">118.24</span><span class="t" style="top:60.90px;font:11px 'Liberation Mono', monospace;line-height:14px;color:#fff;left:5.20px;letter-spacing:1.4px;-webkit-text-stroke:0.3px #fff;">118.23</span><span class="t" style="top:77.30px;font:11px 'Liberation Mono', monospace;line-height:14px;color:#fff;left:5.20px;letter-spacing:1.4px;-webkit-text-stroke:0.3px #fff;">118.22</span><span class="t" style="top:93.70px;font:11px 'Liberation Mono', monospace;line-height:14px;color:#fff;left:5.20px;letter-spacing:1.4px;-webkit-text-stroke:0.3px #fff;">118.21</span><span class="t" style="top:110.10px;font:11px 'Liberation Mono', monospace;line-height:14px;color:#fff;left:5.20px;letter-spacing:1.4px;-webkit-text-stroke:0.3px #fff;">118.20</span><span class="t" style="top:126.50px;font:11px 'Liberation Mono', monospace;line-height:14px;color:#fff;left:5.20px;letter-spacing:1.4px;-webkit-text-stroke:0.3px #fff;">118.19</span><span class="t" style="top:142.90px;font:11px 'Liberation Mono', monospace;line-height:14px;color:#fff;left:5.20px;letter-spacing:1.4px;-webkit-text-stroke:0.3px #fff;">118.18</span><span class="t" style="top:159.30px;font:11px 'Liberation Mono', monospace;line-height:14px;color:#fff;left:5.20px;letter-spacing:1.4px;-webkit-text-stroke:0.3px #fff;">118.17</span><span class="t" style="top:175.70px;font:11px 'Liberation Mono', monospace;line-height:14px;color:#fff;left:5.20px;letter-spacing:1.4px;-webkit-text-stroke:0.3px #fff;">118.16</span><span class="t" style="top:192.10px;font:11px 'Liberation Mono', monospace;line-height:14px;color:#fff;left:5.20px;letter-spacing:1.4px;-webkit-text-stroke:0.3px #fff;">118.15</span><span class="t" style="top:208.50px;font:11px 'Liberation Mono', monospace;line-height:14px;color:#d82020;left:5.20px;letter-spacing:1.4px;-webkit-text-stroke:0.3px #d82020;">118.14</span><span class="t" style="top:224.90px;font:11px 'Liberation Mono', monospace;line-height:14px;color:#fff;left:5.20px;letter-spacing:1.4px;-webkit-text-stroke:0.3px #fff;">118.13</span><span class="t" style="top:241.30px;font:11px 'Liberation Mono', monospace;line-height:14px;color:#001040;left:5.20px;letter-spacing:1.4px;-webkit-text-stroke:0.3px #001040;">118.12</span><span class="t" style="top:257.70px;font:11px 'Liberation Mono', monospace;line-height:14px;color:#fff;left:5.20px;letter-spacing:1.4px;-webkit-text-stroke:0.3px #fff;">118.11</span><span class="t" style="top:274.10px;font:11px 'Liberation Mono', monospace;line-height:14px;color:#fff;left:5.20px;letter-spacing:1.4px;-webkit-text-stroke:0.3px #fff;">118.10</span><span class="t" style="top:290.50px;font:11px 'Liberation Mono', monospace;line-height:14px;color:#fff;left:5.20px;letter-spacing:1.4px;-webkit-text-stroke:0.3px #fff;">118.09</span><span class="t" style="top:306.90px;font:11px 'Liberation Mono', monospace;line-height:14px;color:#fff;left:5.20px;letter-spacing:1.4px;-webkit-text-stroke:0.3px #fff;">118.08</span><span class="t" style="top:323.30px;font:11px 'Liberation Mono', monospace;line-height:14px;color:#fff;left:5.20px;letter-spacing:1.4px;-webkit-text-stroke:0.3px #fff;">118.07</span><span class="t" style="top:339.70px;font:11px 'Liberation Mono', monospace;line-height:14px;color:#fff;left:5.20px;letter-spacing:1.4px;-webkit-text-stroke:0.3px #fff;">118.06</span><span class="t" style="top:356.10px;font:11px 'Liberation Mono', monospace;line-height:14px;color:#fff;left:5.20px;letter-spacing:1.4px;-webkit-text-stroke:0.3px #fff;">118.05</span><span class="t" style="top:372.50px;font:11px 'Liberation Mono', monospace;line-height:14px;color:#fff;left:5.20px;letter-spacing:1.4px;-webkit-text-stroke:0.3px #fff;">118.04</span><span class="t" style="top:388.90px;font:11px 'Liberation Mono', monospace;line-height:14px;color:#fff;left:5.20px;letter-spacing:1.4px;-webkit-text-stroke:0.3px #fff;">118.03</span><span class="t" style="top:405.30px;font:11px 'Liberation Mono', monospace;line-height:14px;color:#fff;left:5.20px;letter-spacing:1.4px;-webkit-text-stroke:0.3px #fff;">118.02</span><span class="t" style="top:421.70px;font:11px 'Liberation Mono', monospace;line-height:14px;color:#fff;left:5.20px;letter-spacing:1.4px;-webkit-text-stroke:0.3px #fff;">118.01</span><span class="t" style="top:438.10px;font:11px 'Liberation Mono', monospace;line-height:14px;color:#fff;left:5.20px;letter-spacing:1.4px;-webkit-text-stroke:0.3px #fff;">118.00</span><span class="t" style="top:454.50px;font:11px 'Liberation Mono', monospace;line-height:14px;color:#fff;left:5.20px;letter-spacing:1.4px;-webkit-text-stroke:0.3px #fff;">117.99</span><span class="t" style="top:470.90px;font:11px 'Liberation Mono', monospace;line-height:14px;color:#fff;left:5.20px;letter-spacing:1.4px;-webkit-text-stroke:0.3px #fff;">117.98</span><span class="t" style="top:487.30px;font:11px 'Liberation Mono', monospace;line-height:14px;color:#fff;left:5.20px;letter-spacing:1.4px;-webkit-text-stroke:0.3px #fff;">117.97</span><span class="t" style="top:503.70px;font:11px 'Liberation Mono', monospace;line-height:14px;color:#fff;left:5.20px;letter-spacing:1.4px;-webkit-text-stroke:0.3px #fff;">117.96</span></div><span class="t" style="top:6.30px;font:11px 'Liberation Mono', monospace;line-height:14px;color:#fff;left:2068.60px;letter-spacing:0.5px;">Buy</span><span class="t" style="top:6.30px;font:11px 'Liberation Mono', monospace;line-height:14px;color:#fff;left:2095.30px;letter-spacing:0.3px;">Sell</span><div class="r" style="left:2094.40px;top:2.00px;width:1.20px;height:20.00px;background:#a87a20;"></div><span class="t" style="top:150.00px;font:11px 'Liberation Mono', monospace;line-height:14px;color:#fff;left:2039.20px;letter-spacing:0.5px;-webkit-text-stroke:0.3px #fff;">-28</span><span class="t" style="top:166.40px;font:11px 'Liberation Mono', monospace;line-height:14px;color:#ffff40;left:2039.20px;letter-spacing:0.5px;-webkit-text-stroke:0.3px #ffff40;">-69</span><span class="t" style="top:182.80px;font:11px 'Liberation Mono', monospace;line-height:14px;color:#ffff40;left:2039.20px;letter-spacing:0.5px;-webkit-text-stroke:0.3px #ffff40;">-88</span><span class="t" style="top:199.20px;font:11px 'Liberation Mono', monospace;line-height:14px;color:#ffff40;left:2046.30px;letter-spacing:0.5px;-webkit-text-stroke:0.3px #ffff40;">-3</span><span class="t" style="top:215.60px;font:11px 'Liberation Mono', monospace;line-height:14px;color:#9a5050;left:2046.30px;letter-spacing:0.5px;-webkit-text-stroke:0.3px #9a5050;">65</span><span class="t" style="top:232.00px;font:11px 'Liberation Mono', monospace;line-height:14px;color:#9a5050;left:2046.30px;letter-spacing:0.5px;-webkit-text-stroke:0.3px #9a5050;">67</span><span class="t" style="top:248.40px;font:11px 'Liberation Mono', monospace;line-height:14px;color:#ffff40;left:2039.20px;letter-spacing:0.5px;-webkit-text-stroke:0.3px #ffff40;">-20</span><span class="t" style="top:264.80px;font:11px 'Liberation Mono', monospace;line-height:14px;color:#18a018;left:2039.20px;letter-spacing:0.5px;-webkit-text-stroke:0.3px #18a018;">723</span><span class="t" style="top:281.20px;font:11px 'Liberation Mono', monospace;line-height:14px;color:#208a20;left:2046.30px;letter-spacing:0.5px;-webkit-text-stroke:0.3px #208a20;">67</span><span class="t" style="top:297.60px;font:11px 'Liberation Mono', monospace;line-height:14px;color:#208a20;left:2046.30px;letter-spacing:0.5px;-webkit-text-stroke:0.3px #208a20;">39</span><span class="t" style="top:314.00px;font:11px 'Liberation Mono', monospace;line-height:14px;color:#fff;left:2039.20px;letter-spacing:0.5px;-webkit-text-stroke:0.3px #fff;">809</span><span class="t" style="top:83.80px;font:11px 'Liberation Mono', monospace;line-height:14px;color:#10a010;left:2100.70px;letter-spacing:0.5px;">755</span><span class="t" style="top:100.20px;font:11px 'Liberation Mono', monospace;line-height:14px;color:#10a010;left:2100.70px;letter-spacing:0.5px;">769</span><span class="t" style="top:116.60px;font:11px 'Liberation Mono', monospace;line-height:14px;color:#10a010;left:2100.70px;letter-spacing:0.5px;">663</span><span class="t" style="top:133.00px;font:11px 'Liberation Mono', monospace;line-height:14px;color:#10a010;left:2100.70px;letter-spacing:0.5px;">710</span><span class="t" style="top:149.40px;font:11px 'Liberation Mono', monospace;line-height:14px;color:#10a010;left:2100.70px;letter-spacing:0.5px;">724</span><span class="t" style="top:165.80px;font:11px 'Liberation Mono', monospace;line-height:14px;color:#10a010;left:2100.70px;letter-spacing:0.5px;">649</span><span class="t" style="top:182.20px;font:11px 'Liberation Mono', monospace;line-height:14px;color:#10a010;left:2100.70px;letter-spacing:0.5px;">682</span><span class="t" style="top:198.60px;font:11px 'Liberation Mono', monospace;line-height:14px;color:#10a010;left:2100.70px;letter-spacing:0.5px;">808</span><span class="t" style="top:215.00px;font:11px 'Liberation Mono', monospace;line-height:14px;color:#10a010;left:2100.70px;letter-spacing:0.5px;">801</span><span class="t" style="top:247.80px;font:11px 'Liberation Mono', monospace;line-height:14px;color:#d03030;left:2071.20px;letter-spacing:0.5px;">637</span><span class="t" style="top:264.20px;font:11px 'Liberation Mono', monospace;line-height:14px;color:#d03030;left:2071.20px;letter-spacing:0.5px;">728</span><span class="t" style="top:280.60px;font:11px 'Liberation Mono', monospace;line-height:14px;color:#d03030;left:2071.20px;letter-spacing:0.5px;">762</span><span class="t" style="top:297.00px;font:11px 'Liberation Mono', monospace;line-height:14px;color:#d03030;left:2071.20px;letter-spacing:0.5px;">696</span><span class="t" style="top:313.40px;font:11px 'Liberation Mono', monospace;line-height:14px;color:#d03030;left:2071.20px;letter-spacing:0.5px;">705</span><span class="t" style="top:329.80px;font:11px 'Liberation Mono', monospace;line-height:14px;color:#d03030;left:2071.20px;letter-spacing:0.5px;">711</span><span class="t" style="top:346.20px;font:11px 'Liberation Mono', monospace;line-height:14px;color:#d03030;left:2071.20px;letter-spacing:0.5px;">690</span><span class="t" style="top:362.60px;font:11px 'Liberation Mono', monospace;line-height:14px;color:#d03030;left:2071.20px;letter-spacing:0.5px;">706</span><span class="t" style="top:379.00px;font:11px 'Liberation Mono', monospace;line-height:14px;color:#d03030;left:2071.20px;letter-spacing:0.5px;">756</span><span class="t" style="top:395.40px;font:11px 'Liberation Mono', monospace;line-height:14px;color:#d03030;left:2071.20px;letter-spacing:0.5px;">815</span><span class="t" style="top:66.00px;font:11px 'Liberation Mono', monospace;line-height:14px;color:#fff;left:2100.00px;letter-spacing:0px;-webkit-text-stroke:0.3px #fff;">48%</span><span class="t" style="top:413.00px;font:11px 'Liberation Mono', monospace;line-height:14px;color:#fff;left:2069.50px;letter-spacing:0px;-webkit-text-stroke:0.3px #fff;">52%</span><span class="t" style="top:232.00px;font:11px 'Liberation Mono', monospace;line-height:14px;color:#188018;left:2101.00px;letter-spacing:0.5px;">71</span><span class="t" style="top:232.00px;font:11px 'Liberation Mono', monospace;line-height:14px;color:#fff;left:2127.60px;letter-spacing:0.3px;-webkit-text-stroke:0.3px #fff;">118</span><span class="t" style="top:232.00px;font:11px 'Liberation Mono', monospace;line-height:14px;color:#fff;left:2157.80px;letter-spacing:0.3px;-webkit-text-stroke:0.3px #fff;">84</span><span class="t" style="top:248.40px;font:11px 'Liberation Mono', monospace;line-height:14px;color:#fff;left:2134.50px;letter-spacing:0.3px;-webkit-text-stroke:0.3px #fff;">19</span><span class="t" style="top:248.40px;font:11px 'Liberation Mono', monospace;line-height:14px;color:#fff;left:2157.80px;letter-spacing:0.3px;-webkit-text-stroke:0.3px #fff;">748</span><span class="t" style="top:264.80px;font:11px 'Liberation Mono', monospace;line-height:14px;color:#fff;left:2134.50px;letter-spacing:0.3px;-webkit-text-stroke:0.3px #fff;">53</span><span class="t" style="top:264.80px;font:11px 'Liberation Mono', monospace;line-height:14px;color:#fff;left:2157.80px;letter-spacing:0.3px;-webkit-text-stroke:0.3px #fff;">349</span><span class="t" style="top:281.20px;font:11px 'Liberation Mono', monospace;line-height:14px;color:#fff;left:2127.60px;letter-spacing:0.3px;-webkit-text-stroke:0.3px #fff;">474</span><span class="t" style="top:281.20px;font:11px 'Liberation Mono', monospace;line-height:14px;color:#fff;left:2157.80px;letter-spacing:0.3px;-webkit-text-stroke:0.3px #fff;">98</span><span class="t" style="top:228.60px;font:15px 'Liberation Sans', sans-serif;line-height:20px;color:#ffe020;letter-spacing:2.156px;left:1929.00px;">-42</span></div>
<!-- part_chart --><div class="r" style="left:1649px;top:540px;width:589px;height:416px;border-radius:7px 7px 0 0;box-shadow:0 0 3px rgba(0,0,0,.35);"></div><div class="layer" style="clip-path:inset(540px 221px 212px 1649px round 7px 7px 0 0);"><div class="r" style="left:1649.00px;top:540.00px;width:589.00px;height:416.00px;background:linear-gradient(to bottom,#c3d3e4 0px,#d3dfec 14px,#dbe5f0 32px,#d9e4f0 100%);border:1px solid #4c4e54;border-radius:7px 7px 0 0;box-shadow:inset 0 0 0 1px rgba(240,244,255,.8);"></div><div class="r" style="left:1657.50px;top:570.00px;width:572.50px;height:377.50px;background:#fff;"></div><div class="r" style="left:1657.50px;top:570.00px;width:1.50px;height:377.00px;background:#707070;"></div><div class="r" style="left:1657.50px;top:570.00px;width:572.00px;height:1.20px;background:#707070;"></div><div class="r" style="left:1660.00px;top:572.00px;width:568.00px;height:357.80px;background:#000;"></div><svg class="r" style="left:1659px;top:551.5px" width="15" height="12" viewBox="0 0 15 12"><rect x="0.5" y="0.5" width="14" height="11" fill="#f4f6f8" stroke="#aab4be"/><rect x="1.5" y="2.5" width="5" height="7" fill="#2f8f7f"/><rect x="7.5" y="7" width="3" height="2" fill="#9ab"/><rect x="11.5" y="2.5" width="1.5" height="5" fill="#555"/></svg><span class="t" style="top:550.80px;font:12px 'Liberation Sans', sans-serif;line-height:16px;color:#8796a6;letter-spacing:-0.475px;left:1679.60px;">Paused 1.00X: FGBMZ24-EUREX [CV]  30 Min  #2 L:2 | Euro Bobl - EUREX (Dec24)</span><div class="r" style="left:2128.20px;top:549.50px;width:31.30px;height:17.20px;background:linear-gradient(to bottom,#d6e2ee,#cddae8);border:1px solid #8b9db2;border-radius:3px;box-shadow:inset 0 0 0 1px rgba(255,255,255,.55);"></div><div class="r" style="left:2162.40px;top:549.50px;width:31.30px;height:17.20px;background:linear-gradient(to bottom,#d6e2ee,#cddae8);border:1px solid #8b9db2;border-radius:3px;box-shadow:inset 0 0 0 1px rgba(255,255,255,.55);"></div><div class="r" style="left:2196.50px;top:549.50px;width:31.30px;height:17.20px;background:linear-gradient(to bottom,#d6e2ee,#cddae8);border:1px solid #8b9db2;border-radius:3px;box-shadow:inset 0 0 0 1px rgba(255,255,255,.55);"></div><svg class="r" style="left:2128px;top:549px" width="100" height="18" viewBox="0 0 100 18" fill="none" stroke="#5b6570" stroke-width="1.6"><rect x="11" y="9" width="9" height="3" fill="#f4f6f8" stroke-width="1.3"/><rect x="44.5" y="5" width="9.5" height="7.5" fill="#f4f6f8" stroke-width="1.4"/><rect x="47.5" y="8" width="3.5" height="2" stroke-width="1"/><path d="M80 5l8 8M88 5l-8 8" stroke-width="2.6" stroke="#5b6570"/><path d="M80 5l8 8M88 5l-8 8" stroke-width="0.9" stroke="#f4f6f8"/></svg><svg class="r" style="left:0;top:0" width="2459" height="1168" viewBox="0 0 2459 1168" shape-rendering="crispEdges"><rect x="1730.7" y="587.0" width="213.6" height="322.5" fill="#244242"/><rect x="1698.4" y="587.0" width="1.2" height="80.0" fill="#e8b050"/><rect x="1700.0" y="587.0" width="2.4" height="80.0" fill="#e01808"/><rect x="1698.3" y="667.0" width="2.2" height="86.0" fill="#e01808"/><rect x="1700.4" y="667.0" width="1.2" height="86.0" fill="#e8c070"/><rect x="1703.9" y="676.0" width="1.2" height="77.0" fill="#d02010"/><rect x="1700.0" y="753.0" width="5.5" height="39.0" fill="#d81808"/><rect x="1704.8" y="753.0" width="1.2" height="39.0" fill="#f0e090"/><rect x="1707.9" y="753.0" width="1.2" height="39.0" fill="#d02010"/><rect x="1707.2" y="792.0" width="2.6" height="77.0" fill="#d81808"/><rect x="1707.0" y="792.0" width="1.2" height="77.0" fill="#f0e090"/><rect x="1711.8" y="830.0" width="1.3" height="39.0" fill="#d02010"/><rect x="1708.0" y="869.0" width="6.8" height="40.5" fill="#d81808"/><rect x="1713.8" y="869.0" width="1.2" height="21.0" fill="#f0e090"/><rect x="1715.0" y="890.0" width="1.2" height="19.5" fill="#f0e090"/><rect x="1716.0" y="905.0" width="5.0" height="4.5" fill="#c01808"/><rect x="1725.2" y="587.0" width="2.8" height="322.5" fill="#6f6f6f"/><rect x="1721.2" y="657.0" width="4.8" height="38.0" fill="#6f6f6f"/><rect x="1719.8" y="695.0" width="6.2" height="38.6" fill="#6f6f6f"/><rect x="1722.4" y="733.6" width="3.6" height="39.2" fill="#6f6f6f"/><line x1="1727.3" x2="1822.4" y1="638.5" y2="638.5" stroke="#ffffa0" stroke-width="1.4" stroke-dasharray="2.4 1.3"/><rect x="1791.9" y="638.5" width="1.8" height="271.0" fill="#c05850"/><rect x="1791.5" y="715.4" width="3.1" height="194.1" fill="#c05850"/><rect x="1788.0" y="715.4" width="1.6" height="194.1" fill="#50f060"/><rect x="1789.3" y="753.0" width="1.0" height="156.5" fill="#a8f0a0"/><rect x="1787.0" y="753.0" width="1.2" height="156.5" fill="#30e040"/><rect x="1807.9" y="676.0" width="1.4" height="233.5" fill="#30d050"/><rect x="1806.7" y="753.0" width="1.4" height="156.5" fill="#60f070"/><rect x="1810.7" y="792.0" width="3.0" height="117.5" fill="#c05850"/><rect x="1803.7" y="869.0" width="1.4" height="40.5" fill="#30e040"/><rect x="1805.4" y="830.0" width="1.2" height="79.5" fill="#30e040"/><rect x="1862.0" y="618.0" width="26.0" height="291.5" fill="#6a8c8c"/><rect x="1872.8" y="587.0" width="15.2" height="31.0" fill="#6a8c8c"/><rect x="1850.3" y="695.0" width="11.7" height="38.5" fill="#7e9e9a"/><rect x="1853.8" y="733.5" width="8.2" height="39.5" fill="#6a8c8c"/><rect x="1862.0" y="773.0" width="3.2" height="38.0" fill="#244242"/><rect x="1862.0" y="811.0" width="11.0" height="39.0" fill="#244242"/><rect x="1862.0" y="850.0" width="4.0" height="37.7" fill="#244242"/><rect x="1851.6" y="587.0" width="1.4" height="191.0" fill="#58e868"/><rect x="1851.0" y="778.0" width="3.0" height="131.5" fill="#30e848"/><rect x="1850.5" y="733.0" width="0.9" height="176.5" fill="#90f0a0"/><rect x="1859.5" y="587.0" width="2.5" height="13.4" fill="#28e040"/><rect x="1858.0" y="600.4" width="4.1" height="94.6" fill="#28e040"/><rect x="1857.8" y="600.4" width="0.9" height="94.6" fill="#90f0a0"/><rect x="1861.3" y="587.0" width="0.9" height="108.0" fill="#90f0a0"/><rect x="1856.0" y="675.4" width="3.0" height="57.6" fill="#30e848"/><rect x="1855.8" y="675.4" width="0.9" height="97.6" fill="#90f0a0"/><rect x="1855.8" y="773.0" width="1.2" height="136.5" fill="#30d040"/><rect x="1859.2" y="695" width="2.6" height="59" fill="none" stroke="#90f0a0" stroke-width="0.9"/><rect x="1872.4" y="587.0" width="1.6" height="11.4" fill="#c89090"/><rect x="1880.5" y="587.0" width="1.5" height="88.0" fill="#c89898"/><rect x="1884.3" y="587.0" width="1.3" height="127.5" fill="#c8a0a0"/><polyline fill="none" stroke="#dfe6c8" stroke-width="1" points="1883.7,587 1883.7,624 1884.7,624 1884.7,647.7 1886,647.7 1886,667 1887.3,667 1887.3,686.7 1888.3,686.7 1888.3,716"/><rect x="1888.0" y="587.0" width="56.0" height="322.5" fill="#244242"/><rect x="1890.9" y="638.0" width="3.1" height="38.5" fill="#b83030"/><rect x="1888.3" y="676.5" width="3.1" height="39.5" fill="#a42828"/><rect x="1887.8" y="716.0" width="6.2" height="34.0" fill="#c04444"/><rect x="1890.2" y="716.0" width="0.8" height="34.0" fill="#702020"/><rect x="1889.4" y="700" width="4" height="15.5" fill="none" stroke="#e8d890" stroke-width="0.9"/><rect x="1894.5" y="587.0" width="3.5" height="108.0" fill="#28e040"/><rect x="1894.3" y="587.0" width="0.8" height="108.0" fill="#90f0a0"/><rect x="1897.4" y="587.0" width="0.8" height="108.0" fill="#90f0a0"/><rect x="1893.0" y="676.5" width="1.2" height="39.5" fill="#40e050"/><rect x="1895" y="695" width="3" height="20.6" fill="none" stroke="#30e848" stroke-width="1"/><rect x="1898.0" y="599.4" width="4.2" height="57.6" fill="#5a94c4"/><rect x="1902.2" y="587.0" width="7.7" height="30.9" fill="#5a94c4"/><rect x="1914.0" y="587.0" width="8.2" height="30.9" fill="#5a94c4"/><rect x="1918.1" y="617.9" width="4.1" height="39.1" fill="#5a94c4"/><rect x="1934.0" y="587.0" width="4.7" height="30.9" fill="#5a94c4"/><rect x="1899.6" y="587.0" width="2.1" height="12.4" fill="#c03030"/><rect x="1899.7" y="599.4" width="1.8" height="38.6" fill="#c08080"/><rect x="1902.7" y="587.0" width="3.1" height="12.4" fill="#28e040"/><rect x="1902.5" y="587.0" width="0.8" height="12.4" fill="#90f0a0"/><rect x="1905.2" y="587.0" width="0.8" height="12.4" fill="#90f0a0"/><rect x="1919.3" y="587.0" width="2.2" height="51.0" fill="#b08080"/><rect x="1920.8" y="587.0" width="1.2" height="8.0" fill="#90f0a0"/><rect x="1922.7" y="587.0" width="3.1" height="52.0" fill="#28e040"/><rect x="1925.2" y="587.0" width="0.8" height="52.0" fill="#90f0a0"/><rect x="1927.4" y="695.0" width="10.2" height="38.5" fill="#6a8c8c"/><rect x="1933.0" y="657.0" width="10.8" height="38.0" fill="#6a8c8c"/><rect x="1937.6" y="695.0" width="6.2" height="38.5" fill="#6a8c8c"/><rect x="1934.0" y="811.0" width="6.3" height="39.0" fill="#6a8c8c"/><rect x="1941.0" y="869.0" width="3.0" height="18.7" fill="#6a8c8c"/><rect x="1938.2" y="587.0" width="1.3" height="146.0" fill="#d0c0b0"/><rect x="1937.7" y="733.0" width="2.4" height="78.0" fill="#e0d080"/><rect x="1940.4" y="587.0" width="1.6" height="282.0" fill="#c08878"/><rect x="1941.4" y="695.0" width="1.2" height="97.0" fill="#a0f0a0"/><rect x="1942.3" y="657.0" width="3.6" height="19.5" fill="#d0f040"/><rect x="1943.3" y="676.5" width="2.6" height="115.1" fill="#20e030"/><rect x="1886.2" y="756.0" width="7.8" height="55.0" fill="#6098c8"/><rect x="1886.2" y="756.0" width="4.1" height="55.0" fill="#a0d0f0"/><rect x="1889.3" y="750.0" width="57.6" height="6.2" fill="#1080f0"/><rect x="1886.2" y="750.0" width="3.1" height="6.2" fill="#e8f4ff"/><line x1="1887.2" x2="1946" y1="869.3" y2="869.3" stroke="#ffffa0" stroke-width="1.4" stroke-dasharray="2.4 1.3"/><rect x="1945.8" y="657.0" width="219.6" height="37.8" fill="#3e3e00"/><rect x="1945.8" y="694.8" width="219.6" height="39.0" fill="#6494c8"/><rect x="1945.0" y="676.0" width="225.0" height="2.0" fill="#d82010"/><polyline fill="none" stroke="#90e890" stroke-width="1.1" points="1944.4,657 1945.9,645 1945.9,638.5 2166,638.5"/><rect x="2140.9" y="598.6" width="20.1" height="3.0" fill="#c83030"/><rect x="2143.0" y="791.5" width="18.0" height="3.0" fill="#20e8e8"/><rect x="2166.0" y="572.0" width="1.4" height="339.0" fill="#fff"/><rect x="1660.0" y="909.6" width="507.0" height="1.4" fill="#fff"/><rect x="2167.0" y="599.4" width="3.5" height="1.2" fill="#fff"/><rect x="2167.0" y="638.0" width="3.5" height="1.2" fill="#fff"/><rect x="2167.0" y="676.6" width="3.5" height="1.2" fill="#fff"/><rect x="2167.0" y="715.2" width="3.5" height="1.2" fill="#fff"/><rect x="2167.0" y="753.8" width="3.5" height="1.2" fill="#fff"/><rect x="2167.0" y="792.4" width="3.5" height="1.2" fill="#fff"/><rect x="2167.0" y="831.0" width="3.5" height="1.2" fill="#fff"/><rect x="2167.0" y="869.6" width="3.5" height="1.2" fill="#fff"/><rect x="2167.0" y="908.2" width="3.5" height="1.2" fill="#fff"/><rect x="1663.3" y="911.0" width="1.4" height="3.5" fill="#fff"/><rect x="1755.6" y="911.0" width="1.4" height="3.5" fill="#fff"/><rect x="1799.8" y="911.0" width="1.4" height="3.5" fill="#fff"/><rect x="1843.9" y="911.0" width="1.4" height="3.5" fill="#fff"/><rect x="1915.3" y="911.0" width="1.4" height="3.5" fill="#fff"/><rect x="1955.6" y="911.0" width="1.4" height="3.5" fill="#fff"/><rect x="1999.3" y="911.0" width="1.4" height="3.5" fill="#fff"/><rect x="2075.9" y="911.0" width="1.4" height="3.5" fill="#fff"/><rect x="2115.6" y="911.0" width="1.4" height="3.5" fill="#fff"/><rect x="2159.8" y="911.0" width="1.4" height="3.5" fill="#fff"/><rect x="2171.0" y="669.3" width="48.4" height="14.9" fill="#fff"/><rect x="2171.0" y="745.2" width="48.8" height="14.6" fill="#1080ff"/><rect x="1659.8" y="914.0" width="45.2" height="15.8" fill="#fff"/><rect x="1736.0" y="914.0" width="41.0" height="15.8" fill="#fff"/><rect x="1900.0" y="914.0" width="33.0" height="15.8" fill="#fff"/><rect x="2059.7" y="914.0" width="33.3" height="15.8" fill="#fff"/><rect x="2205.0" y="913.0" width="22.2" height="14.8" fill="#10c010"/></svg><div class="r" style="left:1660.00px;top:572.00px;width:506.00px;height:15.00px;background:#000;"></div><div class="r" style="left:1660px;top:572px;width:504px;height:15px;overflow:hidden"><span class="t" style="top:0.50px;font:11.5px 'Liberation Mono', monospace;line-height:15px;color:#fff;left:4.40px;letter-spacing:0.85px;-webkit-text-stroke:0.3px #fff;">Paused 1.00X: FGBMZ24-EUREX [CV]  30 Min  #2 Market Depth Historical</span></div><div class="r" style="left:2060px;top:587px;width:104px;height:4px;overflow:hidden"><span class="t" style="top:-8.50px;font:11px 'Liberation Mono', monospace;line-height:14px;color:#e02020;left:5.50px;letter-spacing:1.3px;">6002  69.1%</span></div><div class="r" style="left:2168px;top:572px;width:60px;height:337.5px;overflow:hidden"><span class="t" style="top:21.30px;font:11px 'Liberation Mono', monospace;line-height:14px;color:#fff;left:3.80px;letter-spacing:1.4px;-webkit-text-stroke:0.3px #fff;">118.16</span><span class="t" style="top:59.90px;font:11px 'Liberation Mono', monospace;line-height:14px;color:#fff;left:3.80px;letter-spacing:1.4px;-webkit-text-stroke:0.3px #fff;">118.15</span><span class="t" style="top:98.50px;font:11px 'Liberation Mono', monospace;line-height:14px;color:#e01010;left:3.80px;letter-spacing:1.4px;-webkit-text-stroke:0.3px #e01010;">118.14</span><span class="t" style="top:137.10px;font:11px 'Liberation Mono', monospace;line-height:14px;color:#fff;left:3.80px;letter-spacing:1.4px;-webkit-text-stroke:0.3px #fff;">118.13</span><span class="t" style="top:175.70px;font:11px 'Liberation Mono', monospace;line-height:14px;color:#001040;left:3.80px;letter-spacing:1.4px;-webkit-text-stroke:0.3px #001040;">118.12</span><span class="t" style="top:214.30px;font:11px 'Liberation Mono', monospace;line-height:14px;color:#fff;left:3.80px;letter-spacing:1.4px;-webkit-text-stroke:0.3px #fff;">118.11</span><span class="t" style="top:252.90px;font:11px 'Liberation Mono', monospace;line-height:14px;color:#fff;left:3.80px;letter-spacing:1.4px;-webkit-text-stroke:0.3px #fff;">118.10</span><span class="t" style="top:291.50px;font:11px 'Liberation Mono', monospace;line-height:14px;color:#fff;left:3.80px;letter-spacing:1.4px;-webkit-text-stroke:0.3px #fff;">118.09</span><span class="t" style="top:330.10px;font:11px 'Liberation Mono', monospace;line-height:14px;color:#fff;left:3.80px;letter-spacing:1.4px;-webkit-text-stroke:0.3px #fff;">118.08</span></div><span class="t" style="top:669.60px;font:11px 'Liberation Mono', monospace;line-height:14px;color:#40e020;left:2143.00px;letter-spacing:1.6px;">71</span><span class="t" style="top:708.60px;font:11px 'Liberation Mono', monospace;line-height:14px;color:#e03040;left:2134.00px;letter-spacing:1.4px;">637</span><span class="t" style="top:799.40px;font:11px 'Liberation Mono', monospace;line-height:14px;color:#28e0e0;left:2065.50px;letter-spacing:1.28px;">3578 - 30.9%</span><span class="t" style="top:915.20px;font:11px 'Liberation Mono', monospace;line-height:14px;color:#000;left:1663.50px;letter-spacing:1.5px;-webkit-text-stroke:0.3px #000;">10-30</span><span class="t" style="top:915.20px;font:11px 'Liberation Mono', monospace;line-height:14px;color:#000;left:1737.00px;letter-spacing:1.5px;-webkit-text-stroke:0.3px #000;">10-31</span><span class="t" style="top:915.20px;font:11px 'Liberation Mono', monospace;line-height:14px;color:#fff;left:1784.60px;letter-spacing:1.5px;-webkit-text-stroke:0.3px #fff;">5:30</span><span class="t" style="top:915.20px;font:11px 'Liberation Mono', monospace;line-height:14px;color:#fff;left:1825.00px;letter-spacing:1.5px;-webkit-text-stroke:0.3px #fff;">11:00</span><span class="t" style="top:915.20px;font:11px 'Liberation Mono', monospace;line-height:14px;color:#000;left:1901.00px;letter-spacing:1.5px;-webkit-text-stroke:0.3px #000;">11-1</span><span class="t" style="top:915.20px;font:11px 'Liberation Mono', monospace;line-height:14px;color:#fff;left:1940.20px;letter-spacing:1.5px;-webkit-text-stroke:0.3px #fff;">5:00</span><span class="t" style="top:915.20px;font:11px 'Liberation Mono', monospace;line-height:14px;color:#fff;left:1980.40px;letter-spacing:1.5px;-webkit-text-stroke:0.3px #fff;">10:30</span><span class="t" style="top:915.20px;font:11px 'Liberation Mono', monospace;line-height:14px;color:#000;left:2060.70px;letter-spacing:1.5px;-webkit-text-stroke:0.3px #000;">11-2</span><span class="t" style="top:915.20px;font:11px 'Liberation Mono', monospace;line-height:14px;color:#fff;left:2100.20px;letter-spacing:1.5px;-webkit-text-stroke:0.3px #fff;">5:00</span><span class="t" style="top:915.20px;font:11px 'Liberation Mono', monospace;line-height:14px;color:#fff;left:2140.60px;letter-spacing:1.5px;-webkit-text-stroke:0.3px #fff;">10:30</span><span class="t" style="top:913.80px;font:11px 'Liberation Mono', monospace;line-height:14px;color:#fff;left:2212.50px;letter-spacing:1.4px;">3</span><div class="r" style="left:1659.00px;top:929.80px;width:569.50px;height:16.70px;background:#f0eeec;"></div><div class="r" style="left:2194.50px;top:936.80px;width:16.00px;height:2.00px;background:#8f8f8f;"></div></div></body></html>
